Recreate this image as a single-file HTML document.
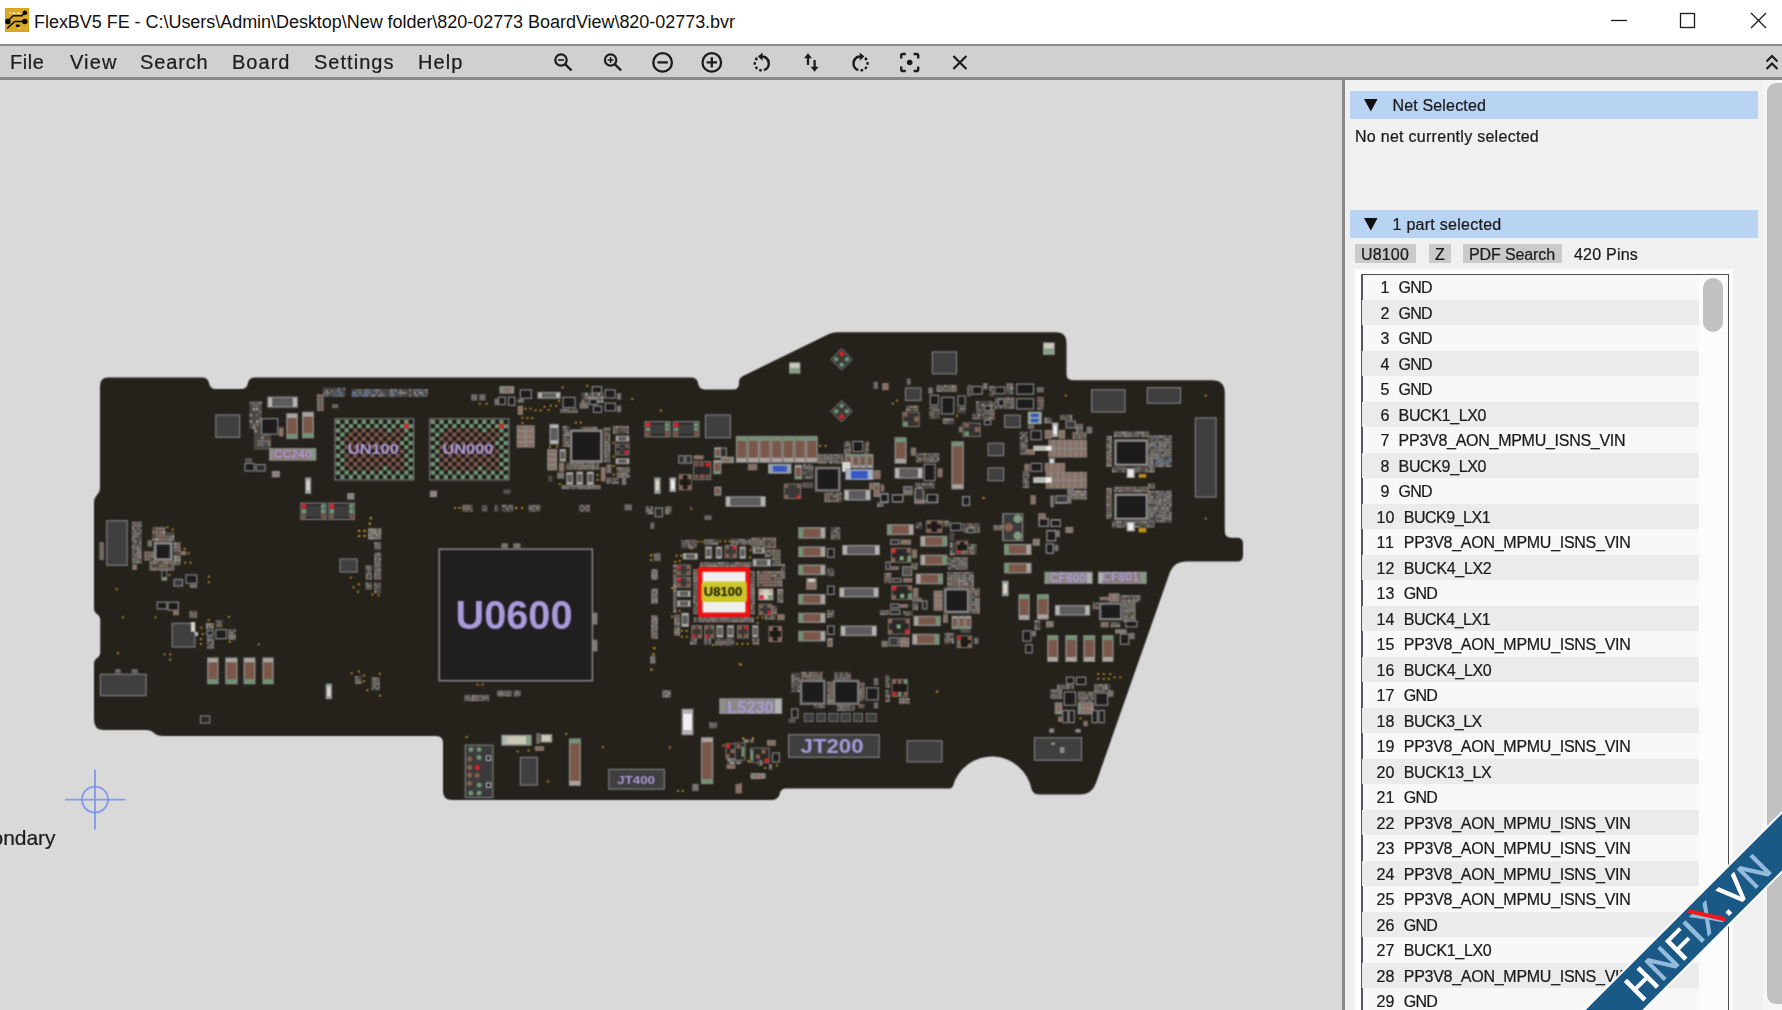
<!DOCTYPE html><html><head><meta charset="utf-8"><title>FlexBV5 FE</title><style>
html,body{margin:0;padding:0;}
body{width:1782px;height:1010px;overflow:hidden;position:relative;background:#d9d9d9;font-family:"Liberation Sans",sans-serif;}
.t{position:absolute;white-space:pre;line-height:1;-webkit-text-stroke:.22px;}
.nt{-webkit-text-stroke:0;}
.abs{position:absolute;}
#titlebar{left:0;top:0;width:1782px;height:44px;background:#fff;}
#menubar{left:0;top:44px;width:1782px;height:36px;background:#d0d0d0;box-sizing:border-box;border-top:2px solid #8c8c8c;border-bottom:3px solid #8a8a8a;}
#side{left:1342px;top:80px;width:440px;height:930px;background:#f0f0f0;box-sizing:border-box;border-left:3px solid #888;}
.hdr{position:absolute;left:1350.300px;width:408px;height:28px;background:#b9d4f2;}
.btn{position:absolute;top:244px;height:19px;background:#cacaca;}
.row{position:absolute;left:1362px;width:337px;height:25.5px;}
</style></head><body>
<div id="titlebar" class="abs"></div>
<div id="menubar" class="abs"></div>
<svg class="abs" style="left:5px;top:8px" width="24" height="24" viewBox="0 0 24 24"><rect width="24" height="24" fill="#d49f12"/><rect x=".7" y=".7" width="22.6" height="22.6" fill="#d8aa28"/>
<g stroke="#0c0a04" stroke-width="1.5" fill="none" stroke-linecap="round" stroke-linejoin="round"><path d="M19.500 4.800L17 7.800H8.200L3.400 12.200"/><path d="M19.500 13.600H9.600L2.600 20"/></g>
<g fill="#0c0a04"><circle cx="19.800" cy="4.700" r="2.200"/><path d="M20 2.500L22.600 5.200L20 6.500Z"/><circle cx="19.800" cy="13.500" r="2.800"/><rect x=".2" y="10.800" width="5.400" height="5.400" rx="2"/><rect x="10.800" y="16.600" width="4" height="2.400" rx="1"/></g>
<g fill="#fbf3d8"><rect x="4.200" y="4.400" width="1.700" height="1.300"/><rect x="7.400" y="4.400" width="3" height="1.300"/><rect x="12.100" y="4.400" width="3.100" height="1.300"/><rect x="13.600" y="19.600" width="1.500" height="1.200"/></g></svg><span class="t nt" style="left:34.00px;top:13.36px;font-size:18px;color:#111;letter-spacing:-0.038px;">FlexBV5 FE - C:\Users\Admin\Desktop\New folder\820-02773 BoardView\820-02773.bvr</span><svg class="abs" style="left:1600px;top:0" width="182" height="44" viewBox="1600 0 182 44" fill="none" stroke="#1a1a1a" stroke-width="1.3">
<path d="M1611 20.5H1627"/><rect x="1680.5" y="13.5" width="14" height="14"/><path d="M1751 13L1766 28M1766 13L1751 28"/></svg><div id="app" class="abs" style="left:0;top:0;width:1782px;height:1010px;will-change:transform"><span class="t " style="left:10.00px;top:52.27px;font-size:20px;color:#1c1c1c;letter-spacing:0.566px;">File</span><span class="t " style="left:70.00px;top:52.27px;font-size:20px;color:#1c1c1c;letter-spacing:1.125px;">View</span><span class="t " style="left:140.00px;top:52.27px;font-size:20px;color:#1c1c1c;letter-spacing:0.854px;">Search</span><span class="t " style="left:232.00px;top:52.27px;font-size:20px;color:#1c1c1c;letter-spacing:1.025px;">Board</span><span class="t " style="left:314.00px;top:52.27px;font-size:20px;color:#1c1c1c;letter-spacing:1.029px;">Settings</span><span class="t " style="left:418.00px;top:52.27px;font-size:20px;color:#1c1c1c;letter-spacing:1.090px;">Help</span><svg class="abs" style="left:540px;top:46px" width="1242" height="32" viewBox="540 46 1242 32" fill="none" stroke="#1c1c1c" stroke-width="2.4" stroke-linecap="butt">
<g stroke-width="2.2"><circle cx="561" cy="60" r="5.700"/><path d="M565.3 64.3L571.5 70.5" stroke-width="2.4"/><path d="M558 60H564" stroke-width="1.6"/></g>
<g stroke-width="2.2"><circle cx="610.6" cy="60" r="5.700"/><path d="M614.9 64.3L621.1 70.5" stroke-width="2.4"/><path d="M607.6 60H613.6M610.6 57V63" stroke-width="1.5"/></g>
<g stroke-width="2.3"><circle cx="662.6" cy="62.4" r="9.300"/><path d="M657.400 62.400H667.800"/></g>
<g stroke-width="2.3"><circle cx="711.8" cy="62.4" r="9.300"/><path d="M706.600 62.400H717M711.800 57.200V67.600"/></g>
<g><path d="M761.8 56.4A7 7 0 1 1 754.8 63.4" stroke-dasharray="2.6 2.2" transform="rotate(180 761.8 63.4)"/><path d="M761.8 56.4A7 7 0 0 1 768.8 63.4A7 7 0 0 1 764 70"/><path d="M762.6 52.4L758 56.6L762.6 60.8Z" fill="#1c1c1c" stroke="none"/></g>
<g stroke-width="2.3"><path d="M808 57V65M814.600 60V68"/><path d="M804 58.200L808 53.200L812 58.200ZM810.600 66.800L814.600 71.800L818.600 66.800Z" fill="#1c1c1c" stroke="none"/></g>
<g><path d="M860.5 56.4A7 7 0 1 0 867.5 63.4" stroke-dasharray="2.6 2.2" transform="rotate(180 860.5 63.4)"/><path d="M860.5 56.4A7 7 0 0 0 853.5 63.4A7 7 0 0 0 858.3 70"/><path d="M859.7 52.4L864.3 56.6L859.7 60.8Z" fill="#1c1c1c" stroke="none"/></g>
<g><path d="M901.2 58.6V55.6Q901.2 54 902.8 54H905.8M913.6 54H916.6Q918.2 54 918.2 55.6V58.6M918.2 66.4V69.4Q918.2 71 916.6 71H913.6M905.8 71H902.8Q901.2 71 901.2 69.4V66.4"/><circle cx="909.7" cy="62.5" r="2.8" fill="#1c1c1c" stroke="none"/></g>
<g><path d="M953.4 56L966.4 69M966.4 56L953.4 69" stroke-width="2.2"/></g>
<g><path d="M1766.5 61.5L1772 56L1777.500 61.5M1766.500 69L1772 63.5L1777.500 69" stroke-width="2.2"/></g>
</svg><svg class="abs" style="left:0;top:80px" width="1342" height="930" viewBox="0 80 1342 930" font-family="Liberation Sans, sans-serif" shape-rendering="auto"><defs><filter id="bl" x="80" y="320" width="1180" height="500" filterUnits="userSpaceOnUse" color-interpolation-filters="sRGB"><feConvolveMatrix order="3" kernelMatrix="1 2 1 2 5 2 1 2 1" divisor="17" edgeMode="duplicate" preserveAlpha="false"/></filter></defs><g filter="url(#bl)">
<path fill="#25221c" d="M108 377.500H202Q208 377.500 209 383Q210 389 216 389H241Q247 389 248 383Q249 377.500 255 377.500H691Q697 377.500 698 383Q699 389.500 705 389.500H733Q739 389.500 739 383.500V382Q739 378 743 376L829 334Q833 332.300 837 332.300H1056Q1066.500 332.300 1066.500 343V374Q1066.500 380.200 1073 380.200H1212Q1224.800 380.200 1224.800 393V531Q1224.800 537.700 1231 537.700H1237Q1243 537.700 1243 543.500V555.500Q1243 561.500 1237 561.500H1186Q1174 561.500 1170 572L1096 783Q1092 794.500 1080 794.500H1040Q1033 794.500 1031.500 789A40.400 40.400 0 0 0 953 786Q952 788.500 949 788.500H786Q781 788.500 780 793Q778.500 800 772 800H452Q443 800 443 791V743Q443 736 436 736H163Q157 736 154 733Q151 730 146 730H104Q94 730 94 720V664Q94 660 97 658Q100.200 656 100.200 652V620Q100.200 616 97 614Q94 612 94 608V503Q94 498 97 495Q100 492 100 488V386Q100 377.500 108 377.500Z"/>
<rect x="215.8" y="415" width="23.8" height="22.3" fill="#3f3f3f" stroke="#7c7c7c" stroke-width="1.2"/>
<rect x="267.3" y="396.6" width="30.5" height="11.1" fill="#8a8784"/>
<rect x="268.3" y="397.6" width="4" height="9.1" fill="#b5b5b5"/>
<rect x="272.3" y="398.1" width="20.5" height="8.1" fill="#5c5c5c"/>
<rect x="292.9" y="397.6" width="4" height="9.1" fill="#b5b5b5"/>
<rect x="249.4" y="401.4" width="12.6" height="27.8" fill="#6b6865" opacity=".55"/>
<path fill="#6c6a68" d="M249.7 401.7h2.5v2.5h-2.5zM252.8 401.7h2.5v2.5h-2.5zM256 401.7h2.5v2.5h-2.5zM252.8 404.8h2.5v2.5h-2.5zM259.1 411h2.5v2.5h-2.5zM256 414.1h2.5v2.5h-2.5zM259.1 417.2h2.5v2.5h-2.5z"/>
<path fill="#8d8985" d="M259.1 401.7h2.5v2.5h-2.5zM249.7 414.1h2.5v2.5h-2.5z"/>
<path fill="#8a6f63" d="M256 404.8h2.5v2.5h-2.5zM256 423.4h2.5v2.5h-2.5z"/>
<path fill="#9c9894" d="M252.8 407.9h2.5v2.5h-2.5zM256 407.9h2.5v2.5h-2.5zM249.7 420.3h2.5v2.5h-2.5zM256 420.3h2.5v2.5h-2.5zM252.8 426.5h2.5v2.5h-2.5z"/>
<path fill="#77736f" d="M259.1 420.3h2.5v2.5h-2.5zM252.8 423.4h2.5v2.5h-2.5z"/>
<rect x="253.9" y="429.3" width="17.1" height="20.7" fill="#6b6865" opacity=".55"/>
<path fill="#8d8985" d="M254.2 429.6h2.8v2.8h-2.8zM264.4 429.6h2.8v2.8h-2.8zM261 436.4h2.8v2.8h-2.8z"/>
<path fill="#6c6a68" d="M264.4 433h2.8v2.8h-2.8zM264.4 439.9h2.8v2.8h-2.8zM261 443.3h2.8v2.8h-2.8z"/>
<path fill="#77736f" d="M257.6 439.9h2.8v2.8h-2.8zM261 439.9h2.8v2.8h-2.8zM267.8 443.3h2.8v2.8h-2.8z"/>
<path fill="#8a6f63" d="M267.8 439.9h2.8v2.8h-2.8zM257.6 443.3h2.8v2.8h-2.8z"/>
<rect x="261.6" y="418.6" width="16.1" height="15.5" fill="#1d1b1c" stroke="#858585" stroke-width="1.2"/>
<rect x="279" y="427.5" width="4.5" height="9" fill="#8a7468"/>
<rect x="286.2" y="413.1" width="11.7" height="26" fill="#8a8784"/>
<rect x="287.2" y="414.1" width="9.7" height="4" fill="#a9a6a2"/>
<rect x="287.7" y="418.1" width="8.7" height="16" fill="#7b574a"/>
<rect x="287.2" y="434.1" width="9.7" height="4" fill="#6f9374"/>
<rect x="302" y="411.7" width="12" height="26.6" fill="#8a8784"/>
<rect x="303" y="412.7" width="10" height="4" fill="#a9a6a2"/>
<rect x="303.5" y="416.7" width="9" height="16.6" fill="#7b574a"/>
<rect x="303" y="433.2" width="10" height="4" fill="#6f9374"/>
<rect x="269.1" y="448.1" width="47.2" height="12.6" fill="#8f8f8f"/>
<rect x="273.1" y="449.6" width="37.2" height="9.6" fill="#8a776e"/>
<rect x="310.4" y="449.1" width="5" height="10.6" fill="#7f9a82"/>
<text x="292.7" y="458" font-size="11.5" font-weight="700" fill="#a99adb" text-anchor="middle" textLength="38" lengthAdjust="spacingAndGlyphs">CC240</text>
<rect x="245" y="463.5" width="9.2" height="7.4" fill="#1d1b1c" stroke="#858585" stroke-width="1.2"/>
<rect x="256.2" y="464.6" width="8.9" height="6.4" fill="#2b2b2b" stroke="#858585" stroke-width="1.2"/>
<rect x="244.9" y="458" width="7.2" height="4.5" fill="#55524f"/>
<rect x="271.8" y="470.9" width="8.1" height="6.5" fill="#8b8480"/>
<rect x="305" y="477.4" width="6.3" height="16.5" fill="#8a8784"/>
<rect x="306" y="478.4" width="4.3" height="2.3" fill="#9fae9f"/>
<rect x="306.5" y="480.7" width="3.3" height="9.9" fill="#d9d9cf"/>
<rect x="306" y="490.6" width="4.3" height="2.3" fill="#9fae9f"/>
<rect x="323" y="387.6" width="22.4" height="9.3" fill="#6b6865" opacity=".55"/>
<path fill="#9c9894" d="M338.3 387.9h1.9v1.7h-1.9zM325.8 390.2h1.9v1.7h-1.9zM325.8 392.6h1.9v1.7h-1.9z"/>
<path fill="#8d8985" d="M343.3 387.9h1.9v1.7h-1.9zM330.8 390.2h1.9v1.7h-1.9zM323.3 392.6h1.9v1.7h-1.9zM328.3 392.6h1.9v1.7h-1.9zM340.8 394.9h1.9v1.7h-1.9z"/>
<path fill="#5f79b0" d="M335.8 390.2h1.9v1.7h-1.9zM338.3 390.2h1.9v1.7h-1.9zM333.3 392.6h1.9v1.7h-1.9zM338.3 392.6h1.9v1.7h-1.9zM340.8 392.6h1.9v1.7h-1.9zM325.8 394.9h1.9v1.7h-1.9zM335.8 394.9h1.9v1.7h-1.9z"/>
<path fill="#77736f" d="M333.3 394.9h1.9v1.7h-1.9zM338.3 394.9h1.9v1.7h-1.9z"/>
<rect x="351.7" y="388.9" width="76.3" height="8.1" fill="#6b6865" opacity=".55"/>
<path fill="#77736f" d="M356.8 389.2h1.8v2.1h-1.8zM364 389.2h1.8v2.1h-1.8zM414 389.2h1.8v2.1h-1.8zM423.6 389.2h1.8v2.1h-1.8zM380.7 391.8h1.8v2.1h-1.8zM426 391.8h1.8v2.1h-1.8zM399.7 394.5h1.8v2.1h-1.8zM414 394.5h1.8v2.1h-1.8zM423.6 394.5h1.8v2.1h-1.8z"/>
<path fill="#5f79b0" d="M359.2 389.2h1.8v2.1h-1.8zM368.7 389.2h1.8v2.1h-1.8zM416.4 389.2h1.8v2.1h-1.8zM364 391.8h1.8v2.1h-1.8zM366.3 391.8h1.8v2.1h-1.8zM368.7 391.8h1.8v2.1h-1.8zM375.9 391.8h1.8v2.1h-1.8zM392.6 391.8h1.8v2.1h-1.8zM397.3 391.8h1.8v2.1h-1.8zM352 394.5h1.8v2.1h-1.8zM383 394.5h1.8v2.1h-1.8zM421.2 394.5h1.8v2.1h-1.8z"/>
<path fill="#8d8985" d="M366.3 389.2h1.8v2.1h-1.8zM375.9 389.2h1.8v2.1h-1.8zM392.6 389.2h1.8v2.1h-1.8zM399.7 389.2h1.8v2.1h-1.8zM409.3 389.2h1.8v2.1h-1.8zM359.2 391.8h1.8v2.1h-1.8zM404.5 391.8h1.8v2.1h-1.8z"/>
<path fill="#6f86b8" d="M373.5 389.2h1.8v2.1h-1.8zM378.3 389.2h1.8v2.1h-1.8zM418.8 389.2h1.8v2.1h-1.8zM352 391.8h1.8v2.1h-1.8zM354.4 391.8h1.8v2.1h-1.8zM390.2 391.8h1.8v2.1h-1.8zM354.4 394.5h1.8v2.1h-1.8zM356.8 394.5h1.8v2.1h-1.8zM361.6 394.5h1.8v2.1h-1.8zM364 394.5h1.8v2.1h-1.8zM390.2 394.5h1.8v2.1h-1.8zM409.3 394.5h1.8v2.1h-1.8z"/>
<path fill="#9c9894" d="M390.2 389.2h1.8v2.1h-1.8zM395 389.2h1.8v2.1h-1.8zM426 389.2h1.8v2.1h-1.8zM399.7 391.8h1.8v2.1h-1.8zM402.1 391.8h1.8v2.1h-1.8zM414 391.8h1.8v2.1h-1.8zM418.8 391.8h1.8v2.1h-1.8zM421.2 391.8h1.8v2.1h-1.8zM366.3 394.5h1.8v2.1h-1.8zM371.1 394.5h1.8v2.1h-1.8zM373.5 394.5h1.8v2.1h-1.8zM378.3 394.5h1.8v2.1h-1.8zM380.7 394.5h1.8v2.1h-1.8zM392.6 394.5h1.8v2.1h-1.8zM416.4 394.5h1.8v2.1h-1.8z"/>
<rect x="316.7" y="394.2" width="7.2" height="17.1" fill="#6b6865" opacity=".55"/>
<path fill="#8a7468" d="M317 394.5h3v2.8h-3zM320.6 394.5h3v2.8h-3zM320.6 401.4h3v2.8h-3zM317 404.8h3v2.8h-3zM320.6 408.2h3v2.8h-3z"/>
<path fill="#77736f" d="M317 398h3v2.8h-3zM320.6 398h3v2.8h-3zM317 401.4h3v2.8h-3zM320.6 404.8h3v2.8h-3zM317 408.2h3v2.8h-3z"/>
<rect x="332" y="404.1" width="6.3" height="4" fill="#6a6764"/>
<rect x="335" y="418.8" width="78.6" height="61.1" fill="#201d1b" stroke="#7c7c7c" stroke-width="1.2"/>
<rect x="336" y="419.8" width="4.3" height="4.2" fill="#6f9374"/>
<rect x="344.5" y="419.8" width="4.3" height="4.2" fill="#6f9374"/>
<rect x="353.1" y="419.8" width="4.3" height="4.2" fill="#6f9374"/>
<rect x="361.6" y="419.8" width="4.3" height="4.2" fill="#6f9374"/>
<rect x="370.1" y="419.8" width="4.3" height="4.2" fill="#6f9374"/>
<rect x="378.6" y="419.8" width="4.3" height="4.2" fill="#6f9374"/>
<rect x="387.1" y="419.8" width="4.3" height="4.2" fill="#6f9374"/>
<rect x="395.6" y="419.8" width="4.3" height="4.2" fill="#6f9374"/>
<rect x="404.2" y="419.8" width="4.3" height="4.2" fill="#6f9374"/>
<rect x="340.3" y="424.1" width="4.3" height="4.2" fill="#6f9374"/>
<rect x="348.8" y="424.1" width="4.3" height="4.2" fill="#6f9374"/>
<rect x="357.3" y="424.1" width="4.3" height="4.2" fill="#6f9374"/>
<rect x="365.8" y="424.1" width="4.3" height="4.2" fill="#6f9374"/>
<rect x="374.4" y="424.1" width="4.3" height="4.2" fill="#6f9374"/>
<rect x="382.9" y="424.1" width="4.3" height="4.2" fill="#6f9374"/>
<rect x="391.4" y="424.1" width="4.3" height="4.2" fill="#6f9374"/>
<rect x="399.9" y="424.1" width="4.3" height="4.2" fill="#6f9374"/>
<rect x="408.4" y="424.1" width="4.3" height="4.2" fill="#6f9374"/>
<rect x="336" y="428.3" width="4.3" height="4.2" fill="#6f9374"/>
<rect x="344.5" y="428.3" width="4.3" height="4.2" fill="#6f9374"/>
<rect x="353.1" y="428.3" width="4.3" height="4.2" fill="#7b574a"/>
<rect x="361.6" y="428.3" width="4.3" height="4.2" fill="#7b574a"/>
<rect x="370.1" y="428.3" width="4.3" height="4.2" fill="#7b574a"/>
<rect x="378.6" y="428.3" width="4.3" height="4.2" fill="#7b574a"/>
<rect x="387.1" y="428.3" width="4.3" height="4.2" fill="#6f9374"/>
<rect x="395.6" y="428.3" width="4.3" height="4.2" fill="#7b574a"/>
<rect x="404.2" y="428.3" width="4.3" height="4.2" fill="#6f9374"/>
<rect x="340.3" y="432.5" width="4.3" height="4.2" fill="#6f9374"/>
<rect x="348.8" y="432.5" width="4.3" height="4.2" fill="#7b574a"/>
<rect x="357.3" y="432.5" width="4.3" height="4.2" fill="#7b574a"/>
<rect x="365.8" y="432.5" width="4.3" height="4.2" fill="#7b574a"/>
<rect x="374.4" y="432.5" width="4.3" height="4.2" fill="#7b574a"/>
<rect x="382.9" y="432.5" width="4.3" height="4.2" fill="#7b574a"/>
<rect x="391.4" y="432.5" width="4.3" height="4.2" fill="#7b574a"/>
<rect x="399.9" y="432.5" width="4.3" height="4.2" fill="#7b574a"/>
<rect x="408.4" y="432.5" width="4.3" height="4.2" fill="#6f9374"/>
<rect x="336" y="436.7" width="4.3" height="4.2" fill="#6f9374"/>
<rect x="344.5" y="436.7" width="4.3" height="4.2" fill="#7b574a"/>
<rect x="353.1" y="436.7" width="4.3" height="4.2" fill="#7b574a"/>
<rect x="361.6" y="436.7" width="4.3" height="4.2" fill="#7b574a"/>
<rect x="370.1" y="436.7" width="4.3" height="4.2" fill="#7b574a"/>
<rect x="378.6" y="436.7" width="4.3" height="4.2" fill="#7b574a"/>
<rect x="387.1" y="436.7" width="4.3" height="4.2" fill="#7b574a"/>
<rect x="395.6" y="436.7" width="4.3" height="4.2" fill="#7b574a"/>
<rect x="404.2" y="436.7" width="4.3" height="4.2" fill="#6f9374"/>
<rect x="340.3" y="440.9" width="4.3" height="4.2" fill="#6f9374"/>
<rect x="348.8" y="440.9" width="4.3" height="4.2" fill="#7b574a"/>
<rect x="357.3" y="440.9" width="4.3" height="4.2" fill="#7b574a"/>
<rect x="365.8" y="440.9" width="4.3" height="4.2" fill="#7b574a"/>
<rect x="374.4" y="440.9" width="4.3" height="4.2" fill="#7b574a"/>
<rect x="382.9" y="440.9" width="4.3" height="4.2" fill="#7b574a"/>
<rect x="391.4" y="440.9" width="4.3" height="4.2" fill="#7b574a"/>
<rect x="399.9" y="440.9" width="4.3" height="4.2" fill="#6f9374"/>
<rect x="408.4" y="440.9" width="4.3" height="4.2" fill="#6f9374"/>
<rect x="336" y="445.1" width="4.3" height="4.2" fill="#6f9374"/>
<rect x="344.5" y="445.1" width="4.3" height="4.2" fill="#7b574a"/>
<rect x="353.1" y="445.1" width="4.3" height="4.2" fill="#7b574a"/>
<rect x="361.6" y="445.1" width="4.3" height="4.2" fill="#7b574a"/>
<rect x="370.1" y="445.1" width="4.3" height="4.2" fill="#7b574a"/>
<rect x="378.6" y="445.1" width="4.3" height="4.2" fill="#7b574a"/>
<rect x="387.1" y="445.1" width="4.3" height="4.2" fill="#7b574a"/>
<rect x="395.6" y="445.1" width="4.3" height="4.2" fill="#7b574a"/>
<rect x="404.2" y="445.1" width="4.3" height="4.2" fill="#6f9374"/>
<rect x="340.3" y="449.4" width="4.3" height="4.2" fill="#6f9374"/>
<rect x="348.8" y="449.4" width="4.3" height="4.2" fill="#7b574a"/>
<rect x="357.3" y="449.4" width="4.3" height="4.2" fill="#7b574a"/>
<rect x="365.8" y="449.4" width="4.3" height="4.2" fill="#7b574a"/>
<rect x="374.4" y="449.4" width="4.3" height="4.2" fill="#7b574a"/>
<rect x="382.9" y="449.4" width="4.3" height="4.2" fill="#7b574a"/>
<rect x="391.4" y="449.4" width="4.3" height="4.2" fill="#7b574a"/>
<rect x="399.9" y="449.4" width="4.3" height="4.2" fill="#7b574a"/>
<rect x="408.4" y="449.4" width="4.3" height="4.2" fill="#6f9374"/>
<rect x="336" y="453.6" width="4.3" height="4.2" fill="#6f9374"/>
<rect x="344.5" y="453.6" width="4.3" height="4.2" fill="#7b574a"/>
<rect x="353.1" y="453.6" width="4.3" height="4.2" fill="#7b574a"/>
<rect x="361.6" y="453.6" width="4.3" height="4.2" fill="#7b574a"/>
<rect x="370.1" y="453.6" width="4.3" height="4.2" fill="#7b574a"/>
<rect x="378.6" y="453.6" width="4.3" height="4.2" fill="#7b574a"/>
<rect x="387.1" y="453.6" width="4.3" height="4.2" fill="#7b574a"/>
<rect x="395.6" y="453.6" width="4.3" height="4.2" fill="#7b574a"/>
<rect x="404.2" y="453.6" width="4.3" height="4.2" fill="#6f9374"/>
<rect x="340.3" y="457.8" width="4.3" height="4.2" fill="#6f9374"/>
<rect x="348.8" y="457.8" width="4.3" height="4.2" fill="#7b574a"/>
<rect x="357.3" y="457.8" width="4.3" height="4.2" fill="#7b574a"/>
<rect x="365.8" y="457.8" width="4.3" height="4.2" fill="#7b574a"/>
<rect x="374.4" y="457.8" width="4.3" height="4.2" fill="#7b574a"/>
<rect x="382.9" y="457.8" width="4.3" height="4.2" fill="#7b574a"/>
<rect x="391.4" y="457.8" width="4.3" height="4.2" fill="#7b574a"/>
<rect x="399.9" y="457.8" width="4.3" height="4.2" fill="#7b574a"/>
<rect x="408.4" y="457.8" width="4.3" height="4.2" fill="#6f9374"/>
<rect x="336" y="462" width="4.3" height="4.2" fill="#6f9374"/>
<rect x="344.5" y="462" width="4.3" height="4.2" fill="#7b574a"/>
<rect x="353.1" y="462" width="4.3" height="4.2" fill="#7b574a"/>
<rect x="361.6" y="462" width="4.3" height="4.2" fill="#7b574a"/>
<rect x="370.1" y="462" width="4.3" height="4.2" fill="#7b574a"/>
<rect x="378.6" y="462" width="4.3" height="4.2" fill="#7b574a"/>
<rect x="387.1" y="462" width="4.3" height="4.2" fill="#7b574a"/>
<rect x="395.6" y="462" width="4.3" height="4.2" fill="#7b574a"/>
<rect x="404.2" y="462" width="4.3" height="4.2" fill="#6f9374"/>
<rect x="340.3" y="466.2" width="4.3" height="4.2" fill="#6f9374"/>
<rect x="348.8" y="466.2" width="4.3" height="4.2" fill="#7b574a"/>
<rect x="357.3" y="466.2" width="4.3" height="4.2" fill="#7b574a"/>
<rect x="365.8" y="466.2" width="4.3" height="4.2" fill="#7b574a"/>
<rect x="374.4" y="466.2" width="4.3" height="4.2" fill="#7b574a"/>
<rect x="382.9" y="466.2" width="4.3" height="4.2" fill="#6f9374"/>
<rect x="391.4" y="466.2" width="4.3" height="4.2" fill="#7b574a"/>
<rect x="399.9" y="466.2" width="4.3" height="4.2" fill="#7b574a"/>
<rect x="408.4" y="466.2" width="4.3" height="4.2" fill="#6f9374"/>
<rect x="336" y="470.5" width="4.3" height="4.2" fill="#6f9374"/>
<rect x="344.5" y="470.5" width="4.3" height="4.2" fill="#6f9374"/>
<rect x="353.1" y="470.5" width="4.3" height="4.2" fill="#6f9374"/>
<rect x="361.6" y="470.5" width="4.3" height="4.2" fill="#6f9374"/>
<rect x="370.1" y="470.5" width="4.3" height="4.2" fill="#6f9374"/>
<rect x="378.6" y="470.5" width="4.3" height="4.2" fill="#6f9374"/>
<rect x="387.1" y="470.5" width="4.3" height="4.2" fill="#6f9374"/>
<rect x="395.6" y="470.5" width="4.3" height="4.2" fill="#6f9374"/>
<rect x="404.2" y="470.5" width="4.3" height="4.2" fill="#6f9374"/>
<rect x="340.3" y="474.7" width="4.3" height="4.2" fill="#6f9374"/>
<rect x="348.8" y="474.7" width="4.3" height="4.2" fill="#6f9374"/>
<rect x="357.3" y="474.7" width="4.3" height="4.2" fill="#6f9374"/>
<rect x="365.8" y="474.7" width="4.3" height="4.2" fill="#6f9374"/>
<rect x="374.4" y="474.7" width="4.3" height="4.2" fill="#6f9374"/>
<rect x="382.9" y="474.7" width="4.3" height="4.2" fill="#6f9374"/>
<rect x="391.4" y="474.7" width="4.3" height="4.2" fill="#6f9374"/>
<rect x="399.9" y="474.7" width="4.3" height="4.2" fill="#6f9374"/>
<rect x="408.4" y="474.7" width="4.3" height="4.2" fill="#6f9374"/>
<rect x="404.2" y="424.1" width="4.3" height="4.2" fill="#e0202a"/>
<rect x="429.8" y="418.8" width="79" height="61.1" fill="#201d1b" stroke="#7c7c7c" stroke-width="1.2"/>
<rect x="430.8" y="419.8" width="4.3" height="4.2" fill="#6f9374"/>
<rect x="439.4" y="419.8" width="4.3" height="4.2" fill="#6f9374"/>
<rect x="448" y="419.8" width="4.3" height="4.2" fill="#6f9374"/>
<rect x="456.5" y="419.8" width="4.3" height="4.2" fill="#6f9374"/>
<rect x="465.1" y="419.8" width="4.3" height="4.2" fill="#6f9374"/>
<rect x="473.6" y="419.8" width="4.3" height="4.2" fill="#6f9374"/>
<rect x="482.2" y="419.8" width="4.3" height="4.2" fill="#6f9374"/>
<rect x="490.7" y="419.8" width="4.3" height="4.2" fill="#6f9374"/>
<rect x="499.3" y="419.8" width="4.3" height="4.2" fill="#6f9374"/>
<rect x="435.1" y="424.1" width="4.3" height="4.2" fill="#6f9374"/>
<rect x="443.7" y="424.1" width="4.3" height="4.2" fill="#6f9374"/>
<rect x="452.2" y="424.1" width="4.3" height="4.2" fill="#6f9374"/>
<rect x="460.8" y="424.1" width="4.3" height="4.2" fill="#6f9374"/>
<rect x="469.3" y="424.1" width="4.3" height="4.2" fill="#6f9374"/>
<rect x="477.9" y="424.1" width="4.3" height="4.2" fill="#6f9374"/>
<rect x="486.5" y="424.1" width="4.3" height="4.2" fill="#6f9374"/>
<rect x="495" y="424.1" width="4.3" height="4.2" fill="#6f9374"/>
<rect x="503.6" y="424.1" width="4.3" height="4.2" fill="#6f9374"/>
<rect x="430.8" y="428.3" width="4.3" height="4.2" fill="#6f9374"/>
<rect x="439.4" y="428.3" width="4.3" height="4.2" fill="#6f9374"/>
<rect x="448" y="428.3" width="4.3" height="4.2" fill="#7b574a"/>
<rect x="456.5" y="428.3" width="4.3" height="4.2" fill="#7b574a"/>
<rect x="465.1" y="428.3" width="4.3" height="4.2" fill="#7b574a"/>
<rect x="473.6" y="428.3" width="4.3" height="4.2" fill="#7b574a"/>
<rect x="482.2" y="428.3" width="4.3" height="4.2" fill="#6f9374"/>
<rect x="490.7" y="428.3" width="4.3" height="4.2" fill="#7b574a"/>
<rect x="499.3" y="428.3" width="4.3" height="4.2" fill="#6f9374"/>
<rect x="435.1" y="432.5" width="4.3" height="4.2" fill="#6f9374"/>
<rect x="443.7" y="432.5" width="4.3" height="4.2" fill="#7b574a"/>
<rect x="452.2" y="432.5" width="4.3" height="4.2" fill="#7b574a"/>
<rect x="460.8" y="432.5" width="4.3" height="4.2" fill="#7b574a"/>
<rect x="469.3" y="432.5" width="4.3" height="4.2" fill="#7b574a"/>
<rect x="477.9" y="432.5" width="4.3" height="4.2" fill="#7b574a"/>
<rect x="486.5" y="432.5" width="4.3" height="4.2" fill="#7b574a"/>
<rect x="495" y="432.5" width="4.3" height="4.2" fill="#7b574a"/>
<rect x="503.6" y="432.5" width="4.3" height="4.2" fill="#6f9374"/>
<rect x="430.8" y="436.7" width="4.3" height="4.2" fill="#6f9374"/>
<rect x="439.4" y="436.7" width="4.3" height="4.2" fill="#7b574a"/>
<rect x="448" y="436.7" width="4.3" height="4.2" fill="#7b574a"/>
<rect x="456.5" y="436.7" width="4.3" height="4.2" fill="#7b574a"/>
<rect x="465.1" y="436.7" width="4.3" height="4.2" fill="#7b574a"/>
<rect x="473.6" y="436.7" width="4.3" height="4.2" fill="#7b574a"/>
<rect x="482.2" y="436.7" width="4.3" height="4.2" fill="#7b574a"/>
<rect x="490.7" y="436.7" width="4.3" height="4.2" fill="#7b574a"/>
<rect x="499.3" y="436.7" width="4.3" height="4.2" fill="#6f9374"/>
<rect x="435.1" y="440.9" width="4.3" height="4.2" fill="#6f9374"/>
<rect x="443.7" y="440.9" width="4.3" height="4.2" fill="#7b574a"/>
<rect x="452.2" y="440.9" width="4.3" height="4.2" fill="#7b574a"/>
<rect x="460.8" y="440.9" width="4.3" height="4.2" fill="#7b574a"/>
<rect x="469.3" y="440.9" width="4.3" height="4.2" fill="#7b574a"/>
<rect x="477.9" y="440.9" width="4.3" height="4.2" fill="#7b574a"/>
<rect x="486.5" y="440.9" width="4.3" height="4.2" fill="#7b574a"/>
<rect x="495" y="440.9" width="4.3" height="4.2" fill="#6f9374"/>
<rect x="503.6" y="440.9" width="4.3" height="4.2" fill="#6f9374"/>
<rect x="430.8" y="445.1" width="4.3" height="4.2" fill="#6f9374"/>
<rect x="439.4" y="445.1" width="4.3" height="4.2" fill="#7b574a"/>
<rect x="448" y="445.1" width="4.3" height="4.2" fill="#7b574a"/>
<rect x="456.5" y="445.1" width="4.3" height="4.2" fill="#7b574a"/>
<rect x="465.1" y="445.1" width="4.3" height="4.2" fill="#7b574a"/>
<rect x="473.6" y="445.1" width="4.3" height="4.2" fill="#7b574a"/>
<rect x="482.2" y="445.1" width="4.3" height="4.2" fill="#7b574a"/>
<rect x="490.7" y="445.1" width="4.3" height="4.2" fill="#7b574a"/>
<rect x="499.3" y="445.1" width="4.3" height="4.2" fill="#6f9374"/>
<rect x="435.1" y="449.4" width="4.3" height="4.2" fill="#6f9374"/>
<rect x="443.7" y="449.4" width="4.3" height="4.2" fill="#7b574a"/>
<rect x="452.2" y="449.4" width="4.3" height="4.2" fill="#7b574a"/>
<rect x="460.8" y="449.4" width="4.3" height="4.2" fill="#7b574a"/>
<rect x="469.3" y="449.4" width="4.3" height="4.2" fill="#7b574a"/>
<rect x="477.9" y="449.4" width="4.3" height="4.2" fill="#7b574a"/>
<rect x="486.5" y="449.4" width="4.3" height="4.2" fill="#7b574a"/>
<rect x="495" y="449.4" width="4.3" height="4.2" fill="#7b574a"/>
<rect x="503.6" y="449.4" width="4.3" height="4.2" fill="#6f9374"/>
<rect x="430.8" y="453.6" width="4.3" height="4.2" fill="#6f9374"/>
<rect x="439.4" y="453.6" width="4.3" height="4.2" fill="#7b574a"/>
<rect x="448" y="453.6" width="4.3" height="4.2" fill="#7b574a"/>
<rect x="456.5" y="453.6" width="4.3" height="4.2" fill="#7b574a"/>
<rect x="465.1" y="453.6" width="4.3" height="4.2" fill="#7b574a"/>
<rect x="473.6" y="453.6" width="4.3" height="4.2" fill="#7b574a"/>
<rect x="482.2" y="453.6" width="4.3" height="4.2" fill="#7b574a"/>
<rect x="490.7" y="453.6" width="4.3" height="4.2" fill="#7b574a"/>
<rect x="499.3" y="453.6" width="4.3" height="4.2" fill="#6f9374"/>
<rect x="435.1" y="457.8" width="4.3" height="4.2" fill="#6f9374"/>
<rect x="443.7" y="457.8" width="4.3" height="4.2" fill="#7b574a"/>
<rect x="452.2" y="457.8" width="4.3" height="4.2" fill="#7b574a"/>
<rect x="460.8" y="457.8" width="4.3" height="4.2" fill="#7b574a"/>
<rect x="469.3" y="457.8" width="4.3" height="4.2" fill="#7b574a"/>
<rect x="477.9" y="457.8" width="4.3" height="4.2" fill="#7b574a"/>
<rect x="486.5" y="457.8" width="4.3" height="4.2" fill="#7b574a"/>
<rect x="495" y="457.8" width="4.3" height="4.2" fill="#7b574a"/>
<rect x="503.6" y="457.8" width="4.3" height="4.2" fill="#6f9374"/>
<rect x="430.8" y="462" width="4.3" height="4.2" fill="#6f9374"/>
<rect x="439.4" y="462" width="4.3" height="4.2" fill="#7b574a"/>
<rect x="448" y="462" width="4.3" height="4.2" fill="#7b574a"/>
<rect x="456.5" y="462" width="4.3" height="4.2" fill="#7b574a"/>
<rect x="465.1" y="462" width="4.3" height="4.2" fill="#7b574a"/>
<rect x="473.6" y="462" width="4.3" height="4.2" fill="#7b574a"/>
<rect x="482.2" y="462" width="4.3" height="4.2" fill="#7b574a"/>
<rect x="490.7" y="462" width="4.3" height="4.2" fill="#7b574a"/>
<rect x="499.3" y="462" width="4.3" height="4.2" fill="#6f9374"/>
<rect x="435.1" y="466.2" width="4.3" height="4.2" fill="#6f9374"/>
<rect x="443.7" y="466.2" width="4.3" height="4.2" fill="#7b574a"/>
<rect x="452.2" y="466.2" width="4.3" height="4.2" fill="#7b574a"/>
<rect x="460.8" y="466.2" width="4.3" height="4.2" fill="#7b574a"/>
<rect x="469.3" y="466.2" width="4.3" height="4.2" fill="#7b574a"/>
<rect x="477.9" y="466.2" width="4.3" height="4.2" fill="#6f9374"/>
<rect x="486.5" y="466.2" width="4.3" height="4.2" fill="#7b574a"/>
<rect x="495" y="466.2" width="4.3" height="4.2" fill="#7b574a"/>
<rect x="503.6" y="466.2" width="4.3" height="4.2" fill="#6f9374"/>
<rect x="430.8" y="470.5" width="4.3" height="4.2" fill="#6f9374"/>
<rect x="439.4" y="470.5" width="4.3" height="4.2" fill="#6f9374"/>
<rect x="448" y="470.5" width="4.3" height="4.2" fill="#6f9374"/>
<rect x="456.5" y="470.5" width="4.3" height="4.2" fill="#6f9374"/>
<rect x="465.1" y="470.5" width="4.3" height="4.2" fill="#6f9374"/>
<rect x="473.6" y="470.5" width="4.3" height="4.2" fill="#6f9374"/>
<rect x="482.2" y="470.5" width="4.3" height="4.2" fill="#6f9374"/>
<rect x="490.7" y="470.5" width="4.3" height="4.2" fill="#6f9374"/>
<rect x="499.3" y="470.5" width="4.3" height="4.2" fill="#6f9374"/>
<rect x="435.1" y="474.7" width="4.3" height="4.2" fill="#6f9374"/>
<rect x="443.7" y="474.7" width="4.3" height="4.2" fill="#6f9374"/>
<rect x="452.2" y="474.7" width="4.3" height="4.2" fill="#6f9374"/>
<rect x="460.8" y="474.7" width="4.3" height="4.2" fill="#6f9374"/>
<rect x="469.3" y="474.7" width="4.3" height="4.2" fill="#6f9374"/>
<rect x="477.9" y="474.7" width="4.3" height="4.2" fill="#6f9374"/>
<rect x="486.5" y="474.7" width="4.3" height="4.2" fill="#6f9374"/>
<rect x="495" y="474.7" width="4.3" height="4.2" fill="#6f9374"/>
<rect x="503.6" y="474.7" width="4.3" height="4.2" fill="#6f9374"/>
<rect x="499.3" y="424.1" width="4.3" height="4.2" fill="#e0202a"/>
<text x="373.3" y="453.7" font-size="15.5" font-weight="700" fill="#a99adb" text-anchor="middle" textLength="51" lengthAdjust="spacingAndGlyphs">UN100</text>
<text x="467.9" y="453.7" font-size="15.5" font-weight="700" fill="#a99adb" text-anchor="middle" textLength="51" lengthAdjust="spacingAndGlyphs">UN000</text>
<rect x="300.9" y="503.2" width="25.3" height="16.2" fill="#2a2826" stroke="#7c7c7c" stroke-width="1.2"/>
<rect x="306.1" y="505.7" width="14.9" height="11.2" fill="#3d3d3d"/>
<rect x="301.9" y="504.2" width="4.2" height="4.2" fill="#e0202a"/>
<rect x="321" y="504.2" width="4.2" height="4.2" fill="#6f9374"/>
<rect x="301.9" y="514.2" width="4.2" height="4.2" fill="#7b574a"/>
<rect x="321" y="514.2" width="4.2" height="4.2" fill="#7b574a"/>
<rect x="301.9" y="508.9" width="4.2" height="4.8" fill="#6f9374"/>
<rect x="321" y="508.9" width="4.2" height="4.8" fill="#6f9374"/>
<rect x="328.9" y="503.2" width="25.5" height="16.2" fill="#2a2826" stroke="#7c7c7c" stroke-width="1.2"/>
<rect x="334.1" y="505.7" width="15.1" height="11.2" fill="#3d3d3d"/>
<rect x="329.9" y="504.2" width="4.2" height="4.2" fill="#e0202a"/>
<rect x="349.2" y="504.2" width="4.2" height="4.2" fill="#6f9374"/>
<rect x="329.9" y="514.2" width="4.2" height="4.2" fill="#7b574a"/>
<rect x="349.2" y="514.2" width="4.2" height="4.2" fill="#7b574a"/>
<rect x="329.9" y="508.9" width="4.2" height="4.8" fill="#6f9374"/>
<rect x="349.2" y="508.9" width="4.2" height="4.8" fill="#6f9374"/>
<rect x="347.2" y="493" width="7.2" height="6.6" fill="#8b8480"/>
<rect x="429.8" y="490.7" width="7.2" height="6.5" fill="#8b8480"/>
<rect x="503.5" y="489.4" width="7.2" height="4.5" fill="#55524f"/>
<rect x="358" y="529.8" width="1.9" height="1.9" fill="#bb8e1e"/>
<rect x="363.4" y="529.8" width="1.9" height="1.9" fill="#bb8e1e"/>
<rect x="358" y="535.1" width="1.9" height="1.9" fill="#bb8e1e"/>
<rect x="363.4" y="535.1" width="1.9" height="1.9" fill="#bb8e1e"/>
<rect x="369.6" y="517.2" width="1.9" height="1.9" fill="#bb8e1e"/>
<rect x="368.7" y="522.6" width="1.9" height="1.9" fill="#bb8e1e"/>
<rect x="454" y="507" width="1.9" height="1.9" fill="#bb8e1e"/>
<rect x="458.5" y="507" width="1.9" height="1.9" fill="#bb8e1e"/>
<rect x="515.1" y="507" width="1.9" height="1.9" fill="#bb8e1e"/>
<rect x="367.9" y="528.4" width="13.5" height="11.3" fill="#6b6865" opacity=".55"/>
<path fill="#8a6f63" d="M368.2 528.7h2.1v2.2h-2.1zM379 528.7h2.1v2.2h-2.1zM368.2 531.5h2.1v2.2h-2.1zM370.9 531.5h2.1v2.2h-2.1zM379 531.5h2.1v2.2h-2.1zM373.6 534.3h2.1v2.2h-2.1zM368.2 537.2h2.1v2.2h-2.1z"/>
<path fill="#8d8985" d="M370.9 528.7h2.1v2.2h-2.1zM368.2 534.3h2.1v2.2h-2.1zM379 534.3h2.1v2.2h-2.1zM370.9 537.2h2.1v2.2h-2.1zM373.6 537.2h2.1v2.2h-2.1z"/>
<path fill="#9c9894" d="M373.6 528.7h2.1v2.2h-2.1zM373.6 531.5h2.1v2.2h-2.1z"/>
<path fill="#6c6a68" d="M370.9 534.3h2.1v2.2h-2.1zM376.3 537.2h2.1v2.2h-2.1z"/>
<path fill="#77736f" d="M376.3 534.3h2.1v2.2h-2.1z"/>
<rect x="374.2" y="542" width="6.8" height="7.5" fill="#6b6865" opacity=".55"/>
<path fill="#77736f" d="M374.5 542.3h1.7v1.9h-1.7z"/>
<path fill="#9c9894" d="M376.8 542.3h1.7v1.9h-1.7z"/>
<path fill="#6c6a68" d="M374.5 544.8h1.7v1.9h-1.7zM376.8 544.8h1.7v1.9h-1.7zM379 544.8h1.7v1.9h-1.7z"/>
<path fill="#8a6f63" d="M376.8 547.4h1.7v1.9h-1.7zM379 547.4h1.7v1.9h-1.7z"/>
<rect x="462.2" y="504.7" width="10.8" height="7.2" fill="#6b6865" opacity=".55"/>
<path fill="#8a6f63" d="M462.5 505h2.1v1.8h-2.1zM467.9 505h2.1v1.8h-2.1zM465.2 507.4h2.1v1.8h-2.1zM465.2 509.8h2.1v1.8h-2.1zM470.5 509.8h2.1v1.8h-2.1z"/>
<path fill="#8d8985" d="M465.2 505h2.1v1.8h-2.1z"/>
<path fill="#9c9894" d="M462.5 507.4h2.1v1.8h-2.1zM467.9 507.4h2.1v1.8h-2.1z"/>
<rect x="481.9" y="505" width="5.4" height="6.5" fill="#6b6865" opacity=".55"/>
<path fill="#6c6a68" d="M482.2 505.3h2.1v1.6h-2.1zM484.9 507.5h2.1v1.6h-2.1zM482.2 509.6h2.1v1.6h-2.1zM484.9 509.6h2.1v1.6h-2.1z"/>
<rect x="494.5" y="505" width="4" height="6.5" fill="#6b6865" opacity=".55"/>
<path fill="#6c6a68" d="M494.8 505.3h1.4v1.6h-1.4z"/>
<path fill="#8d8985" d="M494.8 507.5h1.4v1.6h-1.4z"/>
<path fill="#8a6f63" d="M494.8 509.6h1.4v1.6h-1.4z"/>
<rect x="501.7" y="504.7" width="11.7" height="7.2" fill="#6b6865" opacity=".55"/>
<path fill="#9c9894" d="M502 505h1.7v1.8h-1.7zM504.3 505h1.7v1.8h-1.7zM509 505h1.7v1.8h-1.7zM506.6 507.4h1.7v1.8h-1.7z"/>
<path fill="#6c6a68" d="M511.3 505h1.7v1.8h-1.7z"/>
<path fill="#8d8985" d="M511.3 507.4h1.7v1.8h-1.7z"/>
<path fill="#77736f" d="M506.6 509.8h1.7v1.8h-1.7z"/>
<rect x="471.1" y="394.2" width="6.3" height="6.3" fill="#6e6b68"/>
<rect x="479.2" y="394.2" width="6.3" height="6.3" fill="#6e6b68"/>
<rect x="478.8" y="402.8" width="1.9" height="1.9" fill="#bb8e1e"/>
<rect x="485.6" y="402.8" width="1.9" height="1.9" fill="#bb8e1e"/>
<rect x="499.5" y="386.2" width="14.7" height="7.2" fill="#8a8784"/>
<rect x="502.5" y="387.7" width="8.7" height="4.2" fill="#8a6f63"/>
<rect x="498.6" y="397.1" width="6.5" height="7.4" fill="#1d1b1c" stroke="#858585" stroke-width="1.2"/>
<rect x="508.5" y="397.1" width="6.2" height="8.3" fill="#1d1b1c" stroke="#858585" stroke-width="1.2"/>
<rect x="494.5" y="398.7" width="3.6" height="6.3" fill="#77736f"/>
<rect x="106.7" y="520.7" width="20.5" height="44.6" fill="#3f3f3f" stroke="#7c7c7c" stroke-width="1.2"/>
<rect x="99.3" y="542.1" width="4.7" height="18" fill="#6f6a66"/>
<rect x="131.7" y="521.4" width="10.1" height="42.2" fill="#6b6865" opacity=".55"/>
<path fill="#8a6f63" d="M132 521.7h1.9v2h-1.9zM134.5 521.7h1.9v2h-1.9zM137 521.7h1.9v2h-1.9zM137 527h1.9v2h-1.9zM132 529.6h1.9v2h-1.9zM132 534.9h1.9v2h-1.9zM137 534.9h1.9v2h-1.9zM132 540.2h1.9v2h-1.9zM134.5 545.5h1.9v2h-1.9zM137 556h1.9v2h-1.9zM134.5 558.6h1.9v2h-1.9zM137 558.6h1.9v2h-1.9z"/>
<path fill="#6c6a68" d="M139.5 521.7h1.9v2h-1.9zM132 524.4h1.9v2h-1.9zM137 524.4h1.9v2h-1.9zM139.5 532.3h1.9v2h-1.9zM134.5 537.5h1.9v2h-1.9zM139.5 537.5h1.9v2h-1.9zM139.5 545.5h1.9v2h-1.9zM132 548.1h1.9v2h-1.9zM134.5 548.1h1.9v2h-1.9zM132 550.7h1.9v2h-1.9z"/>
<path fill="#8d8985" d="M134.5 524.4h1.9v2h-1.9zM134.5 529.6h1.9v2h-1.9zM139.5 529.6h1.9v2h-1.9zM134.5 532.3h1.9v2h-1.9zM137 532.3h1.9v2h-1.9zM139.5 542.8h1.9v2h-1.9zM137 545.5h1.9v2h-1.9zM134.5 553.4h1.9v2h-1.9zM132 558.6h1.9v2h-1.9zM134.5 561.3h1.9v2h-1.9z"/>
<path fill="#9c9894" d="M139.5 524.4h1.9v2h-1.9zM132 527h1.9v2h-1.9zM134.5 534.9h1.9v2h-1.9zM132 537.5h1.9v2h-1.9zM134.5 540.2h1.9v2h-1.9zM132 545.5h1.9v2h-1.9zM137 548.1h1.9v2h-1.9zM137 550.7h1.9v2h-1.9zM139.5 550.7h1.9v2h-1.9zM137 553.4h1.9v2h-1.9zM139.5 553.4h1.9v2h-1.9zM139.5 556h1.9v2h-1.9zM137 561.3h1.9v2h-1.9z"/>
<path fill="#77736f" d="M132 532.3h1.9v2h-1.9zM139.5 540.2h1.9v2h-1.9zM134.5 542.8h1.9v2h-1.9zM139.5 548.1h1.9v2h-1.9zM132 553.4h1.9v2h-1.9zM134.5 556h1.9v2h-1.9zM139.5 558.6h1.9v2h-1.9zM132 561.3h1.9v2h-1.9zM139.5 561.3h1.9v2h-1.9z"/>
<rect x="132.2" y="564.5" width="4.8" height="5.4" fill="#8a7468"/>
<rect x="152" y="526.8" width="13.5" height="14.4" fill="#6b6865" opacity=".55"/>
<path fill="#8a6f63" d="M155.6 527.1h2.8v3h-2.8zM162.4 527.1h2.8v3h-2.8zM152.3 530.7h2.8v3h-2.8zM155.6 530.7h2.8v3h-2.8zM159 530.7h2.8v3h-2.8zM159 534.3h2.8v3h-2.8zM162.4 534.3h2.8v3h-2.8zM152.3 537.9h2.8v3h-2.8zM159 537.9h2.8v3h-2.8zM162.4 537.9h2.8v3h-2.8z"/>
<path fill="#77736f" d="M159 527.1h2.8v3h-2.8zM155.6 534.3h2.8v3h-2.8z"/>
<path fill="#9c9894" d="M162.4 530.7h2.8v3h-2.8zM155.6 537.9h2.8v3h-2.8z"/>
<rect x="165.4" y="532.2" width="9" height="9" fill="#6b6865" opacity=".55"/>
<path fill="#6c6a68" d="M165.7 535.5h2.4v2.4h-2.4z"/>
<path fill="#8a6f63" d="M168.7 535.5h2.4v2.4h-2.4z"/>
<path fill="#9c9894" d="M171.7 535.5h2.4v2.4h-2.4zM168.7 538.5h2.4v2.4h-2.4z"/>
<path fill="#77736f" d="M165.7 538.5h2.4v2.4h-2.4z"/>
<path fill="#8d8985" d="M171.7 538.5h2.4v2.4h-2.4z"/>
<rect x="143.9" y="551.1" width="9.9" height="9.9" fill="#6b6865" opacity=".55"/>
<path fill="#8a6f63" d="M144.2 551.4h2.7v2.7h-2.7zM147.5 551.4h2.7v2.7h-2.7zM150.8 551.4h2.7v2.7h-2.7zM144.2 554.6h2.7v2.7h-2.7zM147.5 554.6h2.7v2.7h-2.7zM144.2 557.9h2.7v2.7h-2.7zM147.5 557.9h2.7v2.7h-2.7z"/>
<path fill="#8d8985" d="M150.8 554.6h2.7v2.7h-2.7z"/>
<rect x="149.3" y="560.9" width="25.1" height="9.9" fill="#6b6865" opacity=".55"/>
<path fill="#8a6f63" d="M149.6 561.2h2.5v2.7h-2.5zM155.8 561.2h2.5v2.7h-2.5zM162.1 561.2h2.5v2.7h-2.5zM168.4 561.2h2.5v2.7h-2.5zM159 564.5h2.5v2.7h-2.5zM165.3 564.5h2.5v2.7h-2.5zM155.8 567.8h2.5v2.7h-2.5zM159 567.8h2.5v2.7h-2.5zM168.4 567.8h2.5v2.7h-2.5zM171.6 567.8h2.5v2.7h-2.5z"/>
<path fill="#8d8985" d="M152.7 561.2h2.5v2.7h-2.5zM165.3 561.2h2.5v2.7h-2.5zM152.7 567.8h2.5v2.7h-2.5z"/>
<path fill="#77736f" d="M171.6 561.2h2.5v2.7h-2.5zM149.6 564.5h2.5v2.7h-2.5zM162.1 564.5h2.5v2.7h-2.5zM171.6 564.5h2.5v2.7h-2.5zM149.6 567.8h2.5v2.7h-2.5zM162.1 567.8h2.5v2.7h-2.5zM165.3 567.8h2.5v2.7h-2.5z"/>
<rect x="173.5" y="542.1" width="7.2" height="23.3" fill="#6b6865" opacity=".55"/>
<path fill="#9c9894" d="M173.8 542.4h3v2.7h-3zM173.8 555.7h3v2.7h-3zM173.8 559h3v2.7h-3zM177.4 559h3v2.7h-3z"/>
<path fill="#8a6f63" d="M177.4 542.4h3v2.7h-3zM177.4 545.7h3v2.7h-3zM177.4 549h3v2.7h-3zM173.8 562.4h3v2.7h-3z"/>
<path fill="#8d8985" d="M173.8 545.7h3v2.7h-3zM177.4 555.7h3v2.7h-3z"/>
<path fill="#6c6a68" d="M173.8 549h3v2.7h-3zM177.4 562.4h3v2.7h-3z"/>
<rect x="147.5" y="540.3" width="4.5" height="6.3" fill="#77736f"/>
<rect x="153.7" y="541.7" width="18.9" height="19.2" fill="#8a8784"/>
<rect x="156" y="544" width="14.3" height="14.8" fill="#1d1b1c" stroke="#858585" stroke-width="1.2"/>
<rect x="180.7" y="551.1" width="5.4" height="4" fill="#8a7468"/>
<rect x="161.5" y="569.9" width="5.7" height="10.8" fill="#8a8784"/>
<rect x="162.5" y="570.9" width="3.7" height="6.3" fill="#1d1b1c"/>
<rect x="162.5" y="577.2" width="3.7" height="2.5" fill="#6f9374"/>
<rect x="174" y="579.4" width="8.5" height="6.7" fill="#3a3a3a" stroke="#858585" stroke-width="1.2"/>
<rect x="186" y="574.9" width="10.7" height="8.3" fill="#1d1b1c" stroke="#858585" stroke-width="1.2"/>
<rect x="189.7" y="584.3" width="7.5" height="3.6" fill="#77736f"/>
<rect x="157.3" y="602.2" width="9.4" height="6.7" fill="#1d1b1c" stroke="#858585" stroke-width="1.2"/>
<rect x="168.1" y="602.2" width="10.3" height="8" fill="#1d1b1c" stroke="#858585" stroke-width="1.2"/>
<rect x="173" y="610.7" width="5.9" height="4.5" fill="#8a7468"/>
<rect x="189.3" y="610.7" width="7.9" height="7.2" fill="#6b6865" opacity=".55"/>
<path fill="#8d8985" d="M189.6 611h2v1.8h-2zM189.6 613.4h2v1.8h-2zM192.2 613.4h2v1.8h-2zM194.9 615.8h2v1.8h-2z"/>
<path fill="#8a7468" d="M194.9 611h2v1.8h-2zM194.9 613.4h2v1.8h-2zM189.6 615.8h2v1.8h-2zM192.2 615.8h2v1.8h-2z"/>
<rect x="172.2" y="623.4" width="22.7" height="23.6" fill="#3f3f3f" stroke="#7c7c7c" stroke-width="1.2"/>
<rect x="190.9" y="622" width="4.1" height="9.9" fill="#cfcfc4"/>
<rect x="195" y="631.9" width="3.1" height="4" fill="#b5b5b0"/>
<rect x="205.8" y="622.9" width="8.1" height="6.3" fill="#6b6865" opacity=".55"/>
<path fill="#9c9894" d="M206.1 623.2h2.1v2.5h-2.1zM208.8 623.2h2.1v2.5h-2.1zM206.1 626.3h2.1v2.5h-2.1zM211.5 626.3h2.1v2.5h-2.1z"/>
<path fill="#8a6f63" d="M211.5 623.2h2.1v2.5h-2.1zM208.8 626.3h2.1v2.5h-2.1z"/>
<rect x="215.7" y="620.2" width="6.8" height="7.2" fill="#6b6865" opacity=".55"/>
<path fill="#77736f" d="M216 620.5h1.7v1.8h-1.7zM218.3 625.3h1.7v1.8h-1.7z"/>
<path fill="#6c6a68" d="M218.3 620.5h1.7v1.8h-1.7zM220.5 620.5h1.7v1.8h-1.7z"/>
<path fill="#8d8985" d="M218.3 622.9h1.7v1.8h-1.7z"/>
<path fill="#8a6f63" d="M216 625.3h1.7v1.8h-1.7zM220.5 625.3h1.7v1.8h-1.7z"/>
<rect x="206.9" y="630.6" width="6.2" height="4.7" fill="#2b2b2b" stroke="#858585" stroke-width="1.2"/>
<rect x="206.7" y="636.3" width="7.5" height="12.6" fill="#6b6865" opacity=".55"/>
<path fill="#5f79b0" d="M207 636.6h1.9v1.9h-1.9zM207 646.7h1.9v1.9h-1.9z"/>
<path fill="#77736f" d="M209.5 636.6h1.9v1.9h-1.9zM212 639.2h1.9v1.9h-1.9zM207 641.7h1.9v1.9h-1.9zM212 644.2h1.9v1.9h-1.9z"/>
<path fill="#9c9894" d="M207 639.2h1.9v1.9h-1.9zM212 641.7h1.9v1.9h-1.9z"/>
<path fill="#8d8985" d="M209.5 639.2h1.9v1.9h-1.9zM209.5 644.2h1.9v1.9h-1.9zM209.5 646.7h1.9v1.9h-1.9zM212 646.7h1.9v1.9h-1.9z"/>
<rect x="215.8" y="629.7" width="10.5" height="8.9" fill="#1d1b1c" stroke="#858585" stroke-width="1.2"/>
<rect x="228.3" y="629.2" width="7.5" height="10.8" fill="#6b6865" opacity=".55"/>
<path fill="#8d8985" d="M228.6 629.5h1.9v2.1h-1.9zM233.6 629.5h1.9v2.1h-1.9zM228.6 632.2h1.9v2.1h-1.9zM231.1 634.9h1.9v2.1h-1.9zM233.6 637.5h1.9v2.1h-1.9z"/>
<path fill="#9c9894" d="M231.1 632.2h1.9v2.1h-1.9zM228.6 634.9h1.9v2.1h-1.9zM233.6 634.9h1.9v2.1h-1.9zM228.6 637.5h1.9v2.1h-1.9zM231.1 637.5h1.9v2.1h-1.9z"/>
<rect x="166.6" y="526.4" width="1.9" height="1.9" fill="#bb8e1e"/>
<rect x="171.7" y="528.6" width="1.9" height="1.9" fill="#bb8e1e"/>
<rect x="183.7" y="547.9" width="1.9" height="1.9" fill="#bb8e1e"/>
<rect x="187.5" y="552.3" width="1.9" height="1.9" fill="#bb8e1e"/>
<rect x="184.2" y="561.8" width="1.9" height="1.9" fill="#bb8e1e"/>
<rect x="189.6" y="561.8" width="1.9" height="1.9" fill="#bb8e1e"/>
<rect x="168.6" y="574" width="1.9" height="1.9" fill="#bb8e1e"/>
<rect x="207.9" y="575.6" width="1.9" height="1.9" fill="#bb8e1e"/>
<rect x="207.9" y="581.3" width="1.9" height="1.9" fill="#bb8e1e"/>
<rect x="115.6" y="588.2" width="1.9" height="1.9" fill="#bb8e1e"/>
<rect x="121.9" y="616.5" width="1.9" height="1.9" fill="#bb8e1e"/>
<rect x="154.6" y="616.5" width="1.9" height="1.9" fill="#bb8e1e"/>
<rect x="116.9" y="652.1" width="1.9" height="1.9" fill="#bb8e1e"/>
<rect x="163.6" y="653.4" width="1.9" height="1.9" fill="#bb8e1e"/>
<rect x="169.3" y="653.4" width="1.9" height="1.9" fill="#bb8e1e"/>
<rect x="169.3" y="658.7" width="1.9" height="1.9" fill="#bb8e1e"/>
<rect x="207.6" y="619.2" width="1.9" height="1.9" fill="#bb8e1e"/>
<rect x="227.9" y="616" width="1.9" height="1.9" fill="#bb8e1e"/>
<rect x="200.4" y="626.8" width="1.9" height="1.9" fill="#bb8e1e"/>
<rect x="201.8" y="633.1" width="1.9" height="1.9" fill="#bb8e1e"/>
<rect x="200" y="638.1" width="1.9" height="1.9" fill="#bb8e1e"/>
<rect x="200" y="643.1" width="1.9" height="1.9" fill="#bb8e1e"/>
<rect x="228.8" y="640.8" width="1.9" height="1.9" fill="#bb8e1e"/>
<rect x="257.8" y="643.5" width="1.9" height="1.9" fill="#bb8e1e"/>
<rect x="370.1" y="517.4" width="1.9" height="1.9" fill="#bb8e1e"/>
<rect x="368.8" y="522.8" width="1.9" height="1.9" fill="#bb8e1e"/>
<rect x="358.4" y="530" width="1.9" height="1.9" fill="#bb8e1e"/>
<rect x="363.8" y="530" width="1.9" height="1.9" fill="#bb8e1e"/>
<rect x="358.4" y="535" width="1.9" height="1.9" fill="#bb8e1e"/>
<rect x="363.8" y="535" width="1.9" height="1.9" fill="#bb8e1e"/>
<rect x="350" y="576.7" width="1.9" height="1.9" fill="#bb8e1e"/>
<rect x="357.9" y="583.3" width="1.9" height="1.9" fill="#bb8e1e"/>
<rect x="352.5" y="586.4" width="1.9" height="1.9" fill="#bb8e1e"/>
<rect x="357" y="590.9" width="1.9" height="1.9" fill="#bb8e1e"/>
<rect x="371.5" y="593.6" width="1.9" height="1.9" fill="#bb8e1e"/>
<rect x="377.6" y="594.3" width="1.9" height="1.9" fill="#bb8e1e"/>
<rect x="368" y="528.1" width="13.3" height="11.3" fill="#6b6865" opacity=".55"/>
<path fill="#9c9894" d="M368.3 528.4h2.1v2.2h-2.1zM370.9 528.4h2.1v2.2h-2.1zM373.6 531.2h2.1v2.2h-2.1zM378.9 531.2h2.1v2.2h-2.1zM368.3 534h2.1v2.2h-2.1zM376.2 534h2.1v2.2h-2.1zM370.9 536.9h2.1v2.2h-2.1z"/>
<path fill="#8d8985" d="M373.6 528.4h2.1v2.2h-2.1zM378.9 528.4h2.1v2.2h-2.1zM370.9 531.2h2.1v2.2h-2.1zM368.3 536.9h2.1v2.2h-2.1z"/>
<path fill="#6c6a68" d="M376.2 528.4h2.1v2.2h-2.1zM373.6 534h2.1v2.2h-2.1z"/>
<path fill="#8a6f63" d="M368.3 531.2h2.1v2.2h-2.1zM376.2 531.2h2.1v2.2h-2.1zM378.9 534h2.1v2.2h-2.1zM376.2 536.9h2.1v2.2h-2.1z"/>
<path fill="#77736f" d="M370.9 534h2.1v2.2h-2.1zM373.6 536.9h2.1v2.2h-2.1zM378.9 536.9h2.1v2.2h-2.1z"/>
<rect x="374.1" y="542.1" width="6.8" height="7.2" fill="#6b6865" opacity=".55"/>
<path fill="#9c9894" d="M374.4 542.4h1.7v1.8h-1.7z"/>
<path fill="#77736f" d="M376.6 542.4h1.7v1.8h-1.7zM376.6 547.2h1.7v1.8h-1.7z"/>
<path fill="#6c6a68" d="M378.9 542.4h1.7v1.8h-1.7zM376.6 544.8h1.7v1.8h-1.7zM374.4 547.2h1.7v1.8h-1.7z"/>
<rect x="374.1" y="552.5" width="7.2" height="27.3" fill="#6b6865" opacity=".55"/>
<path fill="#6c6a68" d="M374.4 552.8h1.8v2.1h-1.8zM379.2 555.5h1.8v2.1h-1.8zM379.2 561h1.8v2.1h-1.8zM379.2 566.4h1.8v2.1h-1.8zM379.2 571.9h1.8v2.1h-1.8z"/>
<path fill="#9c9894" d="M376.8 552.8h1.8v2.1h-1.8zM374.4 558.2h1.8v2.1h-1.8zM379.2 558.2h1.8v2.1h-1.8zM376.8 563.7h1.8v2.1h-1.8zM376.8 569.2h1.8v2.1h-1.8zM374.4 574.6h1.8v2.1h-1.8z"/>
<path fill="#8a6f63" d="M379.2 552.8h1.8v2.1h-1.8zM376.8 566.4h1.8v2.1h-1.8zM374.4 569.2h1.8v2.1h-1.8zM376.8 574.6h1.8v2.1h-1.8zM376.8 577.4h1.8v2.1h-1.8zM379.2 577.4h1.8v2.1h-1.8z"/>
<path fill="#8d8985" d="M374.4 555.5h1.8v2.1h-1.8zM374.4 561h1.8v2.1h-1.8zM374.4 563.7h1.8v2.1h-1.8zM379.2 569.2h1.8v2.1h-1.8zM374.4 571.9h1.8v2.1h-1.8zM374.4 577.4h1.8v2.1h-1.8z"/>
<path fill="#77736f" d="M376.8 555.5h1.8v2.1h-1.8zM376.8 558.2h1.8v2.1h-1.8zM376.8 561h1.8v2.1h-1.8zM379.2 563.7h1.8v2.1h-1.8zM374.4 566.4h1.8v2.1h-1.8zM376.8 571.9h1.8v2.1h-1.8zM379.2 574.6h1.8v2.1h-1.8z"/>
<rect x="365.6" y="565.4" width="6.6" height="14.4" fill="#6b6865" opacity=".55"/>
<path fill="#9c9894" d="M365.9 565.7h1.6v1.8h-1.6zM368.1 565.7h1.6v1.8h-1.6zM365.9 575.3h1.6v1.8h-1.6zM370.4 577.7h1.6v1.8h-1.6z"/>
<path fill="#77736f" d="M370.4 565.7h1.6v1.8h-1.6zM368.1 568.1h1.6v1.8h-1.6zM370.4 575.3h1.6v1.8h-1.6zM368.1 577.7h1.6v1.8h-1.6z"/>
<path fill="#6c6a68" d="M365.9 568.1h1.6v1.8h-1.6zM370.4 568.1h1.6v1.8h-1.6z"/>
<path fill="#8d8985" d="M368.1 570.5h1.6v1.8h-1.6zM368.1 572.9h1.6v1.8h-1.6zM365.9 577.7h1.6v1.8h-1.6z"/>
<path fill="#8a6f63" d="M365.9 572.9h1.6v1.8h-1.6zM370.4 572.9h1.6v1.8h-1.6z"/>
<rect x="365.6" y="581.9" width="6.6" height="7.7" fill="#6b6865" opacity=".55"/>
<path fill="#8d8985" d="M365.9 582.2h1.6v2h-1.6zM365.9 584.8h1.6v2h-1.6z"/>
<path fill="#9c9894" d="M368.1 584.8h1.6v2h-1.6z"/>
<path fill="#8a6f63" d="M370.4 584.8h1.6v2h-1.6zM370.4 587.4h1.6v2h-1.6z"/>
<path fill="#77736f" d="M365.9 587.4h1.6v2h-1.6z"/>
<path fill="#6c6a68" d="M368.1 587.4h1.6v2h-1.6z"/>
<rect x="374.1" y="582.5" width="7.2" height="10.8" fill="#6b6865" opacity=".55"/>
<path fill="#8d8985" d="M374.4 582.8h1.8v2.1h-1.8zM376.8 585.5h1.8v2.1h-1.8z"/>
<path fill="#6c6a68" d="M379.2 582.8h1.8v2.1h-1.8z"/>
<path fill="#77736f" d="M374.4 585.5h1.8v2.1h-1.8zM374.4 588.2h1.8v2.1h-1.8z"/>
<path fill="#9c9894" d="M374.4 590.9h1.8v2.1h-1.8z"/>
<rect x="340.1" y="559.1" width="17" height="13" fill="#3f3f3f" stroke="#7c7c7c" stroke-width="1.2"/>
<rect x="100.4" y="674.3" width="45.7" height="21.3" fill="#3f3f3f" stroke="#7c7c7c" stroke-width="1.2"/>
<rect x="115.1" y="669.1" width="5.7" height="4.3" fill="#6d6a66"/>
<rect x="131.7" y="669.1" width="6.1" height="4.3" fill="#6d6a66"/>
<rect x="207.1" y="657.4" width="11.5" height="26.9" fill="#8a8784"/>
<rect x="208.1" y="658.4" width="9.5" height="4" fill="#a9a6a2"/>
<rect x="208.6" y="662.4" width="8.5" height="16.9" fill="#7b574a"/>
<rect x="208.1" y="679.4" width="9.5" height="4" fill="#6f9374"/>
<rect x="225.2" y="657.4" width="12.4" height="26.9" fill="#8a8784"/>
<rect x="226.2" y="658.4" width="10.4" height="4" fill="#a9a6a2"/>
<rect x="226.7" y="662.4" width="9.4" height="16.9" fill="#7b574a"/>
<rect x="226.2" y="679.4" width="10.4" height="4" fill="#6f9374"/>
<rect x="243.5" y="657.4" width="12" height="26.9" fill="#8a8784"/>
<rect x="244.5" y="658.4" width="10" height="4" fill="#a9a6a2"/>
<rect x="245" y="662.4" width="9" height="16.9" fill="#7b574a"/>
<rect x="244.5" y="679.4" width="10" height="4" fill="#6f9374"/>
<rect x="262.4" y="657.4" width="11.3" height="26.9" fill="#8a8784"/>
<rect x="263.4" y="658.4" width="9.3" height="4" fill="#a9a6a2"/>
<rect x="263.9" y="662.4" width="8.3" height="16.9" fill="#7b574a"/>
<rect x="263.4" y="679.4" width="9.3" height="4" fill="#6f9374"/>
<rect x="325.6" y="683.6" width="6.5" height="15.6" fill="#8a8784"/>
<rect x="326.6" y="684.6" width="4.5" height="2.1" fill="#9fae9f"/>
<rect x="327.1" y="686.8" width="3.5" height="9.4" fill="#d9d9cf"/>
<rect x="326.6" y="696.1" width="4.5" height="2.1" fill="#9fae9f"/>
<rect x="200.4" y="715.9" width="9.4" height="7.1" fill="#2c2a27" stroke="#8d8985" stroke-width="1"/>
<rect x="350.7" y="672.4" width="1.9" height="1.9" fill="#bb8e1e"/>
<rect x="358" y="670.7" width="1.9" height="1.9" fill="#bb8e1e"/>
<rect x="362.9" y="674.6" width="1.9" height="1.9" fill="#bb8e1e"/>
<rect x="362.9" y="680.4" width="1.9" height="1.9" fill="#bb8e1e"/>
<rect x="366.5" y="689.3" width="1.9" height="1.9" fill="#bb8e1e"/>
<rect x="378.7" y="672.8" width="1.9" height="1.9" fill="#bb8e1e"/>
<rect x="379" y="694.7" width="1.9" height="1.9" fill="#bb8e1e"/>
<rect x="354.9" y="675.9" width="6.6" height="8.1" fill="#6b6865" opacity=".55"/>
<path fill="#9c9894" d="M355.2 676.2h1.6v2.1h-1.6zM359.6 681.6h1.6v2.1h-1.6z"/>
<path fill="#77736f" d="M355.2 678.9h1.6v2.1h-1.6z"/>
<path fill="#8a6f63" d="M357.4 678.9h1.6v2.1h-1.6z"/>
<path fill="#8d8985" d="M355.2 681.6h1.6v2.1h-1.6zM357.4 681.6h1.6v2.1h-1.6z"/>
<rect x="371.6" y="677.3" width="8.4" height="12.9" fill="#6b6865" opacity=".55"/>
<path fill="#8d8985" d="M371.9 677.6h1.5v2h-1.5zM376.1 677.6h1.5v2h-1.5zM374 680.2h1.5v2h-1.5zM376.1 682.8h1.5v2h-1.5zM378.2 685.4h1.5v2h-1.5zM376.1 688h1.5v2h-1.5z"/>
<path fill="#9c9894" d="M374 677.6h1.5v2h-1.5zM378.2 682.8h1.5v2h-1.5zM374 685.4h1.5v2h-1.5z"/>
<path fill="#6c6a68" d="M378.2 677.6h1.5v2h-1.5zM376.1 680.2h1.5v2h-1.5zM378.2 680.2h1.5v2h-1.5zM371.9 682.8h1.5v2h-1.5zM378.2 688h1.5v2h-1.5z"/>
<path fill="#8a6f63" d="M371.9 680.2h1.5v2h-1.5zM374 682.8h1.5v2h-1.5z"/>
<path fill="#77736f" d="M371.9 685.4h1.5v2h-1.5zM371.9 688h1.5v2h-1.5z"/>
<rect x="499.7" y="386.2" width="14.4" height="7.2" fill="#8a8784"/>
<rect x="500.7" y="387.2" width="2" height="5.2" fill="#6f9374"/>
<rect x="503.2" y="387.7" width="7.9" height="4.2" fill="#8a6f63"/>
<rect x="520.4" y="389.9" width="11" height="8.3" fill="#1d1b1c" stroke="#858585" stroke-width="1.2"/>
<rect x="517.6" y="399.1" width="6.3" height="3.6" fill="#77736f"/>
<rect x="537.4" y="391.9" width="23.3" height="6.8" fill="#8a8784"/>
<rect x="538.4" y="392.9" width="3.7" height="4.8" fill="#b5b5b5"/>
<rect x="542" y="393.4" width="14" height="3.8" fill="#5c5c5c"/>
<rect x="556" y="392.9" width="3.7" height="4.8" fill="#b5b5b5"/>
<rect x="563" y="397.4" width="12.1" height="10.1" fill="#1d1b1c" stroke="#858585" stroke-width="1.2"/>
<rect x="559.8" y="408.6" width="18" height="4.5" fill="#6b6865" opacity=".55"/>
<path fill="#6c6a68" d="M560.1 408.9h2v1.6h-2zM575.5 408.9h2v1.6h-2z"/>
<path fill="#9c9894" d="M562.7 408.9h2v1.6h-2zM565.2 408.9h2v1.6h-2zM575.5 411.2h2v1.6h-2z"/>
<path fill="#77736f" d="M567.8 408.9h2v1.6h-2zM560.1 411.2h2v1.6h-2zM562.7 411.2h2v1.6h-2zM565.2 411.2h2v1.6h-2z"/>
<path fill="#8a6f63" d="M572.9 408.9h2v1.6h-2z"/>
<path fill="#8d8985" d="M567.8 411.2h2v1.6h-2zM570.4 411.2h2v1.6h-2zM572.9 411.2h2v1.6h-2z"/>
<rect x="517.6" y="405.6" width="5.4" height="9.3" fill="#8a7468"/>
<rect x="561.6" y="386.5" width="1.9" height="1.9" fill="#bb8e1e"/>
<rect x="586.3" y="384.9" width="1.9" height="1.9" fill="#bb8e1e"/>
<rect x="631.2" y="398.1" width="1.9" height="1.9" fill="#bb8e1e"/>
<rect x="659.8" y="409.6" width="1.9" height="1.9" fill="#bb8e1e"/>
<rect x="558" y="399.9" width="1.9" height="1.9" fill="#bb8e1e"/>
<rect x="549.9" y="404.6" width="1.9" height="1.9" fill="#bb8e1e"/>
<rect x="555.3" y="405" width="1.9" height="1.9" fill="#bb8e1e"/>
<rect x="543.6" y="405.9" width="1.9" height="1.9" fill="#bb8e1e"/>
<rect x="547.7" y="408.9" width="1.9" height="1.9" fill="#bb8e1e"/>
<rect x="539.6" y="409.5" width="1.9" height="1.9" fill="#bb8e1e"/>
<rect x="534.6" y="409.5" width="1.9" height="1.9" fill="#bb8e1e"/>
<rect x="529.6" y="407.7" width="1.9" height="1.9" fill="#bb8e1e"/>
<rect x="524.4" y="407.7" width="1.9" height="1.9" fill="#bb8e1e"/>
<rect x="521.5" y="416.8" width="1.9" height="1.9" fill="#bb8e1e"/>
<rect x="526.5" y="417.2" width="1.9" height="1.9" fill="#bb8e1e"/>
<rect x="531.4" y="417.2" width="1.9" height="1.9" fill="#bb8e1e"/>
<rect x="521.5" y="422" width="1.9" height="1.9" fill="#bb8e1e"/>
<rect x="575" y="421.5" width="1.9" height="1.9" fill="#bb8e1e"/>
<rect x="579.9" y="421.5" width="1.9" height="1.9" fill="#bb8e1e"/>
<rect x="549" y="445.9" width="1.9" height="1.9" fill="#bb8e1e"/>
<rect x="556.2" y="445.9" width="1.9" height="1.9" fill="#bb8e1e"/>
<rect x="612.7" y="427.4" width="1.9" height="1.9" fill="#bb8e1e"/>
<rect x="612.7" y="441.8" width="1.9" height="1.9" fill="#bb8e1e"/>
<rect x="612.7" y="455.6" width="1.9" height="1.9" fill="#bb8e1e"/>
<rect x="612.7" y="465.1" width="1.9" height="1.9" fill="#bb8e1e"/>
<rect x="612.7" y="473.6" width="1.9" height="1.9" fill="#bb8e1e"/>
<rect x="596.6" y="474.1" width="1.9" height="1.9" fill="#bb8e1e"/>
<rect x="596.6" y="478.9" width="1.9" height="1.9" fill="#bb8e1e"/>
<rect x="558.9" y="483.1" width="1.9" height="1.9" fill="#bb8e1e"/>
<rect x="690.3" y="507.7" width="1.9" height="1.9" fill="#bb8e1e"/>
<rect x="515.4" y="507" width="1.9" height="1.9" fill="#bb8e1e"/>
<rect x="521.2" y="507" width="1.9" height="1.9" fill="#bb8e1e"/>
<rect x="581.4" y="392.4" width="22.4" height="10.8" fill="#6b6865" opacity=".55"/>
<path fill="#9c9894" d="M584.9 392.7h2.6v3h-2.6zM597.7 392.7h2.6v3h-2.6zM588.1 396.3h2.6v3h-2.6zM600.9 396.3h2.6v3h-2.6z"/>
<path fill="#8a6f63" d="M591.3 392.7h2.6v3h-2.6zM584.9 396.3h2.6v3h-2.6zM581.7 399.9h2.6v3h-2.6z"/>
<path fill="#8d8985" d="M591.3 396.3h2.6v3h-2.6zM594.5 396.3h2.6v3h-2.6zM597.7 399.9h2.6v3h-2.6zM600.9 399.9h2.6v3h-2.6z"/>
<path fill="#77736f" d="M597.7 396.3h2.6v3h-2.6zM594.5 399.9h2.6v3h-2.6z"/>
<rect x="592.3" y="386.7" width="9.2" height="6.2" fill="#1d1b1c" stroke="#858585" stroke-width="1.2"/>
<rect x="605.2" y="389.9" width="9.8" height="8" fill="#1d1b1c" stroke="#858585" stroke-width="1.2"/>
<rect x="616.9" y="393.3" width="4.3" height="6.3" fill="#77736f"/>
<rect x="589.9" y="399.2" width="7.1" height="5.3" fill="#1d1b1c" stroke="#858585" stroke-width="1.2"/>
<rect x="579.6" y="402.7" width="9" height="5.9" fill="#77736f"/>
<rect x="593.5" y="406.1" width="8" height="6.2" fill="#1d1b1c" stroke="#858585" stroke-width="1.2"/>
<rect x="605.2" y="403.2" width="10.1" height="7.6" fill="#1d1b1c" stroke="#858585" stroke-width="1.2"/>
<rect x="616.9" y="405.6" width="4.3" height="6.6" fill="#77736f"/>
<rect x="516.7" y="425.3" width="18" height="22.3" fill="#8a8784"/>
<rect x="517.7" y="426.3" width="7" height="3.6" fill="#8a6f63"/>
<rect x="526.7" y="426.3" width="7" height="3.6" fill="#8a6f63"/>
<rect x="517.7" y="431.9" width="7" height="3.6" fill="#8a6f63"/>
<rect x="526.7" y="431.9" width="7" height="3.6" fill="#8a6f63"/>
<rect x="517.7" y="437.4" width="7" height="3.6" fill="#8a6f63"/>
<rect x="526.7" y="437.4" width="7" height="3.6" fill="#8a6f63"/>
<rect x="517.7" y="443" width="7" height="3.6" fill="#8a6f63"/>
<rect x="526.7" y="443" width="7" height="3.6" fill="#8a6f63"/>
<rect x="549.4" y="423.9" width="9.5" height="20.7" fill="#8a8784"/>
<rect x="550.4" y="424.9" width="7.5" height="3.1" fill="#b5b5b5"/>
<rect x="550.9" y="428" width="6.5" height="12.4" fill="#5c5c5c"/>
<rect x="550.4" y="440.4" width="7.5" height="3.1" fill="#b5b5b5"/>
<rect x="562.5" y="425.7" width="7.2" height="21.5" fill="#6b6865" opacity=".55"/>
<path fill="#9c9894" d="M562.8 426h1.8v2.1h-1.8zM565.2 431.4h1.8v2.1h-1.8zM565.2 434h1.8v2.1h-1.8zM567.6 434h1.8v2.1h-1.8zM565.2 442.1h1.8v2.1h-1.8zM567.6 444.8h1.8v2.1h-1.8z"/>
<path fill="#8a6f63" d="M565.2 426h1.8v2.1h-1.8zM562.8 428.7h1.8v2.1h-1.8zM565.2 436.7h1.8v2.1h-1.8zM567.6 439.4h1.8v2.1h-1.8zM567.6 442.1h1.8v2.1h-1.8zM562.8 444.8h1.8v2.1h-1.8z"/>
<path fill="#8d8985" d="M565.2 428.7h1.8v2.1h-1.8zM567.6 431.4h1.8v2.1h-1.8z"/>
<path fill="#77736f" d="M562.8 434h1.8v2.1h-1.8zM562.8 436.7h1.8v2.1h-1.8zM562.8 439.4h1.8v2.1h-1.8zM565.2 444.8h1.8v2.1h-1.8z"/>
<path fill="#6c6a68" d="M565.2 439.4h1.8v2.1h-1.8z"/>
<rect x="580.5" y="426.6" width="17.1" height="3.6" fill="#6b6865" opacity=".55"/>
<path fill="#6c6a68" d="M583.2 426.9h1.8v3h-1.8z"/>
<path fill="#8a6f63" d="M585.6 426.9h1.8v3h-1.8zM588.1 426.9h1.8v3h-1.8zM590.5 426.9h1.8v3h-1.8z"/>
<path fill="#9c9894" d="M592.9 426.9h1.8v3h-1.8z"/>
<path fill="#8d8985" d="M595.4 426.9h1.8v3h-1.8z"/>
<rect x="603.8" y="427.5" width="6.6" height="35" fill="#6b6865" opacity=".55"/>
<path fill="#9c9894" d="M604.1 427.8h1.6v2.1h-1.6zM608.5 427.8h1.6v2.1h-1.6zM604.1 441.2h1.6v2.1h-1.6zM606.3 441.2h1.6v2.1h-1.6zM604.1 443.9h1.6v2.1h-1.6zM608.5 446.6h1.6v2.1h-1.6zM604.1 449.3h1.6v2.1h-1.6zM608.5 449.3h1.6v2.1h-1.6zM604.1 452h1.6v2.1h-1.6z"/>
<path fill="#77736f" d="M606.3 427.8h1.6v2.1h-1.6zM604.1 430.5h1.6v2.1h-1.6zM608.5 433.1h1.6v2.1h-1.6zM606.3 443.9h1.6v2.1h-1.6zM606.3 446.6h1.6v2.1h-1.6zM608.5 454.7h1.6v2.1h-1.6zM604.1 457.4h1.6v2.1h-1.6zM608.5 460.1h1.6v2.1h-1.6z"/>
<path fill="#8a6f63" d="M604.1 433.1h1.6v2.1h-1.6zM606.3 433.1h1.6v2.1h-1.6zM604.1 435.8h1.6v2.1h-1.6zM608.5 441.2h1.6v2.1h-1.6zM604.1 446.6h1.6v2.1h-1.6zM606.3 452h1.6v2.1h-1.6zM608.5 457.4h1.6v2.1h-1.6z"/>
<path fill="#8d8985" d="M608.5 435.8h1.6v2.1h-1.6zM604.1 438.5h1.6v2.1h-1.6zM608.5 438.5h1.6v2.1h-1.6zM608.5 443.9h1.6v2.1h-1.6zM604.1 454.7h1.6v2.1h-1.6zM606.3 454.7h1.6v2.1h-1.6zM604.1 460.1h1.6v2.1h-1.6z"/>
<path fill="#6c6a68" d="M606.3 449.3h1.6v2.1h-1.6zM608.5 452h1.6v2.1h-1.6zM606.3 457.4h1.6v2.1h-1.6zM606.3 460.1h1.6v2.1h-1.6z"/>
<rect x="566.1" y="462.5" width="33.2" height="7.2" fill="#6b6865" opacity=".55"/>
<path fill="#77736f" d="M569 462.8h2v1.8h-2zM574.1 462.8h2v1.8h-2zM569 465.2h2v1.8h-2zM571.5 465.2h2v1.8h-2zM594.5 465.2h2v1.8h-2zM597.1 465.2h2v1.8h-2zM569 467.6h2v1.8h-2zM574.1 467.6h2v1.8h-2zM594.5 467.6h2v1.8h-2z"/>
<path fill="#9c9894" d="M571.5 462.8h2v1.8h-2zM581.7 462.8h2v1.8h-2zM581.7 465.2h2v1.8h-2zM579.2 467.6h2v1.8h-2zM584.3 467.6h2v1.8h-2zM592 467.6h2v1.8h-2z"/>
<path fill="#8d8985" d="M576.6 462.8h2v1.8h-2zM579.2 462.8h2v1.8h-2zM592 462.8h2v1.8h-2zM574.1 465.2h2v1.8h-2zM584.3 465.2h2v1.8h-2zM586.8 465.2h2v1.8h-2zM589.4 465.2h2v1.8h-2zM592 465.2h2v1.8h-2zM589.4 467.6h2v1.8h-2zM597.1 467.6h2v1.8h-2z"/>
<path fill="#8a7468" d="M586.8 462.8h2v1.8h-2zM589.4 462.8h2v1.8h-2zM597.1 462.8h2v1.8h-2zM566.4 465.2h2v1.8h-2zM576.6 465.2h2v1.8h-2zM579.2 465.2h2v1.8h-2zM566.4 467.6h2v1.8h-2zM571.5 467.6h2v1.8h-2zM576.6 467.6h2v1.8h-2zM581.7 467.6h2v1.8h-2zM586.8 467.6h2v1.8h-2z"/>
<rect x="569.7" y="429.3" width="33.2" height="33.6" fill="#77736f"/>
<rect x="571.6" y="431.2" width="29.3" height="29.7" fill="#1d1b1c" stroke="#9a9a9a" stroke-width="1.2"/>
<rect x="547.2" y="449" width="9.9" height="21.5" fill="#8a8784"/>
<rect x="548.7" y="450" width="6.9" height="3.4" fill="#8a6f63"/>
<rect x="548.7" y="455.4" width="6.9" height="3.4" fill="#8a6f63"/>
<rect x="548.7" y="460.8" width="6.9" height="3.4" fill="#8a6f63"/>
<rect x="548.7" y="466.2" width="6.9" height="3.4" fill="#8a6f63"/>
<rect x="559.5" y="449" width="6.6" height="12.6" fill="#8a8784"/>
<rect x="560.5" y="450" width="4.6" height="1.5" fill="#b5b5b5"/>
<rect x="561" y="451.5" width="3.6" height="7.5" fill="#5c5c5c"/>
<rect x="560.5" y="459.1" width="4.6" height="1.5" fill="#b5b5b5"/>
<rect x="558.9" y="462.5" width="5.4" height="9" fill="#8a7468"/>
<rect x="557.1" y="472.4" width="7.2" height="6.3" fill="#77736f"/>
<rect x="612.8" y="425.7" width="16.2" height="8.1" fill="#6b6865" opacity=".55"/>
<path fill="#6c6a68" d="M613.1 426h2.1v2.1h-2.1zM613.1 428.7h2.1v2.1h-2.1zM621.2 428.7h2.1v2.1h-2.1zM623.9 428.7h2.1v2.1h-2.1zM626.6 428.7h2.1v2.1h-2.1zM615.8 431.4h2.1v2.1h-2.1z"/>
<path fill="#9c9894" d="M615.8 426h2.1v2.1h-2.1zM626.6 426h2.1v2.1h-2.1zM613.1 431.4h2.1v2.1h-2.1zM626.6 431.4h2.1v2.1h-2.1z"/>
<path fill="#8a6f63" d="M618.5 426h2.1v2.1h-2.1zM621.2 426h2.1v2.1h-2.1zM623.9 426h2.1v2.1h-2.1zM615.8 428.7h2.1v2.1h-2.1z"/>
<rect x="615.5" y="435.5" width="14" height="6.3" fill="#8a8784"/>
<rect x="616.5" y="436.5" width="1.8" height="4.3" fill="#b5b5b5"/>
<rect x="618.3" y="437" width="8.4" height="3.3" fill="#5c5c5c"/>
<rect x="626.7" y="436.5" width="1.8" height="4.3" fill="#b5b5b5"/>
<rect x="615.5" y="444" width="13.5" height="10.8" fill="#2a2826" stroke="#7c7c7c" stroke-width="1"/>
<rect x="616.5" y="445" width="3" height="3" fill="#7b574a"/>
<rect x="624.9" y="445" width="3" height="3" fill="#7b574a"/>
<rect x="616.5" y="450.8" width="3" height="3" fill="#7b574a"/>
<rect x="624.4" y="450.3" width="3.5" height="3.5" fill="#e0202a"/>
<rect x="620" y="446.5" width="4.5" height="5.8" fill="#3d3d3d"/>
<rect x="615.5" y="458" width="14" height="6.3" fill="#8a8784"/>
<rect x="616.5" y="459" width="1.8" height="4.3" fill="#b5b5b5"/>
<rect x="618.3" y="459.5" width="8.4" height="3.3" fill="#5c5c5c"/>
<rect x="626.7" y="459" width="1.8" height="4.3" fill="#b5b5b5"/>
<rect x="616.4" y="467" width="13.5" height="10.8" fill="#6b6865" opacity=".55"/>
<path fill="#9c9894" d="M616.7 467.3h2.1v2.1h-2.1zM619.4 467.3h2.1v2.1h-2.1zM622.1 472.7h2.1v2.1h-2.1zM624.8 472.7h2.1v2.1h-2.1zM619.4 475.3h2.1v2.1h-2.1zM627.5 475.3h2.1v2.1h-2.1z"/>
<path fill="#8a6f63" d="M622.1 467.3h2.1v2.1h-2.1zM619.4 470h2.1v2.1h-2.1zM624.8 470h2.1v2.1h-2.1zM616.7 472.7h2.1v2.1h-2.1zM624.8 475.3h2.1v2.1h-2.1z"/>
<path fill="#77736f" d="M624.8 467.3h2.1v2.1h-2.1zM627.5 467.3h2.1v2.1h-2.1z"/>
<path fill="#6c6a68" d="M622.1 470h2.1v2.1h-2.1zM616.7 475.3h2.1v2.1h-2.1z"/>
<path fill="#8d8985" d="M627.5 470h2.1v2.1h-2.1zM619.4 472.7h2.1v2.1h-2.1zM622.1 475.3h2.1v2.1h-2.1z"/>
<rect x="606.5" y="477.4" width="12.6" height="6.6" fill="#6b6865" opacity=".55"/>
<path fill="#8a6f63" d="M606.8 477.7h1.9v1.6h-1.9zM614.3 477.7h1.9v1.6h-1.9z"/>
<path fill="#77736f" d="M609.3 477.7h1.9v1.6h-1.9zM609.3 479.9h1.9v1.6h-1.9z"/>
<path fill="#6c6a68" d="M611.8 477.7h1.9v1.6h-1.9zM616.9 477.7h1.9v1.6h-1.9zM614.3 479.9h1.9v1.6h-1.9z"/>
<path fill="#9c9894" d="M606.8 479.9h1.9v1.6h-1.9z"/>
<path fill="#8d8985" d="M606.8 482.1h1.9v1.6h-1.9zM611.8 482.1h1.9v1.6h-1.9zM614.3 482.1h1.9v1.6h-1.9zM616.9 482.1h1.9v1.6h-1.9z"/>
<rect x="621.8" y="477.7" width="4.5" height="7.2" fill="#77736f"/>
<rect x="566.1" y="472" width="7.2" height="12.9" fill="#8a8784"/>
<rect x="567.1" y="473" width="5.2" height="1.6" fill="#b5b5b5"/>
<rect x="567.6" y="474.6" width="4.2" height="7.8" fill="#5c5c5c"/>
<rect x="567.1" y="482.3" width="5.2" height="1.6" fill="#b5b5b5"/>
<rect x="576.3" y="471.5" width="6.8" height="13.5" fill="#8a8784"/>
<rect x="577.3" y="472.5" width="4.8" height="1.7" fill="#b5b5b5"/>
<rect x="577.8" y="474.1" width="3.8" height="8.1" fill="#5c5c5c"/>
<rect x="577.3" y="482.2" width="4.8" height="1.7" fill="#b5b5b5"/>
<rect x="586.7" y="471.5" width="7.2" height="13.5" fill="#8a8784"/>
<rect x="587.7" y="472.5" width="5.2" height="1.7" fill="#b5b5b5"/>
<rect x="588.2" y="474.1" width="4.2" height="8.1" fill="#5c5c5c"/>
<rect x="587.7" y="482.2" width="5.2" height="1.7" fill="#b5b5b5"/>
<rect x="561.6" y="484.9" width="39.1" height="4.5" fill="#6b6865" opacity=".55"/>
<path fill="#9c9894" d="M561.9 485.2h2v1.6h-2zM582.8 485.2h2v1.6h-2zM588 485.2h2v1.6h-2zM590.6 485.2h2v1.6h-2zM593.2 485.2h2v1.6h-2zM595.8 485.2h2v1.6h-2zM561.9 487.5h2v1.6h-2zM588 487.5h2v1.6h-2zM598.4 487.5h2v1.6h-2z"/>
<path fill="#8d8985" d="M564.5 485.2h2v1.6h-2zM569.7 485.2h2v1.6h-2zM572.3 485.2h2v1.6h-2zM575 485.2h2v1.6h-2zM577.6 485.2h2v1.6h-2zM580.2 485.2h2v1.6h-2zM564.5 487.5h2v1.6h-2zM567.1 487.5h2v1.6h-2zM577.6 487.5h2v1.6h-2zM580.2 487.5h2v1.6h-2zM585.4 487.5h2v1.6h-2zM590.6 487.5h2v1.6h-2zM593.2 487.5h2v1.6h-2z"/>
<path fill="#8a7468" d="M567.1 485.2h2v1.6h-2zM585.4 485.2h2v1.6h-2zM598.4 485.2h2v1.6h-2zM572.3 487.5h2v1.6h-2zM582.8 487.5h2v1.6h-2zM595.8 487.5h2v1.6h-2z"/>
<rect x="600.8" y="467" width="4.8" height="14.4" fill="#8a7468"/>
<rect x="606.5" y="464.3" width="5" height="9" fill="#77736f"/>
<rect x="548.1" y="475.6" width="4.5" height="6.1" fill="#4a4845"/>
<rect x="645.1" y="421.7" width="25.1" height="15.1" fill="#2a2826" stroke="#7c7c7c" stroke-width="1.2"/>
<rect x="650.3" y="424.2" width="14.7" height="10.1" fill="#3d3d3d"/>
<rect x="646.1" y="422.7" width="4.2" height="4.2" fill="#e0202a"/>
<rect x="665" y="422.7" width="4.2" height="4.2" fill="#6f9374"/>
<rect x="646.1" y="431.6" width="4.2" height="4.2" fill="#7b574a"/>
<rect x="665" y="431.6" width="4.2" height="4.2" fill="#7b574a"/>
<rect x="646.1" y="427.4" width="4.2" height="3.7" fill="#6f9374"/>
<rect x="665" y="427.4" width="4.2" height="3.7" fill="#6f9374"/>
<rect x="673.3" y="421.7" width="25.7" height="15.1" fill="#2a2826" stroke="#7c7c7c" stroke-width="1.2"/>
<rect x="678.5" y="424.2" width="15.3" height="10.1" fill="#3d3d3d"/>
<rect x="674.3" y="422.7" width="4.2" height="4.2" fill="#e0202a"/>
<rect x="693.8" y="422.7" width="4.2" height="4.2" fill="#6f9374"/>
<rect x="674.3" y="431.6" width="4.2" height="4.2" fill="#7b574a"/>
<rect x="693.8" y="431.6" width="4.2" height="4.2" fill="#7b574a"/>
<rect x="674.3" y="427.4" width="4.2" height="3.7" fill="#6f9374"/>
<rect x="693.8" y="427.4" width="4.2" height="3.7" fill="#6f9374"/>
<rect x="678.8" y="455.8" width="5.3" height="7.4" fill="#2b2b2b" stroke="#858585" stroke-width="1.2"/>
<rect x="686" y="455.8" width="5.3" height="7.4" fill="#2b2b2b" stroke="#858585" stroke-width="1.2"/>
<rect x="693.6" y="455.3" width="9.9" height="4.1" fill="#8a7468"/>
<rect x="693.6" y="461.6" width="17.1" height="18" fill="#2a2826" stroke="#7c7c7c" stroke-width="1"/>
<rect x="694.6" y="462.6" width="4" height="4" fill="#7b574a"/>
<rect x="694.6" y="474.5" width="4" height="4" fill="#7b574a"/>
<rect x="705.6" y="474.5" width="4" height="4" fill="#7b574a"/>
<rect x="699.6" y="462.6" width="4" height="4" fill="#7b574a"/>
<rect x="699.6" y="474.5" width="4" height="4" fill="#7b574a"/>
<rect x="700.6" y="474.5" width="4" height="4" fill="#7b574a"/>
<rect x="705.6" y="462.6" width="4" height="4" fill="#e0202a"/>
<rect x="654.1" y="477.4" width="6.6" height="16.5" fill="#8a8784"/>
<rect x="655.1" y="478.4" width="4.6" height="2.3" fill="#9fae9f"/>
<rect x="655.6" y="480.7" width="3.6" height="9.9" fill="#d9d9cf"/>
<rect x="655.1" y="490.6" width="4.6" height="2.3" fill="#9fae9f"/>
<rect x="669.3" y="477.4" width="6.8" height="14.7" fill="#8a8784"/>
<rect x="670.3" y="478.4" width="4.8" height="1.9" fill="#b8b8b8"/>
<rect x="670.8" y="480.3" width="3.8" height="8.8" fill="#f2f2f2"/>
<rect x="670.3" y="489.2" width="4.8" height="1.9" fill="#b8b8b8"/>
<rect x="678.7" y="474.1" width="13.1" height="16.2" fill="#7a746f"/>
<rect x="679.7" y="475.1" width="11.1" height="14.2" fill="#8a6250"/>
<rect x="682.9" y="475.1" width="4.7" height="14.2" fill="#1c1a19"/>
<rect x="679.7" y="479.3" width="11.1" height="5.8" fill="#1c1a19"/>
<rect x="714.2" y="447.2" width="7.2" height="10.8" fill="#8a8784"/>
<rect x="715.2" y="448.2" width="5.2" height="1.2" fill="#a9a6a2"/>
<rect x="715.7" y="449.4" width="4.2" height="6.5" fill="#7b574a"/>
<rect x="715.2" y="455.8" width="5.2" height="1.2" fill="#6f9374"/>
<rect x="713.3" y="459.8" width="8.1" height="14.4" fill="#8a8784"/>
<rect x="714.3" y="460.8" width="6.1" height="1.9" fill="#a9a6a2"/>
<rect x="714.8" y="462.7" width="5.1" height="8.6" fill="#7b574a"/>
<rect x="714.3" y="471.3" width="6.1" height="1.9" fill="#6f9374"/>
<rect x="714.2" y="486.7" width="7.2" height="9" fill="#8a8784"/>
<rect x="715.2" y="487.7" width="5.2" height="0.8" fill="#a9a6a2"/>
<rect x="715.7" y="488.5" width="4.2" height="5.4" fill="#7b574a"/>
<rect x="715.2" y="493.9" width="5.2" height="0.8" fill="#6f9374"/>
<rect x="528.4" y="504.7" width="12" height="7.2" fill="#6b6865" opacity=".55"/>
<path fill="#6c6a68" d="M528.7 505h1.8v1.8h-1.8z"/>
<path fill="#77736f" d="M531.1 505h1.8v1.8h-1.8zM535.9 505h1.8v1.8h-1.8zM533.5 509.8h1.8v1.8h-1.8z"/>
<path fill="#8d8985" d="M533.5 505h1.8v1.8h-1.8zM531.1 507.4h1.8v1.8h-1.8z"/>
<path fill="#8a6f63" d="M538.3 505h1.8v1.8h-1.8zM538.3 507.4h1.8v1.8h-1.8zM531.1 509.8h1.8v1.8h-1.8z"/>
<path fill="#9c9894" d="M528.7 507.4h1.8v1.8h-1.8zM535.9 507.4h1.8v1.8h-1.8z"/>
<rect x="578.7" y="504.7" width="11.3" height="7.2" fill="#6b6865" opacity=".55"/>
<path fill="#9c9894" d="M581.2 505h1.7v1.8h-1.7zM588 505h1.7v1.8h-1.7zM581.2 509.8h1.7v1.8h-1.7z"/>
<path fill="#77736f" d="M585.8 505h1.7v1.8h-1.7zM579 507.4h1.7v1.8h-1.7zM588 507.4h1.7v1.8h-1.7z"/>
<path fill="#8d8985" d="M583.5 507.4h1.7v1.8h-1.7z"/>
<path fill="#8a6f63" d="M585.8 507.4h1.7v1.8h-1.7zM585.8 509.8h1.7v1.8h-1.7z"/>
<path fill="#6c6a68" d="M588 509.8h1.7v1.8h-1.7z"/>
<rect x="624.5" y="504.3" width="7.5" height="6.1" fill="#6d6a66"/>
<rect x="645.6" y="506.1" width="7.5" height="8.4" fill="#6b6865" opacity=".55"/>
<path fill="#77736f" d="M645.9 506.4h1.9v2.2h-1.9zM651 509.2h1.9v2.2h-1.9z"/>
<path fill="#8d8985" d="M651 506.4h1.9v2.2h-1.9zM645.9 509.2h1.9v2.2h-1.9z"/>
<path fill="#9c9894" d="M648.5 509.2h1.9v2.2h-1.9zM648.5 512h1.9v2.2h-1.9zM651 512h1.9v2.2h-1.9z"/>
<rect x="655.1" y="507.9" width="7.4" height="8.9" fill="#2b2b2b" stroke="#858585" stroke-width="1.2"/>
<rect x="664.9" y="506.1" width="6.6" height="8.4" fill="#6b6865" opacity=".55"/>
<path fill="#6c6a68" d="M665.2 506.4h1.6v2.2h-1.6z"/>
<path fill="#8d8985" d="M667.4 506.4h1.6v2.2h-1.6zM665.2 512h1.6v2.2h-1.6zM667.4 512h1.6v2.2h-1.6z"/>
<path fill="#77736f" d="M669.6 506.4h1.6v2.2h-1.6z"/>
<path fill="#9c9894" d="M665.2 509.2h1.6v2.2h-1.6zM667.4 509.2h1.6v2.2h-1.6z"/>
<path fill="#8a6f63" d="M669.6 509.2h1.6v2.2h-1.6z"/>
<rect x="650.5" y="522.6" width="3.6" height="6.3" fill="#6d6a66"/>
<rect x="704.4" y="515.4" width="7.2" height="4.5" fill="#6d6a66"/>
<rect x="501.5" y="543.3" width="6.3" height="4.5" fill="#77736f"/>
<rect x="513.5" y="543.3" width="6.8" height="4.5" fill="#77736f"/>
<rect x="439.2" y="549.2" width="153.2" height="131.5" fill="#211e20" stroke="#8e8e8e" stroke-width="1.4"/>
<text x="514" y="628.9" font-size="40" font-weight="700" fill="#a99adb" text-anchor="middle" textLength="117" lengthAdjust="spacingAndGlyphs">U0600</text>
<rect x="501.5" y="543.6" width="6.3" height="4.5" fill="#77736f"/>
<rect x="513.5" y="543.6" width="6.8" height="4.5" fill="#77736f"/>
<rect x="593" y="612.7" width="4.5" height="11.7" fill="#857a72"/>
<rect x="593" y="639.7" width="4.5" height="11.7" fill="#857a72"/>
<rect x="476.6" y="683.6" width="1.9" height="1.9" fill="#bb8e1e"/>
<rect x="481.7" y="683.6" width="1.9" height="1.9" fill="#bb8e1e"/>
<rect x="650.1" y="554.3" width="1.9" height="1.9" fill="#bb8e1e"/>
<rect x="650.1" y="559.2" width="1.9" height="1.9" fill="#bb8e1e"/>
<rect x="653.5" y="647.3" width="1.9" height="1.9" fill="#bb8e1e"/>
<rect x="652.6" y="653.4" width="1.9" height="1.9" fill="#bb8e1e"/>
<rect x="650.4" y="668.7" width="1.9" height="1.9" fill="#bb8e1e"/>
<rect x="464.3" y="694.8" width="25.1" height="6.5" fill="#6b6865" opacity=".55"/>
<path fill="#6c6a68" d="M464.6 695.1h1.9v1.6h-1.9zM477.2 695.1h1.9v1.6h-1.9zM482.2 695.1h1.9v1.6h-1.9zM469.6 697.2h1.9v1.6h-1.9zM487.2 697.2h1.9v1.6h-1.9zM464.6 699.4h1.9v1.6h-1.9zM479.7 699.4h1.9v1.6h-1.9zM487.2 699.4h1.9v1.6h-1.9z"/>
<path fill="#77736f" d="M467.1 695.1h1.9v1.6h-1.9zM487.2 695.1h1.9v1.6h-1.9zM467.1 699.4h1.9v1.6h-1.9zM482.2 699.4h1.9v1.6h-1.9z"/>
<path fill="#9c9894" d="M472.1 695.1h1.9v1.6h-1.9zM474.6 695.1h1.9v1.6h-1.9zM472.1 697.2h1.9v1.6h-1.9zM482.2 697.2h1.9v1.6h-1.9zM484.7 697.2h1.9v1.6h-1.9zM472.1 699.4h1.9v1.6h-1.9zM474.6 699.4h1.9v1.6h-1.9z"/>
<path fill="#8d8985" d="M479.7 695.1h1.9v1.6h-1.9zM464.6 697.2h1.9v1.6h-1.9zM467.1 697.2h1.9v1.6h-1.9zM477.2 697.2h1.9v1.6h-1.9zM469.6 699.4h1.9v1.6h-1.9z"/>
<path fill="#8a6f63" d="M484.7 695.1h1.9v1.6h-1.9zM474.6 697.2h1.9v1.6h-1.9zM477.2 699.4h1.9v1.6h-1.9z"/>
<rect x="497" y="690.5" width="14.7" height="6.1" fill="#6b6865" opacity=".55"/>
<path fill="#6c6a68" d="M497.3 690.8h1.9v1.4h-1.9zM502.2 690.8h1.9v1.4h-1.9zM507.1 690.8h1.9v1.4h-1.9z"/>
<path fill="#9c9894" d="M499.7 690.8h1.9v1.4h-1.9zM497.3 692.8h1.9v1.4h-1.9zM499.7 692.8h1.9v1.4h-1.9zM499.7 694.8h1.9v1.4h-1.9zM507.1 694.8h1.9v1.4h-1.9z"/>
<path fill="#77736f" d="M504.6 690.8h1.9v1.4h-1.9zM509.5 690.8h1.9v1.4h-1.9zM504.6 692.8h1.9v1.4h-1.9zM507.1 692.8h1.9v1.4h-1.9zM497.3 694.8h1.9v1.4h-1.9zM504.6 694.8h1.9v1.4h-1.9z"/>
<path fill="#8d8985" d="M502.2 692.8h1.9v1.4h-1.9z"/>
<path fill="#8a6f63" d="M509.5 692.8h1.9v1.4h-1.9zM502.2 694.8h1.9v1.4h-1.9zM509.5 694.8h1.9v1.4h-1.9z"/>
<rect x="513.5" y="690.5" width="7.2" height="6.1" fill="#6b6865" opacity=".55"/>
<path fill="#6c6a68" d="M513.8 690.8h1.8v1.4h-1.8zM518.6 690.8h1.8v1.4h-1.8zM516.2 694.8h1.8v1.4h-1.8zM518.6 694.8h1.8v1.4h-1.8z"/>
<path fill="#9c9894" d="M516.2 690.8h1.8v1.4h-1.8zM516.2 692.8h1.8v1.4h-1.8z"/>
<path fill="#8a6f63" d="M513.8 692.8h1.8v1.4h-1.8z"/>
<path fill="#8d8985" d="M518.6 692.8h1.8v1.4h-1.8zM513.8 694.8h1.8v1.4h-1.8z"/>
<rect x="662.2" y="690.5" width="8.6" height="7.2" fill="#6b6865" opacity=".55"/>
<path fill="#8d8985" d="M664.6 690.8h1.6v1.8h-1.6z"/>
<path fill="#77736f" d="M666.8 690.8h1.6v1.8h-1.6zM666.8 693.2h1.6v1.8h-1.6zM668.9 693.2h1.6v1.8h-1.6z"/>
<path fill="#9c9894" d="M668.9 690.8h1.6v1.8h-1.6zM666.8 695.6h1.6v1.8h-1.6z"/>
<path fill="#8a6f63" d="M662.5 693.2h1.6v1.8h-1.6z"/>
<path fill="#6c6a68" d="M662.5 695.6h1.6v1.8h-1.6zM664.6 695.6h1.6v1.8h-1.6zM668.9 695.6h1.6v1.8h-1.6z"/>
<rect x="653.2" y="553.5" width="7.2" height="7.7" fill="#6b6865" opacity=".55"/>
<path fill="#8a6f63" d="M653.5 553.8h1.8v2h-1.8zM658.3 553.8h1.8v2h-1.8z"/>
<path fill="#6c6a68" d="M655.9 553.8h1.8v2h-1.8z"/>
<path fill="#77736f" d="M655.9 556.3h1.8v2h-1.8zM658.3 556.3h1.8v2h-1.8zM655.9 558.9h1.8v2h-1.8zM658.3 558.9h1.8v2h-1.8z"/>
<rect x="651.4" y="569.1" width="6.3" height="10.4" fill="#6b6865" opacity=".55"/>
<path fill="#8a6f63" d="M651.7 569.4h1.5v2h-1.5zM651.7 572h1.5v2h-1.5zM653.8 574.6h1.5v2h-1.5zM651.7 577.2h1.5v2h-1.5z"/>
<path fill="#77736f" d="M653.8 569.4h1.5v2h-1.5zM655.9 572h1.5v2h-1.5zM653.8 577.2h1.5v2h-1.5z"/>
<path fill="#9c9894" d="M655.9 569.4h1.5v2h-1.5z"/>
<path fill="#8d8985" d="M653.8 572h1.5v2h-1.5zM655.9 577.2h1.5v2h-1.5z"/>
<path fill="#6c6a68" d="M651.7 574.6h1.5v2h-1.5zM655.9 574.6h1.5v2h-1.5z"/>
<rect x="651.4" y="588.5" width="6.3" height="14.7" fill="#6b6865" opacity=".55"/>
<path fill="#77736f" d="M651.7 588.8h1.5v1.9h-1.5zM653.8 593.7h1.5v1.9h-1.5zM655.9 596.1h1.5v1.9h-1.5z"/>
<path fill="#9c9894" d="M653.8 588.8h1.5v1.9h-1.5zM651.7 596.1h1.5v1.9h-1.5zM655.9 598.6h1.5v1.9h-1.5z"/>
<path fill="#8d8985" d="M655.9 588.8h1.5v1.9h-1.5zM651.7 601.1h1.5v1.9h-1.5z"/>
<path fill="#6c6a68" d="M651.7 591.2h1.5v1.9h-1.5zM655.9 591.2h1.5v1.9h-1.5zM651.7 593.7h1.5v1.9h-1.5zM651.7 598.6h1.5v1.9h-1.5zM653.8 598.6h1.5v1.9h-1.5zM653.8 601.1h1.5v1.9h-1.5z"/>
<path fill="#8a6f63" d="M655.9 593.7h1.5v1.9h-1.5zM653.8 596.1h1.5v1.9h-1.5z"/>
<rect x="651.4" y="615.4" width="6.3" height="23.7" fill="#6b6865" opacity=".55"/>
<path fill="#8d8985" d="M651.7 615.7h1.5v1.8h-1.5zM655.9 615.7h1.5v1.8h-1.5zM655.9 632.3h1.5v1.8h-1.5zM653.8 637h1.5v1.8h-1.5z"/>
<path fill="#77736f" d="M653.8 615.7h1.5v1.8h-1.5zM655.9 620.5h1.5v1.8h-1.5zM655.9 622.8h1.5v1.8h-1.5zM655.9 625.2h1.5v1.8h-1.5zM655.9 634.7h1.5v1.8h-1.5z"/>
<path fill="#8a6f63" d="M651.7 618.1h1.5v1.8h-1.5zM651.7 622.8h1.5v1.8h-1.5zM655.9 627.6h1.5v1.8h-1.5zM651.7 632.3h1.5v1.8h-1.5z"/>
<path fill="#9c9894" d="M653.8 618.1h1.5v1.8h-1.5zM653.8 620.5h1.5v1.8h-1.5zM653.8 622.8h1.5v1.8h-1.5zM651.7 625.2h1.5v1.8h-1.5zM653.8 625.2h1.5v1.8h-1.5zM653.8 627.6h1.5v1.8h-1.5zM653.8 632.3h1.5v1.8h-1.5zM651.7 634.7h1.5v1.8h-1.5zM653.8 634.7h1.5v1.8h-1.5z"/>
<path fill="#6c6a68" d="M651.7 620.5h1.5v1.8h-1.5zM651.7 627.6h1.5v1.8h-1.5zM655.9 629.9h1.5v1.8h-1.5zM651.7 637h1.5v1.8h-1.5zM655.9 637h1.5v1.8h-1.5z"/>
<rect x="650" y="656.4" width="5.4" height="7.2" fill="#77736f"/>
<rect x="699.7" y="561.9" width="51.7" height="5.3" fill="#6b6865" opacity=".55"/>
<path fill="#8a6f63" d="M700 562.2h2v2.1h-2zM707.7 562.2h2v2.1h-2zM738.7 562.2h2v2.1h-2zM741.3 562.2h2v2.1h-2zM743.9 562.2h2v2.1h-2zM702.6 564.8h2v2.1h-2zM728.4 564.8h2v2.1h-2zM738.7 564.8h2v2.1h-2zM741.3 564.8h2v2.1h-2z"/>
<path fill="#6c6a68" d="M702.6 562.2h2v2.1h-2zM710.3 562.2h2v2.1h-2zM725.8 562.2h2v2.1h-2zM723.2 564.8h2v2.1h-2zM749.1 564.8h2v2.1h-2z"/>
<path fill="#8d8985" d="M705.2 562.2h2v2.1h-2zM700 564.8h2v2.1h-2zM720.7 564.8h2v2.1h-2zM725.8 564.8h2v2.1h-2zM731 564.8h2v2.1h-2zM733.6 564.8h2v2.1h-2zM743.9 564.8h2v2.1h-2z"/>
<path fill="#77736f" d="M712.9 562.2h2v2.1h-2zM715.5 562.2h2v2.1h-2zM723.2 562.2h2v2.1h-2zM733.6 562.2h2v2.1h-2zM746.5 562.2h2v2.1h-2zM749.1 562.2h2v2.1h-2zM705.2 564.8h2v2.1h-2zM718.1 564.8h2v2.1h-2zM736.2 564.8h2v2.1h-2z"/>
<path fill="#9c9894" d="M718.1 562.2h2v2.1h-2zM720.7 562.2h2v2.1h-2zM736.2 562.2h2v2.1h-2zM707.7 564.8h2v2.1h-2zM710.3 564.8h2v2.1h-2zM712.9 564.8h2v2.1h-2zM715.5 564.8h2v2.1h-2zM746.5 564.8h2v2.1h-2z"/>
<rect x="693.5" y="617.1" width="60.6" height="5.3" fill="#6b6865" opacity=".55"/>
<path fill="#8a6f63" d="M693.8 617.4h2v2.1h-2zM733.3 617.4h2v2.1h-2zM709.6 620.1h2v2.1h-2zM714.8 620.1h2v2.1h-2zM722.7 620.1h2v2.1h-2zM725.4 620.1h2v2.1h-2zM738.5 620.1h2v2.1h-2zM743.8 620.1h2v2.1h-2z"/>
<path fill="#9c9894" d="M699 617.4h2v2.1h-2zM709.6 617.4h2v2.1h-2zM712.2 617.4h2v2.1h-2zM722.7 617.4h2v2.1h-2zM725.4 617.4h2v2.1h-2zM743.8 617.4h2v2.1h-2zM746.4 617.4h2v2.1h-2zM733.3 620.1h2v2.1h-2zM741.2 620.1h2v2.1h-2zM751.7 620.1h2v2.1h-2z"/>
<path fill="#77736f" d="M701.7 617.4h2v2.1h-2zM717.5 617.4h2v2.1h-2zM728 617.4h2v2.1h-2zM730.6 617.4h2v2.1h-2zM735.9 617.4h2v2.1h-2zM738.5 617.4h2v2.1h-2zM741.2 617.4h2v2.1h-2zM749.1 617.4h2v2.1h-2zM693.8 620.1h2v2.1h-2zM720.1 620.1h2v2.1h-2zM746.4 620.1h2v2.1h-2zM749.1 620.1h2v2.1h-2z"/>
<path fill="#8d8985" d="M704.3 617.4h2v2.1h-2zM714.8 617.4h2v2.1h-2zM720.1 617.4h2v2.1h-2zM751.7 617.4h2v2.1h-2zM701.7 620.1h2v2.1h-2zM706.9 620.1h2v2.1h-2zM712.2 620.1h2v2.1h-2zM735.9 620.1h2v2.1h-2z"/>
<path fill="#6c6a68" d="M706.9 617.4h2v2.1h-2zM699 620.1h2v2.1h-2zM704.3 620.1h2v2.1h-2zM717.5 620.1h2v2.1h-2zM728 620.1h2v2.1h-2zM730.6 620.1h2v2.1h-2z"/>
<rect x="693.1" y="569" width="4.8" height="45.4" fill="#6b6865" opacity=".55"/>
<path fill="#8a6f63" d="M693.4 569.3h1.8v2.1h-1.8zM695.8 569.3h1.8v2.1h-1.8zM693.4 582.7h1.8v2.1h-1.8zM695.8 588h1.8v2.1h-1.8zM693.4 590.7h1.8v2.1h-1.8zM695.8 609.4h1.8v2.1h-1.8zM693.4 612.1h1.8v2.1h-1.8z"/>
<path fill="#9c9894" d="M693.4 572h1.8v2.1h-1.8zM693.4 577.3h1.8v2.1h-1.8zM695.8 577.3h1.8v2.1h-1.8zM693.4 580h1.8v2.1h-1.8zM693.4 596h1.8v2.1h-1.8zM693.4 601.4h1.8v2.1h-1.8z"/>
<path fill="#77736f" d="M695.8 572h1.8v2.1h-1.8zM695.8 574.6h1.8v2.1h-1.8zM695.8 585.3h1.8v2.1h-1.8zM695.8 593.4h1.8v2.1h-1.8zM695.8 601.4h1.8v2.1h-1.8zM693.4 609.4h1.8v2.1h-1.8z"/>
<path fill="#8d8985" d="M693.4 574.6h1.8v2.1h-1.8zM695.8 580h1.8v2.1h-1.8zM693.4 598.7h1.8v2.1h-1.8zM695.8 604h1.8v2.1h-1.8z"/>
<path fill="#6c6a68" d="M695.8 582.7h1.8v2.1h-1.8zM693.4 585.3h1.8v2.1h-1.8zM693.4 588h1.8v2.1h-1.8zM695.8 590.7h1.8v2.1h-1.8zM693.4 593.4h1.8v2.1h-1.8zM695.8 596h1.8v2.1h-1.8zM695.8 598.7h1.8v2.1h-1.8zM693.4 606.7h1.8v2.1h-1.8zM695.8 606.7h1.8v2.1h-1.8zM695.8 612.1h1.8v2.1h-1.8z"/>
<rect x="750.5" y="570.8" width="4.5" height="43.7" fill="#6b6865" opacity=".55"/>
<path fill="#8d8985" d="M750.8 571.1h1.6v2h-1.6zM750.8 586.5h1.6v2h-1.6zM753 589.1h1.6v2h-1.6zM753 591.6h1.6v2h-1.6zM750.8 594.2h1.6v2h-1.6zM750.8 612.2h1.6v2h-1.6zM753 612.2h1.6v2h-1.6z"/>
<path fill="#6c6a68" d="M753 571.1h1.6v2h-1.6zM750.8 576.2h1.6v2h-1.6zM750.8 578.8h1.6v2h-1.6zM750.8 599.3h1.6v2h-1.6zM750.8 601.9h1.6v2h-1.6zM753 609.6h1.6v2h-1.6z"/>
<path fill="#9c9894" d="M753 573.6h1.6v2h-1.6zM750.8 583.9h1.6v2h-1.6zM750.8 596.8h1.6v2h-1.6zM753 599.3h1.6v2h-1.6zM753 601.9h1.6v2h-1.6zM750.8 604.5h1.6v2h-1.6zM750.8 607h1.6v2h-1.6z"/>
<path fill="#77736f" d="M753 576.2h1.6v2h-1.6zM753 578.8h1.6v2h-1.6zM753 581.4h1.6v2h-1.6zM750.8 589.1h1.6v2h-1.6zM753 604.5h1.6v2h-1.6z"/>
<path fill="#8a6f63" d="M750.8 581.4h1.6v2h-1.6zM753 583.9h1.6v2h-1.6zM753 586.5h1.6v2h-1.6zM750.8 591.6h1.6v2h-1.6zM753 594.2h1.6v2h-1.6zM753 596.8h1.6v2h-1.6zM750.8 609.6h1.6v2h-1.6z"/>
<rect x="681" y="539.6" width="16" height="8.9" fill="#6b6865" opacity=".55"/>
<path fill="#6c6a68" d="M681.3 539.9h1.7v1.6h-1.7zM692.7 539.9h1.7v1.6h-1.7zM695 539.9h1.7v1.6h-1.7zM685.9 542.1h1.7v1.6h-1.7zM690.4 544.4h1.7v1.6h-1.7zM692.7 544.4h1.7v1.6h-1.7zM692.7 546.6h1.7v1.6h-1.7z"/>
<path fill="#9c9894" d="M685.9 539.9h1.7v1.6h-1.7zM688.2 544.4h1.7v1.6h-1.7zM690.4 546.6h1.7v1.6h-1.7z"/>
<path fill="#77736f" d="M688.2 539.9h1.7v1.6h-1.7z"/>
<path fill="#8a6f63" d="M690.4 539.9h1.7v1.6h-1.7zM683.6 542.1h1.7v1.6h-1.7zM688.2 542.1h1.7v1.6h-1.7zM692.7 542.1h1.7v1.6h-1.7zM683.6 544.4h1.7v1.6h-1.7zM695 544.4h1.7v1.6h-1.7z"/>
<path fill="#8d8985" d="M688.2 546.6h1.7v1.6h-1.7z"/>
<rect x="704.1" y="539.2" width="14.3" height="5.7" fill="#6b6865" opacity=".55"/>
<path fill="#8d8985" d="M704.4 539.5h1.8v2.3h-1.8zM709.2 539.5h1.8v2.3h-1.8zM713.9 542.4h1.8v2.3h-1.8z"/>
<path fill="#77736f" d="M706.8 539.5h1.8v2.3h-1.8zM711.6 539.5h1.8v2.3h-1.8z"/>
<path fill="#6c6a68" d="M704.4 542.4h1.8v2.3h-1.8zM709.2 542.4h1.8v2.3h-1.8z"/>
<path fill="#8a6f63" d="M706.8 542.4h1.8v2.3h-1.8z"/>
<path fill="#9c9894" d="M711.6 542.4h1.8v2.3h-1.8zM716.3 542.4h1.8v2.3h-1.8z"/>
<rect x="730.9" y="538.7" width="20.5" height="6.2" fill="#6b6865" opacity=".55"/>
<path fill="#8a6f63" d="M731.2 539h1.7v1.5h-1.7zM738 541.1h1.7v1.5h-1.7zM740.3 541.1h1.7v1.5h-1.7zM744.8 543.2h1.7v1.5h-1.7z"/>
<path fill="#8d8985" d="M738 539h1.7v1.5h-1.7zM749.4 539h1.7v1.5h-1.7zM731.2 541.1h1.7v1.5h-1.7zM747.1 541.1h1.7v1.5h-1.7zM735.7 543.2h1.7v1.5h-1.7zM749.4 543.2h1.7v1.5h-1.7z"/>
<path fill="#9c9894" d="M740.3 539h1.7v1.5h-1.7zM742.6 539h1.7v1.5h-1.7zM733.4 541.1h1.7v1.5h-1.7zM735.7 541.1h1.7v1.5h-1.7zM742.6 541.1h1.7v1.5h-1.7zM744.8 541.1h1.7v1.5h-1.7zM749.4 541.1h1.7v1.5h-1.7zM731.2 543.2h1.7v1.5h-1.7zM742.6 543.2h1.7v1.5h-1.7z"/>
<rect x="751.4" y="537.5" width="24.9" height="11" fill="#6b6865" opacity=".55"/>
<path fill="#8d8985" d="M751.7 537.8h2.2v2.2h-2.2zM754.4 537.8h2.2v2.2h-2.2zM762.7 537.8h2.2v2.2h-2.2zM768.3 537.8h2.2v2.2h-2.2zM773.8 537.8h2.2v2.2h-2.2zM757.2 540.5h2.2v2.2h-2.2zM760 540.5h2.2v2.2h-2.2z"/>
<path fill="#8a6f63" d="M757.2 537.8h2.2v2.2h-2.2zM765.5 537.8h2.2v2.2h-2.2zM771.1 537.8h2.2v2.2h-2.2zM751.7 540.5h2.2v2.2h-2.2zM754.4 540.5h2.2v2.2h-2.2zM762.7 540.5h2.2v2.2h-2.2zM773.8 540.5h2.2v2.2h-2.2zM760 543.3h2.2v2.2h-2.2zM768.3 543.3h2.2v2.2h-2.2zM773.8 543.3h2.2v2.2h-2.2zM751.7 546h2.2v2.2h-2.2zM757.2 546h2.2v2.2h-2.2zM762.7 546h2.2v2.2h-2.2zM768.3 546h2.2v2.2h-2.2zM771.1 546h2.2v2.2h-2.2zM773.8 546h2.2v2.2h-2.2z"/>
<path fill="#77736f" d="M771.1 540.5h2.2v2.2h-2.2zM751.7 543.3h2.2v2.2h-2.2zM754.4 543.3h2.2v2.2h-2.2zM757.2 543.3h2.2v2.2h-2.2zM762.7 543.3h2.2v2.2h-2.2zM754.4 546h2.2v2.2h-2.2zM765.5 546h2.2v2.2h-2.2z"/>
<rect x="705" y="546.4" width="7.1" height="12.5" fill="#8a8784"/>
<rect x="706" y="547.4" width="5.1" height="1.5" fill="#b5b5b5"/>
<rect x="706.5" y="548.9" width="4.1" height="7.5" fill="#5c5c5c"/>
<rect x="706" y="556.3" width="5.1" height="1.5" fill="#b5b5b5"/>
<rect x="715.7" y="546.4" width="6.6" height="12.5" fill="#8a8784"/>
<rect x="716.7" y="547.4" width="4.6" height="1.5" fill="#b5b5b5"/>
<rect x="717.2" y="548.9" width="3.6" height="7.5" fill="#5c5c5c"/>
<rect x="716.7" y="556.3" width="4.6" height="1.5" fill="#b5b5b5"/>
<rect x="739.4" y="546.4" width="6.6" height="12.5" fill="#8a8784"/>
<rect x="740.4" y="547.4" width="4.6" height="1.5" fill="#b5b5b5"/>
<rect x="740.9" y="548.9" width="3.6" height="7.5" fill="#5c5c5c"/>
<rect x="740.4" y="556.3" width="4.6" height="1.5" fill="#b5b5b5"/>
<rect x="724.6" y="544.9" width="12.5" height="13.4" fill="#7a7672"/>
<rect x="725.6" y="545.9" width="10.5" height="11.4" fill="#3b3937"/>
<rect x="725.6" y="545.9" width="3.4" height="3.4" fill="#8a6250"/>
<rect x="732.7" y="545.9" width="3.4" height="3.4" fill="#e0202a"/>
<rect x="725.6" y="553.9" width="3.4" height="3.4" fill="#8a6250"/>
<rect x="732.7" y="553.9" width="3.4" height="3.4" fill="#8a6250"/>
<rect x="682.8" y="553" width="15.1" height="6.6" fill="#8a8784"/>
<rect x="683.8" y="554" width="2" height="4.6" fill="#b5b5b5"/>
<rect x="685.8" y="554.5" width="9.1" height="3.6" fill="#5c5c5c"/>
<rect x="694.9" y="554" width="2" height="4.6" fill="#b5b5b5"/>
<rect x="752.6" y="547.6" width="12.1" height="6.2" fill="#8a8784"/>
<rect x="753.6" y="548.6" width="1.4" height="4.2" fill="#b5b5b5"/>
<rect x="755" y="549.1" width="7.3" height="3.2" fill="#5c5c5c"/>
<rect x="762.3" y="548.6" width="1.4" height="4.2" fill="#b5b5b5"/>
<rect x="764.7" y="549.4" width="16" height="8" fill="#6b6865" opacity=".55"/>
<path fill="#77736f" d="M765 549.7h2.1v2.1h-2.1zM778.4 549.7h2.1v2.1h-2.1zM765 552.4h2.1v2.1h-2.1zM773 552.4h2.1v2.1h-2.1zM778.4 552.4h2.1v2.1h-2.1zM778.4 555h2.1v2.1h-2.1z"/>
<path fill="#8d8985" d="M767.7 549.7h2.1v2.1h-2.1zM773 549.7h2.1v2.1h-2.1zM765 555h2.1v2.1h-2.1zM767.7 555h2.1v2.1h-2.1z"/>
<path fill="#8a6f63" d="M770.4 549.7h2.1v2.1h-2.1zM775.7 549.7h2.1v2.1h-2.1zM770.4 552.4h2.1v2.1h-2.1zM775.7 552.4h2.1v2.1h-2.1zM773 555h2.1v2.1h-2.1zM775.7 555h2.1v2.1h-2.1z"/>
<rect x="752.6" y="558.8" width="18.4" height="7.8" fill="#8a8784"/>
<rect x="753.6" y="559.8" width="2.7" height="5.8" fill="#b5b5b5"/>
<rect x="756.3" y="560.3" width="11" height="4.8" fill="#5c5c5c"/>
<rect x="767.3" y="559.8" width="2.7" height="5.8" fill="#b5b5b5"/>
<rect x="771.8" y="557.4" width="8.9" height="8.9" fill="#6b6865" opacity=".55"/>
<path fill="#8d8985" d="M772.1 557.7h2.4v2.4h-2.4zM778.1 563.7h2.4v2.4h-2.4z"/>
<path fill="#77736f" d="M775.1 557.7h2.4v2.4h-2.4zM778.1 557.7h2.4v2.4h-2.4zM775.1 560.7h2.4v2.4h-2.4zM778.1 560.7h2.4v2.4h-2.4z"/>
<path fill="#5f79b0" d="M772.1 563.7h2.4v2.4h-2.4z"/>
<path fill="#8a6f63" d="M775.1 563.7h2.4v2.4h-2.4z"/>
<rect x="676.5" y="564.5" width="14.3" height="11" fill="#7a7672"/>
<rect x="677.5" y="565.5" width="12.3" height="9" fill="#3b3937"/>
<rect x="677.5" y="565.5" width="3.4" height="3.4" fill="#e0202a"/>
<rect x="686.4" y="565.5" width="3.4" height="3.4" fill="#8a6250"/>
<rect x="677.5" y="571.2" width="3.4" height="3.4" fill="#8a6250"/>
<rect x="686.4" y="571.2" width="3.4" height="3.4" fill="#8a6250"/>
<rect x="676.5" y="577" width="14.3" height="10.7" fill="#7a7672"/>
<rect x="677.5" y="578" width="12.3" height="8.7" fill="#3b3937"/>
<rect x="677.5" y="578" width="3.4" height="3.4" fill="#e0202a"/>
<rect x="686.4" y="578" width="3.4" height="3.4" fill="#8a6250"/>
<rect x="677.5" y="583.3" width="3.4" height="3.4" fill="#8a6250"/>
<rect x="686.4" y="583.3" width="3.4" height="3.4" fill="#8a6250"/>
<rect x="677.1" y="590.4" width="13.7" height="6.6" fill="#8a8784"/>
<rect x="678.1" y="591.4" width="1.7" height="4.6" fill="#b5b5b5"/>
<rect x="679.8" y="591.9" width="8.2" height="3.6" fill="#5c5c5c"/>
<rect x="688" y="591.4" width="1.7" height="4.6" fill="#b5b5b5"/>
<rect x="677.1" y="600.2" width="13.7" height="6.8" fill="#8a8784"/>
<rect x="678.1" y="601.2" width="1.7" height="4.8" fill="#b5b5b5"/>
<rect x="679.8" y="601.7" width="8.2" height="3.8" fill="#5c5c5c"/>
<rect x="688" y="601.2" width="1.7" height="4.8" fill="#b5b5b5"/>
<rect x="673" y="564.5" width="3.6" height="48.1" fill="#6b6865" opacity=".55"/>
<path fill="#9c9894" d="M673.3 564.8h3v1.9h-3zM673.3 585.1h3v1.9h-3zM673.3 610.4h3v1.9h-3z"/>
<path fill="#8a6f63" d="M673.3 569.9h3v1.9h-3zM673.3 575h3v1.9h-3zM673.3 582.6h3v1.9h-3zM673.3 592.7h3v1.9h-3z"/>
<path fill="#77736f" d="M673.3 577.5h3v1.9h-3zM673.3 595.2h3v1.9h-3zM673.3 597.8h3v1.9h-3zM673.3 602.8h3v1.9h-3zM673.3 605.4h3v1.9h-3z"/>
<path fill="#6c6a68" d="M673.3 580h3v1.9h-3zM673.3 600.3h3v1.9h-3zM673.3 607.9h3v1.9h-3z"/>
<path fill="#8d8985" d="M673.3 587.6h3v1.9h-3zM673.3 590.2h3v1.9h-3z"/>
<rect x="681.3" y="612.7" width="7.7" height="14.3" fill="#8a8784"/>
<rect x="682.3" y="613.7" width="5.7" height="1.9" fill="#b5b5b5"/>
<rect x="682.8" y="615.5" width="4.7" height="8.6" fill="#5c5c5c"/>
<rect x="682.3" y="624.1" width="5.7" height="1.9" fill="#b5b5b5"/>
<rect x="673.9" y="614.4" width="6.2" height="21.4" fill="#6b6865" opacity=".55"/>
<path fill="#6c6a68" d="M674.2 614.7h2.5v2.1h-2.5zM677.3 614.7h2.5v2.1h-2.5zM677.3 625.4h2.5v2.1h-2.5z"/>
<path fill="#8d8985" d="M674.2 617.4h2.5v2.1h-2.5zM674.2 620.1h2.5v2.1h-2.5zM674.2 622.7h2.5v2.1h-2.5zM677.3 630.8h2.5v2.1h-2.5z"/>
<path fill="#8a6f63" d="M677.3 617.4h2.5v2.1h-2.5zM674.2 628.1h2.5v2.1h-2.5zM674.2 633.4h2.5v2.1h-2.5z"/>
<path fill="#77736f" d="M677.3 620.1h2.5v2.1h-2.5z"/>
<path fill="#9c9894" d="M677.3 622.7h2.5v2.1h-2.5zM677.3 628.1h2.5v2.1h-2.5zM674.2 630.8h2.5v2.1h-2.5zM677.3 633.4h2.5v2.1h-2.5z"/>
<rect x="691.3" y="625.1" width="10.7" height="13.4" fill="#7a7672"/>
<rect x="692.3" y="626.1" width="8.7" height="11.4" fill="#3b3937"/>
<rect x="692.3" y="626.1" width="3.2" height="3.2" fill="#8a6250"/>
<rect x="697.8" y="626.1" width="3.2" height="3.2" fill="#8a6250"/>
<rect x="692.3" y="634.3" width="3.2" height="3.2" fill="#e0202a"/>
<rect x="697.8" y="634.3" width="3.2" height="3.2" fill="#8a6250"/>
<rect x="704.1" y="625.1" width="10.3" height="13.4" fill="#7a7672"/>
<rect x="705.1" y="626.1" width="8.3" height="11.4" fill="#3b3937"/>
<rect x="705.1" y="626.1" width="3.1" height="3.1" fill="#8a6250"/>
<rect x="710.4" y="626.1" width="3.1" height="3.1" fill="#8a6250"/>
<rect x="705.1" y="634.4" width="3.1" height="3.1" fill="#e0202a"/>
<rect x="710.4" y="634.4" width="3.1" height="3.1" fill="#8a6250"/>
<rect x="737.1" y="625.1" width="11.6" height="13.4" fill="#7a7672"/>
<rect x="738.1" y="626.1" width="9.6" height="11.4" fill="#3b3937"/>
<rect x="738.1" y="626.1" width="3.4" height="3.4" fill="#8a6250"/>
<rect x="744.3" y="626.1" width="3.4" height="3.4" fill="#e0202a"/>
<rect x="738.1" y="634.1" width="3.4" height="3.4" fill="#8a6250"/>
<rect x="744.3" y="634.1" width="3.4" height="3.4" fill="#8a6250"/>
<rect x="716.3" y="625.1" width="7.1" height="12.5" fill="#8a8784"/>
<rect x="717.3" y="626.1" width="5.1" height="1.5" fill="#b5b5b5"/>
<rect x="717.8" y="627.6" width="4.1" height="7.5" fill="#5c5c5c"/>
<rect x="717.3" y="635.1" width="5.1" height="1.5" fill="#b5b5b5"/>
<rect x="726.9" y="625.1" width="7.1" height="12.5" fill="#8a8784"/>
<rect x="727.9" y="626.1" width="5.1" height="1.5" fill="#b5b5b5"/>
<rect x="728.4" y="627.6" width="4.1" height="7.5" fill="#5c5c5c"/>
<rect x="727.9" y="635.1" width="5.1" height="1.5" fill="#b5b5b5"/>
<rect x="752.2" y="625.1" width="6.2" height="12.5" fill="#8a8784"/>
<rect x="753.2" y="626.1" width="4.2" height="1.5" fill="#b5b5b5"/>
<rect x="753.7" y="627.6" width="3.2" height="7.5" fill="#5c5c5c"/>
<rect x="753.2" y="635.1" width="4.2" height="1.5" fill="#b5b5b5"/>
<rect x="689.9" y="638.5" width="7.1" height="6.2" fill="#6b6865" opacity=".55"/>
<path fill="#6c6a68" d="M692.6 638.8h1.8v2.5h-1.8zM694.9 641.9h1.8v2.5h-1.8z"/>
<path fill="#8d8985" d="M694.9 638.8h1.8v2.5h-1.8zM692.6 641.9h1.8v2.5h-1.8z"/>
<path fill="#9c9894" d="M690.2 641.9h1.8v2.5h-1.8z"/>
<rect x="704.1" y="638.5" width="7.1" height="6.2" fill="#6b6865" opacity=".55"/>
<path fill="#8d8985" d="M704.4 638.8h1.8v2.5h-1.8zM709.2 638.8h1.8v2.5h-1.8z"/>
<path fill="#77736f" d="M704.4 641.9h1.8v2.5h-1.8zM709.2 641.9h1.8v2.5h-1.8z"/>
<rect x="714.8" y="638.5" width="19.6" height="7.1" fill="#6b6865" opacity=".55"/>
<path fill="#6c6a68" d="M717.6 638.8h1.8v1.8h-1.8zM715.1 641.2h1.8v1.8h-1.8zM727.4 641.2h1.8v1.8h-1.8zM722.5 643.5h1.8v1.8h-1.8zM729.8 643.5h1.8v1.8h-1.8z"/>
<path fill="#8d8985" d="M727.4 638.8h1.8v1.8h-1.8zM717.6 641.2h1.8v1.8h-1.8zM715.1 643.5h1.8v1.8h-1.8zM720 643.5h1.8v1.8h-1.8z"/>
<path fill="#77736f" d="M729.8 638.8h1.8v1.8h-1.8zM724.9 641.2h1.8v1.8h-1.8zM729.8 641.2h1.8v1.8h-1.8zM724.9 643.5h1.8v1.8h-1.8zM727.4 643.5h1.8v1.8h-1.8z"/>
<path fill="#8a6f63" d="M720 641.2h1.8v1.8h-1.8zM717.6 643.5h1.8v1.8h-1.8z"/>
<path fill="#9c9894" d="M722.5 641.2h1.8v1.8h-1.8zM732.3 641.2h1.8v1.8h-1.8z"/>
<rect x="752.2" y="638.5" width="7.1" height="6.2" fill="#6b6865" opacity=".55"/>
<path fill="#8d8985" d="M752.5 638.8h1.8v2.5h-1.8zM757.3 638.8h1.8v2.5h-1.8zM754.9 641.9h1.8v2.5h-1.8zM757.3 641.9h1.8v2.5h-1.8z"/>
<path fill="#8a6f63" d="M752.5 641.9h1.8v2.5h-1.8z"/>
<rect x="756.7" y="570.8" width="25.8" height="16" fill="#6b6865" opacity=".55"/>
<path fill="#8d8985" d="M757 571.1h2.3v2.6h-2.3zM768.5 571.1h2.3v2.6h-2.3zM777.1 571.1h2.3v2.6h-2.3zM780 571.1h2.3v2.6h-2.3zM774.2 574.3h2.3v2.6h-2.3zM777.1 580.7h2.3v2.6h-2.3zM780 580.7h2.3v2.6h-2.3zM780 583.9h2.3v2.6h-2.3z"/>
<path fill="#8a6f63" d="M762.7 571.1h2.3v2.6h-2.3zM765.6 571.1h2.3v2.6h-2.3zM771.4 571.1h2.3v2.6h-2.3zM759.9 574.3h2.3v2.6h-2.3zM762.7 574.3h2.3v2.6h-2.3zM765.6 574.3h2.3v2.6h-2.3zM768.5 574.3h2.3v2.6h-2.3zM771.4 574.3h2.3v2.6h-2.3zM780 574.3h2.3v2.6h-2.3zM757 577.5h2.3v2.6h-2.3zM759.9 577.5h2.3v2.6h-2.3zM762.7 577.5h2.3v2.6h-2.3zM765.6 577.5h2.3v2.6h-2.3zM768.5 577.5h2.3v2.6h-2.3zM774.2 577.5h2.3v2.6h-2.3zM780 577.5h2.3v2.6h-2.3zM759.9 580.7h2.3v2.6h-2.3zM762.7 580.7h2.3v2.6h-2.3zM765.6 580.7h2.3v2.6h-2.3zM768.5 580.7h2.3v2.6h-2.3zM774.2 580.7h2.3v2.6h-2.3zM757 583.9h2.3v2.6h-2.3zM762.7 583.9h2.3v2.6h-2.3zM765.6 583.9h2.3v2.6h-2.3zM768.5 583.9h2.3v2.6h-2.3zM771.4 583.9h2.3v2.6h-2.3zM774.2 583.9h2.3v2.6h-2.3z"/>
<path fill="#77736f" d="M774.2 571.1h2.3v2.6h-2.3zM757 574.3h2.3v2.6h-2.3zM777.1 577.5h2.3v2.6h-2.3zM757 580.7h2.3v2.6h-2.3zM771.4 580.7h2.3v2.6h-2.3zM777.1 583.9h2.3v2.6h-2.3z"/>
<rect x="780.8" y="563.7" width="4.5" height="15.1" fill="#6b6865" opacity=".55"/>
<path fill="#8d8985" d="M781.1 564h1.6v1.9h-1.6zM783.3 564h1.6v1.9h-1.6zM783.3 571.5h1.6v1.9h-1.6z"/>
<path fill="#6c6a68" d="M783.3 566.5h1.6v1.9h-1.6zM781.1 576.6h1.6v1.9h-1.6z"/>
<path fill="#8a6f63" d="M781.1 569h1.6v1.9h-1.6zM783.3 574h1.6v1.9h-1.6z"/>
<path fill="#77736f" d="M781.1 571.5h1.6v1.9h-1.6zM781.1 574h1.6v1.9h-1.6z"/>
<path fill="#9c9894" d="M783.3 576.6h1.6v1.9h-1.6z"/>
<rect x="758.5" y="588.6" width="14.8" height="11.6" fill="#b9b7a8"/>
<rect x="760" y="590.1" width="11.8" height="8.6" fill="#d2d0c0"/>
<rect x="759.5" y="595.2" width="4" height="4" fill="#e0202a"/>
<rect x="768.3" y="595.2" width="4" height="4" fill="#6f9374"/>
<rect x="759.5" y="589.6" width="3" height="3" fill="#c09a80"/>
<rect x="769.3" y="589.6" width="3" height="3" fill="#c09a80"/>
<rect x="777.2" y="588.6" width="6.2" height="14.3" fill="#6b6865" opacity=".55"/>
<path fill="#9c9894" d="M777.5 588.9h2.5v2.3h-2.5zM780.6 588.9h2.5v2.3h-2.5zM780.6 600.3h2.5v2.3h-2.5z"/>
<path fill="#8d8985" d="M777.5 591.7h2.5v2.3h-2.5z"/>
<path fill="#8a6f63" d="M780.6 591.7h2.5v2.3h-2.5zM777.5 597.4h2.5v2.3h-2.5z"/>
<path fill="#6c6a68" d="M777.5 594.6h2.5v2.3h-2.5zM780.6 594.6h2.5v2.3h-2.5zM780.6 597.4h2.5v2.3h-2.5z"/>
<path fill="#77736f" d="M777.5 600.3h2.5v2.3h-2.5z"/>
<rect x="758.5" y="603.7" width="13.4" height="11.6" fill="#7a7672"/>
<rect x="759.5" y="604.7" width="11.4" height="9.6" fill="#3b3937"/>
<rect x="759.5" y="604.7" width="3.4" height="3.4" fill="#8a6250"/>
<rect x="767.4" y="604.7" width="3.4" height="3.4" fill="#8a6250"/>
<rect x="759.5" y="610.9" width="3.4" height="3.4" fill="#8a6250"/>
<rect x="767.4" y="610.9" width="3.4" height="3.4" fill="#e0202a"/>
<rect x="771.8" y="605.5" width="5.3" height="8.9" fill="#6b6865" opacity=".55"/>
<path fill="#8a6f63" d="M772.1 605.8h2.1v2.4h-2.1zM772.1 608.8h2.1v2.4h-2.1zM774.8 608.8h2.1v2.4h-2.1z"/>
<path fill="#8d8985" d="M772.1 611.8h2.1v2.4h-2.1zM774.8 611.8h2.1v2.4h-2.1z"/>
<rect x="764.7" y="615.3" width="10.7" height="4.5" fill="#6b6865" opacity=".55"/>
<path fill="#8a6f63" d="M765 615.6h2.1v1.6h-2.1zM773 615.6h2.1v1.6h-2.1zM767.7 617.9h2.1v1.6h-2.1zM773 617.9h2.1v1.6h-2.1z"/>
<path fill="#8d8985" d="M770.4 615.6h2.1v1.6h-2.1zM765 617.9h2.1v1.6h-2.1zM770.4 617.9h2.1v1.6h-2.1z"/>
<rect x="777.2" y="614.1" width="7.5" height="6.1" fill="#857068"/>
<rect x="768.6" y="626" width="13.4" height="16" fill="#7a746f"/>
<rect x="769.6" y="627" width="11.4" height="14" fill="#8a6250"/>
<rect x="772.9" y="627" width="4.8" height="14" fill="#1c1a19"/>
<rect x="769.6" y="631.1" width="11.4" height="5.8" fill="#1c1a19"/>
<rect x="750.5" y="587.7" width="4.5" height="8.9" fill="#77736f"/>
<rect x="697.5" y="540.8" width="1.9" height="1.9" fill="#bb8e1e"/>
<rect x="701.4" y="540.8" width="1.9" height="1.9" fill="#bb8e1e"/>
<rect x="719.2" y="540.4" width="1.9" height="1.9" fill="#bb8e1e"/>
<rect x="724.2" y="540.4" width="1.9" height="1.9" fill="#bb8e1e"/>
<rect x="728.7" y="540.4" width="1.9" height="1.9" fill="#bb8e1e"/>
<rect x="690.7" y="547.6" width="1.9" height="1.9" fill="#bb8e1e"/>
<rect x="675.6" y="554.7" width="1.9" height="1.9" fill="#bb8e1e"/>
<rect x="680.4" y="554.7" width="1.9" height="1.9" fill="#bb8e1e"/>
<rect x="674.3" y="560.9" width="1.9" height="1.9" fill="#bb8e1e"/>
<rect x="678.6" y="560" width="1.9" height="1.9" fill="#bb8e1e"/>
<rect x="749.5" y="549.3" width="1.9" height="1.9" fill="#bb8e1e"/>
<rect x="749.2" y="556.5" width="1.9" height="1.9" fill="#bb8e1e"/>
<rect x="671.1" y="587.1" width="1.9" height="1.9" fill="#bb8e1e"/>
<rect x="678.6" y="609.9" width="1.9" height="1.9" fill="#bb8e1e"/>
<rect x="671.1" y="615.6" width="1.9" height="1.9" fill="#bb8e1e"/>
<rect x="680.9" y="629.9" width="1.9" height="1.9" fill="#bb8e1e"/>
<rect x="685.7" y="629.9" width="1.9" height="1.9" fill="#bb8e1e"/>
<rect x="680.9" y="635.8" width="1.9" height="1.9" fill="#bb8e1e"/>
<rect x="685.7" y="635.8" width="1.9" height="1.9" fill="#bb8e1e"/>
<rect x="712.1" y="643.8" width="1.9" height="1.9" fill="#bb8e1e"/>
<rect x="736.2" y="642.9" width="1.9" height="1.9" fill="#bb8e1e"/>
<rect x="741.5" y="642.9" width="1.9" height="1.9" fill="#bb8e1e"/>
<rect x="746.8" y="642.9" width="1.9" height="1.9" fill="#bb8e1e"/>
<rect x="756.6" y="616.7" width="1.9" height="1.9" fill="#bb8e1e"/>
<rect x="761.6" y="616.7" width="1.9" height="1.9" fill="#bb8e1e"/>
<rect x="756.6" y="622" width="1.9" height="1.9" fill="#bb8e1e"/>
<rect x="650.1" y="554.3" width="1.9" height="1.9" fill="#bb8e1e"/>
<rect x="650.1" y="559.1" width="1.9" height="1.9" fill="#bb8e1e"/>
<rect x="653.3" y="647.3" width="1.9" height="1.9" fill="#bb8e1e"/>
<rect x="652.4" y="653.6" width="1.9" height="1.9" fill="#bb8e1e"/>
<rect x="650.6" y="668.7" width="1.9" height="1.9" fill="#bb8e1e"/>
<rect x="738.8" y="663.4" width="1.9" height="1.9" fill="#bb8e1e"/>
<rect x="697.9" y="567.2" width="52.2" height="49.9" fill="#f01010"/>
<rect x="702.5" y="571.8" width="43" height="40.7" fill="#efefef"/>
<rect x="701.5" y="581.5" width="45.4" height="20.5" rx="3" fill="#cdc72a"/>
<text x="723" y="595.7" font-size="12" font-weight="700" fill="#15150a" text-anchor="middle" textLength="38.5" lengthAdjust="spacingAndGlyphs">U8100</text>
<rect x="650.7" y="522.7" width="3.6" height="6.2" fill="#6d6a66"/>
<rect x="654.3" y="553" width="6.2" height="8" fill="#6b6865" opacity=".55"/>
<path fill="#6c6a68" d="M654.6 553.3h1.5v2.1h-1.5zM656.6 553.3h1.5v2.1h-1.5zM658.7 553.3h1.5v2.1h-1.5zM656.6 555.9h1.5v2.1h-1.5zM658.7 555.9h1.5v2.1h-1.5zM654.6 558.6h1.5v2.1h-1.5z"/>
<path fill="#77736f" d="M654.6 555.9h1.5v2.1h-1.5z"/>
<path fill="#8a6f63" d="M658.7 558.6h1.5v2.1h-1.5z"/>
<rect x="651" y="569" width="6.8" height="10.7" fill="#6b6865" opacity=".55"/>
<path fill="#9c9894" d="M653.6 569.3h1.7v2.1h-1.7zM651.3 574.6h1.7v2.1h-1.7zM653.6 577.3h1.7v2.1h-1.7z"/>
<path fill="#6c6a68" d="M655.9 569.3h1.7v2.1h-1.7zM651.3 577.3h1.7v2.1h-1.7zM655.9 577.3h1.7v2.1h-1.7z"/>
<path fill="#8a6f63" d="M651.3 572h1.7v2.1h-1.7z"/>
<path fill="#77736f" d="M653.6 572h1.7v2.1h-1.7z"/>
<path fill="#8d8985" d="M655.9 572h1.7v2.1h-1.7zM653.6 574.6h1.7v2.1h-1.7zM655.9 574.6h1.7v2.1h-1.7z"/>
<rect x="651" y="588.6" width="6.8" height="15.1" fill="#6b6865" opacity=".55"/>
<path fill="#9c9894" d="M653.6 588.9h1.7v1.9h-1.7zM655.9 591.4h1.7v1.9h-1.7zM653.6 599h1.7v1.9h-1.7zM655.9 599h1.7v1.9h-1.7z"/>
<path fill="#8d8985" d="M655.9 588.9h1.7v1.9h-1.7zM651.3 591.4h1.7v1.9h-1.7zM653.6 593.9h1.7v1.9h-1.7zM651.3 601.5h1.7v1.9h-1.7zM655.9 601.5h1.7v1.9h-1.7z"/>
<path fill="#77736f" d="M651.3 593.9h1.7v1.9h-1.7zM651.3 596.5h1.7v1.9h-1.7zM655.9 596.5h1.7v1.9h-1.7z"/>
<path fill="#6c6a68" d="M655.9 593.9h1.7v1.9h-1.7zM653.6 601.5h1.7v1.9h-1.7z"/>
<path fill="#8a6f63" d="M651.3 599h1.7v1.9h-1.7z"/>
<rect x="651" y="615.3" width="6.8" height="23.7" fill="#6b6865" opacity=".55"/>
<path fill="#77736f" d="M651.3 615.6h1.7v1.8h-1.7zM651.3 627.5h1.7v1.8h-1.7zM655.9 634.6h1.7v1.8h-1.7z"/>
<path fill="#8d8985" d="M653.6 615.6h1.7v1.8h-1.7zM655.9 627.5h1.7v1.8h-1.7zM655.9 637h1.7v1.8h-1.7z"/>
<path fill="#6c6a68" d="M651.3 618h1.7v1.8h-1.7zM651.3 622.7h1.7v1.8h-1.7zM653.6 625.1h1.7v1.8h-1.7zM655.9 632.2h1.7v1.8h-1.7zM653.6 634.6h1.7v1.8h-1.7zM653.6 637h1.7v1.8h-1.7z"/>
<path fill="#9c9894" d="M653.6 618h1.7v1.8h-1.7zM655.9 618h1.7v1.8h-1.7zM651.3 620.4h1.7v1.8h-1.7zM655.9 620.4h1.7v1.8h-1.7zM655.9 622.7h1.7v1.8h-1.7zM651.3 625.1h1.7v1.8h-1.7zM651.3 629.8h1.7v1.8h-1.7z"/>
<path fill="#8a6f63" d="M653.6 620.4h1.7v1.8h-1.7zM653.6 622.7h1.7v1.8h-1.7zM651.3 632.2h1.7v1.8h-1.7zM651.3 634.6h1.7v1.8h-1.7z"/>
<rect x="650.3" y="656.3" width="4.8" height="7.1" fill="#77736f"/>
<rect x="798.2" y="527.1" width="27.4" height="11.6" fill="#8a8784"/>
<rect x="799.2" y="528.1" width="4" height="9.6" fill="#6f9374"/>
<rect x="803.2" y="528.6" width="17.4" height="8.6" fill="#7b574a"/>
<rect x="820.7" y="528.1" width="4" height="9.6" fill="#a9a6a2"/>
<rect x="798.2" y="546.4" width="27.4" height="10.7" fill="#8a8784"/>
<rect x="799.2" y="547.4" width="4" height="8.7" fill="#6f9374"/>
<rect x="803.2" y="547.9" width="17.4" height="7.7" fill="#7b574a"/>
<rect x="820.7" y="547.4" width="4" height="8.7" fill="#a9a6a2"/>
<rect x="798.2" y="564.5" width="27.4" height="10.7" fill="#8a8784"/>
<rect x="799.2" y="565.5" width="4" height="8.7" fill="#6f9374"/>
<rect x="803.2" y="566" width="17.4" height="7.7" fill="#7b574a"/>
<rect x="820.7" y="565.5" width="4" height="8.7" fill="#a9a6a2"/>
<rect x="798.2" y="593.9" width="27.4" height="10.7" fill="#8a8784"/>
<rect x="799.2" y="594.9" width="4" height="8.7" fill="#6f9374"/>
<rect x="803.2" y="595.4" width="17.4" height="7.7" fill="#7b574a"/>
<rect x="820.7" y="594.9" width="4" height="8.7" fill="#a9a6a2"/>
<rect x="798.2" y="612.7" width="27.4" height="10.3" fill="#8a8784"/>
<rect x="799.2" y="613.7" width="4" height="8.3" fill="#6f9374"/>
<rect x="803.2" y="614.2" width="17.4" height="7.3" fill="#7b574a"/>
<rect x="820.7" y="613.7" width="4" height="8.3" fill="#a9a6a2"/>
<rect x="798.2" y="630.8" width="27.4" height="10.7" fill="#8a8784"/>
<rect x="799.2" y="631.8" width="4" height="8.7" fill="#6f9374"/>
<rect x="803.2" y="632.3" width="17.4" height="7.7" fill="#7b574a"/>
<rect x="820.7" y="631.8" width="4" height="8.7" fill="#a9a6a2"/>
<rect x="830.6" y="527.1" width="9.8" height="12.5" fill="#6b6865" opacity=".55"/>
<path fill="#8d8985" d="M835.8 527.4h1.8v1.9h-1.8zM838.3 527.4h1.8v1.9h-1.8zM833.4 529.9h1.8v1.9h-1.8zM835.8 529.9h1.8v1.9h-1.8zM835.8 532.4h1.8v1.9h-1.8zM830.9 534.9h1.8v1.9h-1.8zM833.4 534.9h1.8v1.9h-1.8zM830.9 537.4h1.8v1.9h-1.8zM838.3 537.4h1.8v1.9h-1.8z"/>
<path fill="#8a6f63" d="M830.9 532.4h1.8v1.9h-1.8zM838.3 532.4h1.8v1.9h-1.8zM835.8 534.9h1.8v1.9h-1.8zM838.3 534.9h1.8v1.9h-1.8zM833.4 537.4h1.8v1.9h-1.8z"/>
<rect x="827.6" y="548.7" width="6.5" height="8.6" fill="#1d1b1c" stroke="#858585" stroke-width="1.2"/>
<rect x="827.6" y="586.1" width="6.5" height="8.3" fill="#1d1b1c" stroke="#858585" stroke-width="1.2"/>
<rect x="827.6" y="626" width="6.5" height="8.4" fill="#1d1b1c" stroke="#858585" stroke-width="1.2"/>
<rect x="827.1" y="568.1" width="7.1" height="8" fill="#6b6865" opacity=".55"/>
<path fill="#6c6a68" d="M827.4 568.4h1.8v2.1h-1.8zM832.1 571.1h1.8v2.1h-1.8zM829.8 573.8h1.8v2.1h-1.8z"/>
<path fill="#77736f" d="M827.4 571.1h1.8v2.1h-1.8zM832.1 573.8h1.8v2.1h-1.8z"/>
<rect x="827.1" y="610" width="7.1" height="8" fill="#6b6865" opacity=".55"/>
<path fill="#8d8985" d="M827.4 610.3h1.8v2.1h-1.8zM827.4 613h1.8v2.1h-1.8z"/>
<path fill="#77736f" d="M832.1 610.3h1.8v2.1h-1.8zM832.1 613h1.8v2.1h-1.8z"/>
<path fill="#9c9894" d="M829.8 613h1.8v2.1h-1.8zM827.4 615.6h1.8v2.1h-1.8z"/>
<path fill="#6c6a68" d="M829.8 615.6h1.8v2.1h-1.8z"/>
<rect x="806.1" y="577.9" width="10.7" height="11.9" fill="#857a72"/>
<rect x="808.1" y="578.9" width="6.7" height="3" fill="#d0d0c8"/>
<rect x="807.6" y="583.9" width="7.7" height="4.4" fill="#8a6f63"/>
<rect x="827.4" y="638" width="5.3" height="8.9" fill="#8a8784"/>
<rect x="828.4" y="639" width="3.3" height="0.8" fill="#a9a6a2"/>
<rect x="828.9" y="639.7" width="2.3" height="5.3" fill="#7b574a"/>
<rect x="828.4" y="645.1" width="3.3" height="0.8" fill="#6f9374"/>
<rect x="842.2" y="544.9" width="37.8" height="10.3" fill="#8a8784"/>
<rect x="843.2" y="545.9" width="4" height="8.3" fill="#b5b5b5"/>
<rect x="847.2" y="546.4" width="27.8" height="7.3" fill="#5c5c5c"/>
<rect x="875" y="545.9" width="4" height="8.3" fill="#b5b5b5"/>
<rect x="839.2" y="587.3" width="39.6" height="10.2" fill="#8a8784"/>
<rect x="840.2" y="588.3" width="4" height="8.2" fill="#b5b5b5"/>
<rect x="844.2" y="588.8" width="29.6" height="7.2" fill="#5c5c5c"/>
<rect x="873.8" y="588.3" width="4" height="8.2" fill="#b5b5b5"/>
<rect x="840.4" y="625.5" width="36.5" height="10.7" fill="#8a8784"/>
<rect x="841.4" y="626.5" width="4" height="8.7" fill="#b5b5b5"/>
<rect x="845.4" y="627" width="26.5" height="7.7" fill="#5c5c5c"/>
<rect x="872" y="626.5" width="4" height="8.7" fill="#b5b5b5"/>
<rect x="662.3" y="690.2" width="8.4" height="7.1" fill="#6b6865" opacity=".55"/>
<path fill="#8a6f63" d="M662.6 690.5h2.2v1.8h-2.2z"/>
<path fill="#8d8985" d="M665.4 690.5h2.2v1.8h-2.2z"/>
<path fill="#6c6a68" d="M668.2 690.5h2.2v1.8h-2.2zM665.4 692.8h2.2v1.8h-2.2z"/>
<path fill="#77736f" d="M662.6 692.8h2.2v1.8h-2.2zM662.6 695.2h2.2v1.8h-2.2z"/>
<path fill="#9c9894" d="M668.2 692.8h2.2v1.8h-2.2zM665.4 695.2h2.2v1.8h-2.2z"/>
<rect x="705.5" y="415" width="24.9" height="22.7" fill="#3f3f3f" stroke="#7c7c7c" stroke-width="1.2"/>
<rect x="789.1" y="362.3" width="11.3" height="11.3" fill="#9a9a94"/>
<rect x="790.1" y="363.3" width="9.3" height="4.7" fill="#c9c9bd"/>
<rect x="790.1" y="368" width="9.3" height="4.7" fill="#86a088"/>
<path d="M841.6 348.5L852.4 359.3L841.6 370.1L830.8 359.3Z" fill="#3a3a38" stroke="#7c7c7c" stroke-width="1"/>
<circle cx="841.6" cy="353.9" r="2.300" fill="#e0202a"/>
<circle cx="847" cy="359.3" r="2.300" fill="#6f9374"/>
<circle cx="841.6" cy="364.7" r="2.300" fill="#6f9374"/>
<circle cx="836.2" cy="359.3" r="2.300" fill="#6f9374"/>
<path d="M841.6 400.4L852.4 411.2L841.6 422L830.8 411.2Z" fill="#3a3a38" stroke="#7c7c7c" stroke-width="1"/>
<circle cx="841.6" cy="405.8" r="2.300" fill="#6f9374"/>
<circle cx="847" cy="411.2" r="2.300" fill="#6f9374"/>
<circle cx="841.6" cy="416.6" r="2.300" fill="#e0202a"/>
<circle cx="836.2" cy="411.2" r="2.300" fill="#6f9374"/>
<rect x="932.4" y="352" width="24.1" height="21.8" fill="#3f3f3f" stroke="#7c7c7c" stroke-width="1.2"/>
<rect x="905.5" y="388" width="15.5" height="12.5" fill="#3f3f3f" stroke="#7c7c7c" stroke-width="1.2"/>
<rect x="873.5" y="381.7" width="4.5" height="7.2" fill="#6d6a66"/>
<rect x="882.1" y="383" width="6.6" height="7.2" fill="#857068"/>
<rect x="906.7" y="378.5" width="4" height="6.3" fill="#6d6a66"/>
<rect x="891.8" y="402.7" width="1.9" height="1.9" fill="#bb8e1e"/>
<rect x="895.9" y="399.6" width="1.9" height="1.9" fill="#bb8e1e"/>
<rect x="931.8" y="413.8" width="1.9" height="1.9" fill="#bb8e1e"/>
<rect x="956.1" y="414.9" width="1.9" height="1.9" fill="#bb8e1e"/>
<rect x="819.2" y="444.9" width="1.9" height="1.9" fill="#bb8e1e"/>
<rect x="824.6" y="444.9" width="1.9" height="1.9" fill="#bb8e1e"/>
<rect x="982.7" y="496.9" width="1.9" height="1.9" fill="#bb8e1e"/>
<rect x="905.9" y="405.4" width="12.6" height="5.7" fill="#6b6865" opacity=".55"/>
<path fill="#77736f" d="M908.7 405.7h1.9v2.3h-1.9zM916.2 408.6h1.9v2.3h-1.9z"/>
<path fill="#8a6f63" d="M911.2 405.7h1.9v2.3h-1.9zM916.2 405.7h1.9v2.3h-1.9zM908.7 408.6h1.9v2.3h-1.9zM913.7 408.6h1.9v2.3h-1.9z"/>
<path fill="#9c9894" d="M913.7 405.7h1.9v2.3h-1.9zM906.2 408.6h1.9v2.3h-1.9z"/>
<rect x="902.3" y="411.7" width="17.4" height="15.3" fill="#7a7672"/>
<rect x="903.3" y="412.7" width="15.4" height="13.3" fill="#353331"/>
<rect x="903.3" y="412.7" width="4" height="4" fill="#8a6250"/>
<rect x="914.2" y="416.7" width="4.5" height="5" fill="#8a6250"/>
<rect x="903.3" y="421.5" width="4.5" height="4.5" fill="#6f9374"/>
<rect x="928.3" y="387.5" width="4.5" height="6.3" fill="#77736f"/>
<rect x="936.4" y="384.8" width="20.7" height="7.2" fill="#6b6865" opacity=".55"/>
<path fill="#6c6a68" d="M936.7 385.1h2v1.8h-2zM947 385.1h2v1.8h-2zM939.3 387.5h2v1.8h-2zM944.4 387.5h2v1.8h-2zM947 387.5h2v1.8h-2zM941.8 389.9h2v1.8h-2z"/>
<path fill="#8a6f63" d="M939.3 385.1h2v1.8h-2zM949.6 385.1h2v1.8h-2zM954.7 385.1h2v1.8h-2zM949.6 389.9h2v1.8h-2zM954.7 389.9h2v1.8h-2z"/>
<path fill="#9c9894" d="M944.4 385.1h2v1.8h-2zM952.2 385.1h2v1.8h-2zM936.7 387.5h2v1.8h-2zM941.8 387.5h2v1.8h-2zM952.2 387.5h2v1.8h-2zM939.3 389.9h2v1.8h-2zM952.2 389.9h2v1.8h-2z"/>
<path fill="#8d8985" d="M949.6 387.5h2v1.8h-2zM954.7 387.5h2v1.8h-2zM936.7 389.9h2v1.8h-2zM944.4 389.9h2v1.8h-2z"/>
<path fill="#77736f" d="M947 389.9h2v1.8h-2z"/>
<rect x="930.2" y="395.5" width="8.3" height="9.4" fill="#1d1b1c" stroke="#858585" stroke-width="1.2"/>
<rect x="941.7" y="397.3" width="12.1" height="16.6" fill="#1d1b1c" stroke="#858585" stroke-width="1.2"/>
<rect x="957.9" y="396" width="7.3" height="9.8" fill="#1d1b1c" stroke="#858585" stroke-width="1.2"/>
<rect x="929.2" y="406.3" width="10.8" height="12.6" fill="#6b6865" opacity=".55"/>
<path fill="#77736f" d="M929.5 406.6h2.1v1.9h-2.1zM934.9 409.1h2.1v1.9h-2.1zM937.6 409.1h2.1v1.9h-2.1zM932.2 411.6h2.1v1.9h-2.1zM937.6 411.6h2.1v1.9h-2.1z"/>
<path fill="#6c6a68" d="M932.2 406.6h2.1v1.9h-2.1zM932.2 409.1h2.1v1.9h-2.1zM929.5 414.2h2.1v1.9h-2.1z"/>
<path fill="#8a6f63" d="M934.9 406.6h2.1v1.9h-2.1zM929.5 411.6h2.1v1.9h-2.1zM932.2 416.7h2.1v1.9h-2.1z"/>
<rect x="942.7" y="418" width="11.7" height="6.3" fill="#6b6865" opacity=".55"/>
<path fill="#8d8985" d="M943 418.3h2.3v2.5h-2.3zM948.8 418.3h2.3v2.5h-2.3z"/>
<path fill="#9c9894" d="M945.9 418.3h2.3v2.5h-2.3z"/>
<path fill="#6c6a68" d="M951.7 418.3h2.3v2.5h-2.3zM945.9 421.4h2.3v2.5h-2.3z"/>
<path fill="#77736f" d="M943 421.4h2.3v2.5h-2.3z"/>
<rect x="957" y="407.2" width="9" height="6.3" fill="#6b6865" opacity=".55"/>
<path fill="#8d8985" d="M960.3 407.5h2.4v2.5h-2.4z"/>
<path fill="#77736f" d="M963.3 407.5h2.4v2.5h-2.4z"/>
<rect x="966.9" y="384.8" width="4.5" height="11.7" fill="#6b6865" opacity=".55"/>
<path fill="#77736f" d="M969.4 385.1h1.6v2.3h-1.6z"/>
<path fill="#8d8985" d="M967.2 388h1.6v2.3h-1.6z"/>
<path fill="#8a6f63" d="M967.2 390.9h1.6v2.3h-1.6z"/>
<path fill="#6c6a68" d="M967.2 393.8h1.6v2.3h-1.6zM969.4 393.8h1.6v2.3h-1.6z"/>
<rect x="972.3" y="386.5" width="9.8" height="7.6" fill="#1d1b1c" stroke="#858585" stroke-width="1.2"/>
<rect x="983.1" y="383" width="4.5" height="6.3" fill="#77736f"/>
<rect x="989.3" y="385.7" width="4.5" height="10.8" fill="#6b6865" opacity=".55"/>
<path fill="#9c9894" d="M989.6 386h1.6v2.1h-1.6zM991.9 386h1.6v2.1h-1.6z"/>
<path fill="#8d8985" d="M989.6 388.7h1.6v2.1h-1.6z"/>
<path fill="#8a6f63" d="M991.9 391.4h1.6v2.1h-1.6z"/>
<path fill="#77736f" d="M991.9 394h1.6v2.1h-1.6z"/>
<rect x="994.9" y="387.1" width="9.8" height="6.7" fill="#1d1b1c" stroke="#858585" stroke-width="1.2"/>
<rect x="1006.4" y="383" width="6.6" height="11.7" fill="#6b6865" opacity=".55"/>
<path fill="#9c9894" d="M1006.7 383.3h1.6v2.3h-1.6z"/>
<path fill="#77736f" d="M1008.9 383.3h1.6v2.3h-1.6z"/>
<path fill="#8d8985" d="M1011.1 383.3h1.6v2.3h-1.6zM1006.7 386.2h1.6v2.3h-1.6z"/>
<path fill="#6c6a68" d="M1008.9 386.2h1.6v2.3h-1.6zM1006.7 389.1h1.6v2.3h-1.6zM1008.9 389.1h1.6v2.3h-1.6zM1011.1 389.1h1.6v2.3h-1.6z"/>
<path fill="#8a6f63" d="M1011.1 392h1.6v2.3h-1.6z"/>
<rect x="994.7" y="397.3" width="19.8" height="11.7" fill="#6b6865" opacity=".55"/>
<path fill="#6c6a68" d="M997.5 397.6h1.9v2.3h-1.9zM1000 397.6h1.9v2.3h-1.9zM995 400.6h1.9v2.3h-1.9zM1009.8 400.6h1.9v2.3h-1.9zM1004.9 403.5h1.9v2.3h-1.9zM1009.8 403.5h1.9v2.3h-1.9zM1004.9 406.4h1.9v2.3h-1.9zM1007.4 406.4h1.9v2.3h-1.9z"/>
<path fill="#8a6f63" d="M1004.9 397.6h1.9v2.3h-1.9zM1007.4 400.6h1.9v2.3h-1.9zM1012.3 400.6h1.9v2.3h-1.9z"/>
<path fill="#9c9894" d="M1007.4 397.6h1.9v2.3h-1.9zM1000 403.5h1.9v2.3h-1.9zM1009.8 406.4h1.9v2.3h-1.9zM1012.3 406.4h1.9v2.3h-1.9z"/>
<path fill="#77736f" d="M1012.3 397.6h1.9v2.3h-1.9zM997.5 400.6h1.9v2.3h-1.9zM1004.9 400.6h1.9v2.3h-1.9zM1000 406.4h1.9v2.3h-1.9z"/>
<path fill="#8d8985" d="M1012.3 403.5h1.9v2.3h-1.9zM995 406.4h1.9v2.3h-1.9z"/>
<rect x="998.5" y="399.6" width="5.6" height="6.2" fill="#1d1b1c" stroke="#858585" stroke-width="1.2"/>
<rect x="975.9" y="400.9" width="18.9" height="13.5" fill="#6b6865" opacity=".55"/>
<path fill="#9c9894" d="M976.2 401.2h2.1v2.1h-2.1zM981.6 403.9h2.1v2.1h-2.1zM989.6 403.9h2.1v2.1h-2.1zM984.3 406.6h2.1v2.1h-2.1z"/>
<path fill="#77736f" d="M989.6 401.2h2.1v2.1h-2.1zM976.2 403.9h2.1v2.1h-2.1zM992.3 403.9h2.1v2.1h-2.1zM992.3 409.3h2.1v2.1h-2.1zM989.6 412h2.1v2.1h-2.1z"/>
<path fill="#6c6a68" d="M976.2 406.6h2.1v2.1h-2.1zM976.2 409.3h2.1v2.1h-2.1zM987 412h2.1v2.1h-2.1z"/>
<path fill="#8a6f63" d="M989.6 406.6h2.1v2.1h-2.1zM978.9 409.3h2.1v2.1h-2.1zM984.3 412h2.1v2.1h-2.1zM992.3 412h2.1v2.1h-2.1z"/>
<path fill="#8d8985" d="M989.6 409.3h2.1v2.1h-2.1z"/>
<rect x="984.5" y="405.9" width="6.2" height="4.4" fill="#1d1b1c" stroke="#858585" stroke-width="1.2"/>
<rect x="972.3" y="413.5" width="8.1" height="6.3" fill="#6b6865" opacity=".55"/>
<path fill="#6c6a68" d="M972.6 413.8h2.1v2.5h-2.1zM972.6 416.9h2.1v2.5h-2.1z"/>
<path fill="#9c9894" d="M978 413.8h2.1v2.5h-2.1z"/>
<path fill="#77736f" d="M975.3 416.9h2.1v2.5h-2.1z"/>
<path fill="#8a6f63" d="M978 416.9h2.1v2.5h-2.1z"/>
<rect x="981.3" y="413.5" width="13.5" height="6.3" fill="#6b6865" opacity=".55"/>
<path fill="#6c6a68" d="M981.6 413.8h2.1v2.5h-2.1zM984.3 416.9h2.1v2.5h-2.1z"/>
<path fill="#77736f" d="M989.6 413.8h2.1v2.5h-2.1zM987 416.9h2.1v2.5h-2.1z"/>
<path fill="#8a6f63" d="M992.3 413.8h2.1v2.5h-2.1zM992.3 416.9h2.1v2.5h-2.1z"/>
<path fill="#9c9894" d="M989.6 416.9h2.1v2.5h-2.1z"/>
<rect x="984.5" y="420.3" width="6.2" height="4.4" fill="#1d1b1c" stroke="#858585" stroke-width="1.2"/>
<rect x="962.4" y="422.5" width="18.3" height="14.4" fill="#7a7672"/>
<rect x="963.4" y="423.5" width="16.3" height="12.4" fill="#353331"/>
<rect x="964.4" y="423.5" width="4.5" height="4" fill="#8a6250"/>
<rect x="974.7" y="427" width="5" height="5" fill="#8a6250"/>
<rect x="964.4" y="431.3" width="4.5" height="4.5" fill="#6f9374"/>
<rect x="958.8" y="426.6" width="3.6" height="5.7" fill="#77736f"/>
<rect x="1004.6" y="415.3" width="15.7" height="12.1" fill="#3f3f3f" stroke="#7c7c7c" stroke-width="1.2"/>
<rect x="988.1" y="443.3" width="15.5" height="12.3" fill="#3f3f3f" stroke="#7c7c7c" stroke-width="1.2"/>
<rect x="988.1" y="467.9" width="15.5" height="12.8" fill="#3f3f3f" stroke="#7c7c7c" stroke-width="1.2"/>
<rect x="735.8" y="435.9" width="11.7" height="26.9" fill="#8a8784"/>
<rect x="736.8" y="436.9" width="9.7" height="4" fill="#6f9374"/>
<rect x="737.3" y="440.9" width="8.7" height="16.9" fill="#7b574a"/>
<rect x="736.8" y="457.9" width="9.7" height="4" fill="#a9a6a2"/>
<rect x="747.5" y="435.9" width="11.7" height="26.9" fill="#8a8784"/>
<rect x="748.5" y="436.9" width="9.7" height="4" fill="#6f9374"/>
<rect x="749" y="440.9" width="8.7" height="16.9" fill="#7b574a"/>
<rect x="748.5" y="457.9" width="9.7" height="4" fill="#a9a6a2"/>
<rect x="759.1" y="435.9" width="11.7" height="26.9" fill="#8a8784"/>
<rect x="760.1" y="436.9" width="9.7" height="4" fill="#6f9374"/>
<rect x="760.6" y="440.9" width="8.7" height="16.9" fill="#7b574a"/>
<rect x="760.1" y="457.9" width="9.7" height="4" fill="#a9a6a2"/>
<rect x="770.8" y="435.9" width="11.7" height="26.9" fill="#8a8784"/>
<rect x="771.8" y="436.9" width="9.7" height="4" fill="#6f9374"/>
<rect x="772.3" y="440.9" width="8.7" height="16.9" fill="#7b574a"/>
<rect x="771.8" y="457.9" width="9.7" height="4" fill="#a9a6a2"/>
<rect x="782.5" y="435.9" width="11.7" height="26.9" fill="#8a8784"/>
<rect x="783.5" y="436.9" width="9.7" height="4" fill="#6f9374"/>
<rect x="784" y="440.9" width="8.7" height="16.9" fill="#7b574a"/>
<rect x="783.5" y="457.9" width="9.7" height="4" fill="#a9a6a2"/>
<rect x="794.2" y="435.9" width="11.7" height="26.9" fill="#8a8784"/>
<rect x="795.2" y="436.9" width="9.7" height="4" fill="#6f9374"/>
<rect x="795.7" y="440.9" width="8.7" height="16.9" fill="#7b574a"/>
<rect x="795.2" y="457.9" width="9.7" height="4" fill="#a9a6a2"/>
<rect x="805.8" y="435.9" width="12" height="26.9" fill="#8a8784"/>
<rect x="806.8" y="436.9" width="10" height="4" fill="#6f9374"/>
<rect x="807.3" y="440.9" width="9" height="16.9" fill="#7b574a"/>
<rect x="806.8" y="457.9" width="10" height="4" fill="#a9a6a2"/>
<rect x="720.5" y="448.1" width="5.8" height="8.9" fill="#2b2b2b" stroke="#858585" stroke-width="1.2"/>
<rect x="720.9" y="456.6" width="13.1" height="6.6" fill="#8a8784"/>
<rect x="722.4" y="458.1" width="8.6" height="3.6" fill="#8a6f63"/>
<rect x="731" y="457.6" width="2" height="4.6" fill="#6f9374"/>
<rect x="747.8" y="463.8" width="9.5" height="6.6" fill="#857068"/>
<rect x="768.1" y="463.8" width="23.3" height="9.9" fill="#9aa0a8"/>
<rect x="772.8" y="465.8" width="14" height="5.9" fill="#3658c4"/>
<rect x="794.5" y="464.7" width="7.7" height="14.7" fill="#8a8784"/>
<rect x="795.5" y="465.7" width="5.7" height="1.9" fill="#a9a6a2"/>
<rect x="796" y="467.6" width="4.7" height="8.8" fill="#7b574a"/>
<rect x="795.5" y="476.5" width="5.7" height="1.9" fill="#6f9374"/>
<rect x="817.9" y="453.9" width="26" height="9.9" fill="#6b6865" opacity=".55"/>
<path fill="#8d8985" d="M818.2 454.2h2.3v1.9h-2.3zM823.9 454.2h2.3v1.9h-2.3zM829.7 454.2h2.3v1.9h-2.3zM818.2 456.7h2.3v1.9h-2.3zM823.9 456.7h2.3v1.9h-2.3zM829.7 456.7h2.3v1.9h-2.3zM838.4 456.7h2.3v1.9h-2.3zM818.2 461.6h2.3v1.9h-2.3zM823.9 461.6h2.3v1.9h-2.3zM835.5 461.6h2.3v1.9h-2.3z"/>
<path fill="#77736f" d="M821.1 454.2h2.3v1.9h-2.3zM832.6 454.2h2.3v1.9h-2.3zM835.5 456.7h2.3v1.9h-2.3zM841.3 456.7h2.3v1.9h-2.3zM826.8 459.1h2.3v1.9h-2.3zM841.3 461.6h2.3v1.9h-2.3z"/>
<path fill="#6c6a68" d="M826.8 454.2h2.3v1.9h-2.3zM841.3 454.2h2.3v1.9h-2.3zM821.1 459.1h2.3v1.9h-2.3zM823.9 459.1h2.3v1.9h-2.3zM829.7 459.1h2.3v1.9h-2.3zM832.6 459.1h2.3v1.9h-2.3zM835.5 459.1h2.3v1.9h-2.3zM832.6 461.6h2.3v1.9h-2.3z"/>
<path fill="#9c9894" d="M835.5 454.2h2.3v1.9h-2.3zM826.8 456.7h2.3v1.9h-2.3zM821.1 461.6h2.3v1.9h-2.3zM829.7 461.6h2.3v1.9h-2.3z"/>
<path fill="#8a6f63" d="M838.4 454.2h2.3v1.9h-2.3zM821.1 456.7h2.3v1.9h-2.3zM832.6 456.7h2.3v1.9h-2.3zM818.2 459.1h2.3v1.9h-2.3zM841.3 459.1h2.3v1.9h-2.3zM838.4 461.6h2.3v1.9h-2.3z"/>
<rect x="843.9" y="441.3" width="7.2" height="12.6" fill="#6b6865" opacity=".55"/>
<path fill="#9c9894" d="M846.6 441.6h1.8v1.9h-1.8zM849 449.2h1.8v1.9h-1.8zM844.2 451.7h1.8v1.9h-1.8z"/>
<path fill="#77736f" d="M844.2 444.1h1.8v1.9h-1.8zM846.6 451.7h1.8v1.9h-1.8z"/>
<path fill="#8d8985" d="M846.6 444.1h1.8v1.9h-1.8zM844.2 449.2h1.8v1.9h-1.8zM846.6 449.2h1.8v1.9h-1.8z"/>
<path fill="#8a6f63" d="M849 444.1h1.8v1.9h-1.8zM849 446.7h1.8v1.9h-1.8zM849 451.7h1.8v1.9h-1.8z"/>
<rect x="853" y="441.5" width="9.8" height="10.1" fill="#1d1b1c" stroke="#858585" stroke-width="1.2"/>
<rect x="864.6" y="441.3" width="4.5" height="12.6" fill="#6b6865" opacity=".55"/>
<path fill="#8d8985" d="M867.1 441.6h1.6v1.9h-1.6zM867.1 444.1h1.6v1.9h-1.6zM864.9 449.2h1.6v1.9h-1.6zM867.1 449.2h1.6v1.9h-1.6zM864.9 451.7h1.6v1.9h-1.6z"/>
<path fill="#8a6f63" d="M864.9 444.1h1.6v1.9h-1.6zM864.9 446.7h1.6v1.9h-1.6zM867.1 446.7h1.6v1.9h-1.6z"/>
<rect x="844.8" y="453.9" width="7.2" height="14.4" fill="#8a8784"/>
<rect x="845.8" y="454.9" width="5.2" height="1.9" fill="#6f9374"/>
<rect x="846.3" y="456.8" width="4.2" height="8.6" fill="#7b574a"/>
<rect x="845.8" y="465.4" width="5.2" height="1.9" fill="#a9a6a2"/>
<rect x="852" y="453.9" width="7.2" height="14.4" fill="#8a8784"/>
<rect x="853" y="454.9" width="5.2" height="1.9" fill="#6f9374"/>
<rect x="853.5" y="456.8" width="4.2" height="8.6" fill="#7b574a"/>
<rect x="853" y="465.4" width="5.2" height="1.9" fill="#a9a6a2"/>
<rect x="859.2" y="453.9" width="7.2" height="14.4" fill="#8a8784"/>
<rect x="860.2" y="454.9" width="5.2" height="1.9" fill="#6f9374"/>
<rect x="860.7" y="456.8" width="4.2" height="8.6" fill="#7b574a"/>
<rect x="860.2" y="465.4" width="5.2" height="1.9" fill="#a9a6a2"/>
<rect x="866.3" y="453.9" width="7.2" height="14.4" fill="#8a8784"/>
<rect x="867.3" y="454.9" width="5.2" height="1.9" fill="#6f9374"/>
<rect x="867.8" y="456.8" width="4.2" height="8.6" fill="#7b574a"/>
<rect x="867.3" y="465.4" width="5.2" height="1.9" fill="#a9a6a2"/>
<rect x="842.1" y="462" width="8.1" height="9.9" fill="#d6d6cc"/>
<rect x="845.3" y="469.2" width="28.2" height="10.8" fill="#8f9cc0"/>
<rect x="846.3" y="470.2" width="26.2" height="8.8" fill="#aab0c0"/>
<rect x="851.1" y="471" width="16.5" height="7.7" fill="#3658c4"/>
<rect x="873.5" y="470.1" width="7.2" height="9" fill="#857068"/>
<rect x="814.8" y="466.6" width="25.9" height="25.1" fill="#6f6c69"/>
<rect x="816.7" y="468.6" width="22" height="21.3" fill="#1d1b1c" stroke="#858585" stroke-width="1.2"/>
<rect x="803" y="463.8" width="10.4" height="15.3" fill="#6b6865" opacity=".55"/>
<path fill="#8d8985" d="M803.3 464.1h2v1.9h-2zM803.3 466.6h2v1.9h-2zM805.9 466.6h2v1.9h-2zM808.5 466.6h2v1.9h-2zM811.1 466.6h2v1.9h-2zM803.3 471.7h2v1.9h-2zM805.9 476.8h2v1.9h-2zM808.5 476.8h2v1.9h-2z"/>
<path fill="#4a4845" d="M805.9 464.1h2v1.9h-2zM803.3 469.2h2v1.9h-2zM811.1 471.7h2v1.9h-2zM803.3 474.3h2v1.9h-2zM805.9 474.3h2v1.9h-2zM803.3 476.8h2v1.9h-2z"/>
<path fill="#6d6a66" d="M808.5 464.1h2v1.9h-2zM808.5 469.2h2v1.9h-2zM811.1 469.2h2v1.9h-2zM811.1 474.3h2v1.9h-2zM811.1 476.8h2v1.9h-2z"/>
<rect x="801.7" y="482.3" width="11.7" height="5.7" fill="#55524f"/>
<rect x="783.7" y="483.5" width="17.4" height="15.6" fill="#7a7672"/>
<rect x="784.7" y="484.5" width="15.4" height="13.6" fill="#3b3937"/>
<rect x="784.7" y="484.5" width="3.4" height="3.4" fill="#8a6250"/>
<rect x="796.8" y="484.5" width="3.4" height="3.4" fill="#8a6250"/>
<rect x="784.7" y="494.8" width="3.4" height="3.4" fill="#8a6250"/>
<rect x="796.8" y="494.8" width="3.4" height="3.4" fill="#e0202a"/>
<rect x="725.4" y="496.1" width="40.4" height="10.8" fill="#8a8784"/>
<rect x="726.4" y="497.1" width="4" height="8.8" fill="#b5b5b5"/>
<rect x="730.4" y="497.6" width="30.4" height="7.8" fill="#5c5c5c"/>
<rect x="760.8" y="497.1" width="4" height="8.8" fill="#b5b5b5"/>
<rect x="843.9" y="489.5" width="26.9" height="11.1" fill="#8a8784"/>
<rect x="844.9" y="490.5" width="4" height="9.1" fill="#b5b5b5"/>
<rect x="848.9" y="491" width="16.9" height="8.1" fill="#5c5c5c"/>
<rect x="865.8" y="490.5" width="4" height="9.1" fill="#b5b5b5"/>
<rect x="824.1" y="492.5" width="18" height="9.9" fill="#6b6865" opacity=".55"/>
<path fill="#77736f" d="M824.4 492.8h2.4v1.9h-2.4zM827.4 495.3h2.4v1.9h-2.4zM833.4 500.2h2.4v1.9h-2.4z"/>
<path fill="#8a6f63" d="M827.4 492.8h2.4v1.9h-2.4zM824.4 495.3h2.4v1.9h-2.4zM836.4 495.3h2.4v1.9h-2.4zM827.4 497.7h2.4v1.9h-2.4zM839.4 497.7h2.4v1.9h-2.4zM830.4 500.2h2.4v1.9h-2.4z"/>
<path fill="#8d8985" d="M830.4 492.8h2.4v1.9h-2.4zM836.4 492.8h2.4v1.9h-2.4zM839.4 492.8h2.4v1.9h-2.4zM833.4 495.3h2.4v1.9h-2.4zM824.4 497.7h2.4v1.9h-2.4zM836.4 497.7h2.4v1.9h-2.4zM824.4 500.2h2.4v1.9h-2.4zM827.4 500.2h2.4v1.9h-2.4zM836.4 500.2h2.4v1.9h-2.4z"/>
<rect x="873.5" y="482.6" width="6.3" height="14.4" fill="#8a8784"/>
<rect x="874.5" y="483.6" width="4.3" height="1.9" fill="#6f9374"/>
<rect x="875" y="485.5" width="3.3" height="8.6" fill="#7b574a"/>
<rect x="874.5" y="494.1" width="4.3" height="1.9" fill="#a9a6a2"/>
<rect x="869" y="482.6" width="4.5" height="7.2" fill="#857068"/>
<rect x="880.7" y="484.4" width="3.6" height="7.2" fill="#857068"/>
<rect x="881.2" y="493.5" width="6.7" height="9.2" fill="#1d1b1c" stroke="#858585" stroke-width="1.2"/>
<rect x="877.1" y="502.4" width="6.3" height="4.5" fill="#6d6a66"/>
<rect x="894.5" y="437.2" width="12.2" height="26.6" fill="#8a8784"/>
<rect x="895.5" y="438.2" width="10.2" height="4" fill="#6f9374"/>
<rect x="896" y="442.2" width="9.2" height="16.6" fill="#7b574a"/>
<rect x="895.5" y="458.8" width="10.2" height="4" fill="#a9a6a2"/>
<rect x="910.7" y="447.6" width="5.4" height="8.1" fill="#857068"/>
<rect x="915.7" y="453" width="23.7" height="9.5" fill="#6b6865" opacity=".55"/>
<path fill="#6c6a68" d="M918.7 453.3h2v1.8h-2zM926.6 453.3h2v1.8h-2zM929.2 453.3h2v1.8h-2zM931.8 453.3h2v1.8h-2zM937.1 455.7h2v1.8h-2zM921.3 458.1h2v1.8h-2zM929.2 458.1h2v1.8h-2zM926.6 460.4h2v1.8h-2z"/>
<path fill="#8a6f63" d="M921.3 453.3h2v1.8h-2zM916 455.7h2v1.8h-2zM931.8 455.7h2v1.8h-2zM923.9 458.1h2v1.8h-2zM926.6 458.1h2v1.8h-2zM916 460.4h2v1.8h-2zM923.9 460.4h2v1.8h-2z"/>
<path fill="#9c9894" d="M923.9 453.3h2v1.8h-2zM918.7 458.1h2v1.8h-2zM937.1 458.1h2v1.8h-2zM929.2 460.4h2v1.8h-2z"/>
<path fill="#8d8985" d="M934.5 453.3h2v1.8h-2zM931.8 458.1h2v1.8h-2zM931.8 460.4h2v1.8h-2zM934.5 460.4h2v1.8h-2z"/>
<path fill="#77736f" d="M937.1 453.3h2v1.8h-2zM923.9 455.7h2v1.8h-2zM929.2 455.7h2v1.8h-2zM934.5 455.7h2v1.8h-2zM918.7 460.4h2v1.8h-2z"/>
<rect x="894.5" y="467.4" width="28.4" height="11.3" fill="#8a8784"/>
<rect x="895.5" y="468.4" width="4" height="9.3" fill="#b5b5b5"/>
<rect x="899.5" y="468.9" width="18.4" height="8.3" fill="#5c5c5c"/>
<rect x="917.9" y="468.4" width="4" height="9.3" fill="#b5b5b5"/>
<rect x="924.3" y="464.3" width="10.7" height="16.4" fill="#1d1b1c" stroke="#858585" stroke-width="1.2"/>
<rect x="937.6" y="468.3" width="5" height="9" fill="#857068"/>
<rect x="951.3" y="441.3" width="12.6" height="48.1" fill="#8a8784"/>
<rect x="952.3" y="442.3" width="10.6" height="4" fill="#6f9374"/>
<rect x="952.8" y="446.3" width="9.6" height="38.1" fill="#7b574a"/>
<rect x="952.3" y="484.5" width="10.6" height="4" fill="#a9a6a2"/>
<rect x="914.8" y="482.6" width="19.8" height="6.3" fill="#6b6865" opacity=".55"/>
<path fill="#6c6a68" d="M915.1 482.9h1.9v2.5h-1.9zM925 482.9h1.9v2.5h-1.9zM932.4 482.9h1.9v2.5h-1.9zM932.4 486.1h1.9v2.5h-1.9z"/>
<path fill="#8a6f63" d="M917.6 482.9h1.9v2.5h-1.9z"/>
<path fill="#9c9894" d="M922.5 482.9h1.9v2.5h-1.9zM929.9 482.9h1.9v2.5h-1.9z"/>
<path fill="#77736f" d="M927.5 482.9h1.9v2.5h-1.9zM920.1 486.1h1.9v2.5h-1.9z"/>
<path fill="#8d8985" d="M917.6 486.1h1.9v2.5h-1.9z"/>
<rect x="903.7" y="486.7" width="8.3" height="7.1" fill="#55524f" stroke="#858585" stroke-width="1.2"/>
<rect x="915.3" y="488.5" width="7.1" height="10.7" fill="#2b2b2b" stroke="#858585" stroke-width="1.2"/>
<rect x="892.9" y="494.8" width="9.8" height="7.1" fill="#1d1b1c" stroke="#858585" stroke-width="1.2"/>
<rect x="927" y="494.8" width="10.7" height="8" fill="#1d1b1c" stroke="#858585" stroke-width="1.2"/>
<rect x="914.8" y="499.7" width="11.7" height="4.5" fill="#6b6865" opacity=".55"/>
<path fill="#77736f" d="M915.1 500h2.3v1.6h-2.3zM918 502.2h2.3v1.6h-2.3z"/>
<path fill="#8a6f63" d="M921 500h2.3v1.6h-2.3z"/>
<path fill="#8d8985" d="M923.9 500h2.3v1.6h-2.3z"/>
<path fill="#6c6a68" d="M915.1 502.2h2.3v1.6h-2.3zM921 502.2h2.3v1.6h-2.3z"/>
<rect x="962.6" y="496.6" width="6.9" height="8.9" fill="#1d1b1c" stroke="#858585" stroke-width="1.2"/>
<rect x="1030.6" y="495.2" width="5" height="9" fill="#857068"/>
<rect x="1043" y="342.4" width="11.7" height="12.5" fill="#9a9a94"/>
<rect x="1044" y="343.4" width="9.7" height="5.2" fill="#c9c9bd"/>
<rect x="1044" y="348.6" width="9.7" height="5.2" fill="#86a088"/>
<rect x="1016.7" y="384.1" width="16.8" height="10" fill="#1d1b1c" stroke="#858585" stroke-width="1.2"/>
<rect x="1016.7" y="398.7" width="16.8" height="10.2" fill="#1d1b1c" stroke="#858585" stroke-width="1.2"/>
<rect x="1036.7" y="387.1" width="7.1" height="5.3" fill="#6d6a66"/>
<rect x="1037.1" y="396.9" width="6.8" height="13.4" fill="#6b6865" opacity=".55"/>
<path fill="#8a6f63" d="M1037.4 397.2h1.7v2.1h-1.7zM1039.6 397.2h1.7v2.1h-1.7zM1041.9 397.2h1.7v2.1h-1.7zM1037.4 399.9h1.7v2.1h-1.7zM1039.6 399.9h1.7v2.1h-1.7zM1039.6 402.6h1.7v2.1h-1.7zM1041.9 402.6h1.7v2.1h-1.7zM1039.6 405.2h1.7v2.1h-1.7zM1041.9 405.2h1.7v2.1h-1.7zM1039.6 407.9h1.7v2.1h-1.7z"/>
<path fill="#8d8985" d="M1041.9 399.9h1.7v2.1h-1.7zM1037.4 407.9h1.7v2.1h-1.7z"/>
<rect x="1010" y="384.5" width="3.6" height="9.8" fill="#6b6865" opacity=".55"/>
<path fill="#8a6f63" d="M1010.3 384.8h3v1.8h-3z"/>
<path fill="#9c9894" d="M1010.3 387.2h3v1.8h-3z"/>
<path fill="#6c6a68" d="M1010.3 392.1h3v1.8h-3z"/>
<rect x="1010" y="397.8" width="3.6" height="10.7" fill="#6b6865" opacity=".55"/>
<path fill="#8a6f63" d="M1010.3 398.1h3v2.1h-3z"/>
<path fill="#6c6a68" d="M1010.3 400.8h3v2.1h-3zM1010.3 406.1h3v2.1h-3z"/>
<rect x="1027.8" y="411.7" width="13.9" height="12.5" fill="#98a79c"/>
<rect x="1030.8" y="413.7" width="7.9" height="3.4" fill="#3658c4"/>
<rect x="1030.8" y="418.8" width="7.9" height="3.4" fill="#3658c4"/>
<rect x="1044.2" y="417.4" width="7.7" height="6.2" fill="#6b6865" opacity=".55"/>
<path fill="#9c9894" d="M1044.5 417.7h2v2.5h-2zM1044.5 420.8h2v2.5h-2z"/>
<path fill="#6c6a68" d="M1047.1 417.7h2v2.5h-2z"/>
<path fill="#8a6f63" d="M1047.1 420.8h2v2.5h-2zM1049.6 420.8h2v2.5h-2z"/>
<rect x="1064.8" y="394.7" width="1.9" height="1.9" fill="#bb8e1e"/>
<rect x="1204.7" y="394.7" width="1.9" height="1.9" fill="#bb8e1e"/>
<rect x="1204.7" y="517.7" width="1.9" height="1.9" fill="#bb8e1e"/>
<rect x="1091.6" y="389.8" width="33.4" height="22.2" fill="#3f3f3f" stroke="#7c7c7c" stroke-width="1.2"/>
<rect x="1147.3" y="387.6" width="33.2" height="15.6" fill="#3f3f3f" stroke="#7c7c7c" stroke-width="1.2"/>
<rect x="1195.4" y="417.9" width="20.7" height="79.2" fill="#3f3f3f" stroke="#7c7c7c" stroke-width="1.2"/>
<rect x="1059.9" y="414.7" width="12.5" height="5.3" fill="#6b6865" opacity=".55"/>
<path fill="#6c6a68" d="M1060.2 415h1.9v2.1h-1.9z"/>
<path fill="#77736f" d="M1062.7 415h1.9v2.1h-1.9zM1067.7 415h1.9v2.1h-1.9zM1060.2 417.7h1.9v2.1h-1.9zM1062.7 417.7h1.9v2.1h-1.9zM1065.2 417.7h1.9v2.1h-1.9z"/>
<path fill="#9c9894" d="M1070.2 415h1.9v2.1h-1.9zM1070.2 417.7h1.9v2.1h-1.9z"/>
<rect x="1066.1" y="421.1" width="9.3" height="6.8" fill="#3a3a3a" stroke="#858585" stroke-width="1.2"/>
<rect x="1075.9" y="423.7" width="7.1" height="8" fill="#6b6865" opacity=".55"/>
<path fill="#6c6a68" d="M1076.2 424h1.8v2.1h-1.8zM1078.6 429.3h1.8v2.1h-1.8zM1081 429.3h1.8v2.1h-1.8z"/>
<path fill="#8a6f63" d="M1078.6 424h1.8v2.1h-1.8zM1081 424h1.8v2.1h-1.8z"/>
<path fill="#9c9894" d="M1076.2 426.6h1.8v2.1h-1.8z"/>
<path fill="#8d8985" d="M1078.6 426.6h1.8v2.1h-1.8zM1081 426.6h1.8v2.1h-1.8zM1076.2 429.3h1.8v2.1h-1.8z"/>
<rect x="1086.6" y="426.7" width="5.7" height="6.8" fill="#77736f"/>
<rect x="1051.9" y="422.4" width="6.6" height="15" fill="#8a8784"/>
<rect x="1052.9" y="423.4" width="4.6" height="2" fill="#b8b8b8"/>
<rect x="1053.4" y="425.4" width="3.6" height="9" fill="#f0f0f0"/>
<rect x="1052.9" y="434.4" width="4.6" height="2" fill="#b8b8b8"/>
<rect x="1031" y="430.7" width="10.2" height="9" fill="#1d1b1c" stroke="#858585" stroke-width="1.2"/>
<rect x="1027.8" y="424.5" width="6.2" height="4.5" fill="#6d6a66"/>
<rect x="1044.7" y="429.9" width="7.1" height="8.9" fill="#8a8784"/>
<path fill="#8a6f63" d="M1045.5 430.7h5.5v7.3h-5.5z"/>
<rect x="1059" y="429.9" width="6.2" height="8.9" fill="#8a8784"/>
<path fill="#8a6f63" d="M1059.8 430.7h4.6v7.3h-4.6z"/>
<rect x="1048.3" y="439.7" width="38.7" height="17.8" fill="#8a8784"/>
<path fill="#8a6f63" d="M1049.1 440.5h3.9v7.3h-3.9zM1054.6 440.5h3.9v7.3h-3.9zM1060.2 440.5h3.9v7.3h-3.9zM1065.7 440.5h3.9v7.3h-3.9zM1071.2 440.5h3.9v7.3h-3.9zM1076.7 440.5h3.9v7.3h-3.9zM1082.2 440.5h3.9v7.3h-3.9zM1049.1 449.4h3.9v7.3h-3.9zM1054.6 449.4h3.9v7.3h-3.9zM1060.2 449.4h3.9v7.3h-3.9zM1065.7 449.4h3.9v7.3h-3.9zM1071.2 449.4h3.9v7.3h-3.9zM1076.7 449.4h3.9v7.3h-3.9zM1082.2 449.4h3.9v7.3h-3.9z"/>
<rect x="1072.4" y="431.7" width="14.3" height="7.1" fill="#6b6865" opacity=".55"/>
<path fill="#8a6f63" d="M1072.7 432h2.3v1.8h-2.3zM1081.2 432h2.3v1.8h-2.3zM1072.7 434.3h2.3v1.8h-2.3zM1078.4 434.3h2.3v1.8h-2.3zM1081.2 436.7h2.3v1.8h-2.3z"/>
<path fill="#9c9894" d="M1075.5 432h2.3v1.8h-2.3zM1072.7 436.7h2.3v1.8h-2.3zM1078.4 436.7h2.3v1.8h-2.3z"/>
<path fill="#77736f" d="M1078.4 432h2.3v1.8h-2.3zM1081.2 434.3h2.3v1.8h-2.3zM1075.5 436.7h2.3v1.8h-2.3zM1084.1 436.7h2.3v1.8h-2.3z"/>
<path fill="#6c6a68" d="M1084.1 432h2.3v1.8h-2.3zM1075.5 434.3h2.3v1.8h-2.3z"/>
<path fill="#8d8985" d="M1084.1 434.3h2.3v1.8h-2.3z"/>
<rect x="1019.8" y="431.7" width="8" height="23.2" fill="#6b6865" opacity=".55"/>
<path fill="#8a6f63" d="M1020.1 432h2.1v2h-2.1zM1025.4 437.1h2.1v2h-2.1zM1022.8 447.4h2.1v2h-2.1z"/>
<path fill="#6c6a68" d="M1025.4 432h2.1v2h-2.1zM1020.1 447.4h2.1v2h-2.1zM1025.4 447.4h2.1v2h-2.1zM1020.1 452.6h2.1v2h-2.1zM1025.4 452.6h2.1v2h-2.1z"/>
<path fill="#9c9894" d="M1022.8 434.5h2.1v2h-2.1zM1020.1 437.1h2.1v2h-2.1zM1025.4 439.7h2.1v2h-2.1zM1022.8 444.8h2.1v2h-2.1z"/>
<path fill="#77736f" d="M1020.1 442.3h2.1v2h-2.1zM1022.8 442.3h2.1v2h-2.1zM1020.1 444.8h2.1v2h-2.1zM1025.4 444.8h2.1v2h-2.1z"/>
<path fill="#8d8985" d="M1025.4 450h2.1v2h-2.1zM1022.8 452.6h2.1v2h-2.1z"/>
<rect x="1026.9" y="449.1" width="8" height="5.7" fill="#857068"/>
<rect x="1033.2" y="445.6" width="18.7" height="5.3" fill="#bdbdb8"/>
<rect x="1046.5" y="446.3" width="4.8" height="3.9" fill="#efefef"/>
<rect x="1048.8" y="458" width="6.1" height="8.4" fill="#8a8784"/>
<rect x="1049.8" y="459" width="4.1" height="0.7" fill="#b8b8b8"/>
<rect x="1050.3" y="459.7" width="3.1" height="5" fill="#f0f0f0"/>
<rect x="1049.8" y="464.7" width="4.1" height="0.7" fill="#b8b8b8"/>
<rect x="1031" y="463.4" width="10.6" height="7.9" fill="#1d1b1c" stroke="#858585" stroke-width="1.2"/>
<rect x="1024.3" y="463.7" width="5.3" height="7.1" fill="#857068"/>
<rect x="1044.7" y="462.9" width="20.5" height="8.9" fill="#8a8784"/>
<path fill="#8a6f63" d="M1045.5 463.7h5.2v7.3h-5.2zM1052.4 463.7h5.2v7.3h-5.2zM1059.2 463.7h5.2v7.3h-5.2z"/>
<rect x="1045.6" y="471.8" width="41.3" height="16.9" fill="#8a8784"/>
<path fill="#8a6f63" d="M1046.4 472.6h4.3v6.9h-4.3zM1052.3 472.6h4.3v6.9h-4.3zM1058.2 472.6h4.3v6.9h-4.3zM1064.2 472.6h4.3v6.9h-4.3zM1070.1 472.6h4.3v6.9h-4.3zM1076 472.6h4.3v6.9h-4.3zM1081.9 472.6h4.3v6.9h-4.3zM1046.4 481h4.3v6.9h-4.3zM1052.3 481h4.3v6.9h-4.3zM1058.2 481h4.3v6.9h-4.3zM1064.2 481h4.3v6.9h-4.3zM1070.1 481h4.3v6.9h-4.3zM1076 481h4.3v6.9h-4.3zM1081.9 481h4.3v6.9h-4.3z"/>
<rect x="1022.5" y="470.9" width="6.8" height="17.5" fill="#6b6865" opacity=".55"/>
<path fill="#6c6a68" d="M1022.8 471.2h1.7v1.9h-1.7zM1027.3 471.2h1.7v1.9h-1.7zM1022.8 478.7h1.7v1.9h-1.7zM1027.3 481.1h1.7v1.9h-1.7zM1027.3 483.6h1.7v1.9h-1.7zM1022.8 486.1h1.7v1.9h-1.7z"/>
<path fill="#77736f" d="M1025 471.2h1.7v1.9h-1.7zM1022.8 473.7h1.7v1.9h-1.7zM1025 473.7h1.7v1.9h-1.7zM1022.8 476.2h1.7v1.9h-1.7zM1022.8 481.1h1.7v1.9h-1.7z"/>
<path fill="#9c9894" d="M1027.3 473.7h1.7v1.9h-1.7zM1025 478.7h1.7v1.9h-1.7z"/>
<path fill="#8a6f63" d="M1027.3 476.2h1.7v1.9h-1.7zM1025 483.6h1.7v1.9h-1.7zM1027.3 486.1h1.7v1.9h-1.7z"/>
<path fill="#8d8985" d="M1025 481.1h1.7v1.9h-1.7zM1025 486.1h1.7v1.9h-1.7z"/>
<rect x="1033.2" y="477.1" width="18.7" height="5.9" fill="#bdbdb8"/>
<rect x="1045.6" y="477.6" width="5.7" height="4.8" fill="#efefef"/>
<rect x="1067" y="488.7" width="7.1" height="5.3" fill="#6b6865" opacity=".55"/>
<path fill="#8d8985" d="M1067.3 489h1.8v2.1h-1.8zM1069.7 489h1.8v2.1h-1.8zM1072.1 489h1.8v2.1h-1.8z"/>
<path fill="#9c9894" d="M1067.3 491.7h1.8v2.1h-1.8zM1069.7 491.7h1.8v2.1h-1.8z"/>
<rect x="1073.3" y="490.5" width="13.7" height="9.3" fill="#6b6865" opacity=".55"/>
<path fill="#8d8985" d="M1073.6 490.8h2.1v2.5h-2.1zM1084.5 490.8h2.1v2.5h-2.1z"/>
<path fill="#8a6f63" d="M1076.3 490.8h2.1v2.5h-2.1zM1079 490.8h2.1v2.5h-2.1zM1081.8 496.9h2.1v2.5h-2.1z"/>
<path fill="#77736f" d="M1081.8 490.8h2.1v2.5h-2.1zM1073.6 493.9h2.1v2.5h-2.1zM1076.3 493.9h2.1v2.5h-2.1zM1084.5 493.9h2.1v2.5h-2.1z"/>
<path fill="#6c6a68" d="M1079 493.9h2.1v2.5h-2.1zM1081.8 493.9h2.1v2.5h-2.1zM1076.3 496.9h2.1v2.5h-2.1zM1079 496.9h2.1v2.5h-2.1z"/>
<path fill="#9c9894" d="M1073.6 496.9h2.1v2.5h-2.1zM1084.5 496.9h2.1v2.5h-2.1z"/>
<rect x="1055.9" y="496.3" width="10.9" height="7" fill="#3a3a3a" stroke="#858585" stroke-width="1.2"/>
<rect x="1050.6" y="495.8" width="3" height="11.6" fill="#77736f"/>
<rect x="1067.4" y="496.7" width="4.1" height="7.1" fill="#77736f"/>
<rect x="1031" y="495.5" width="4.3" height="8.9" fill="#857068"/>
<rect x="1113.7" y="431.3" width="35.6" height="6.1" fill="#6b6865" opacity=".55"/>
<path fill="#77736f" d="M1114 431.6h1.9v2.4h-1.9zM1119.1 431.6h1.9v2.4h-1.9zM1126.7 431.6h1.9v2.4h-1.9zM1129.3 431.6h1.9v2.4h-1.9zM1134.4 431.6h1.9v2.4h-1.9zM1116.5 434.6h1.9v2.4h-1.9zM1147.1 434.6h1.9v2.4h-1.9z"/>
<path fill="#8a6f63" d="M1116.5 431.6h1.9v2.4h-1.9zM1119.1 434.6h1.9v2.4h-1.9zM1136.9 434.6h1.9v2.4h-1.9zM1144.5 434.6h1.9v2.4h-1.9z"/>
<path fill="#9c9894" d="M1121.6 431.6h1.9v2.4h-1.9zM1124.2 431.6h1.9v2.4h-1.9zM1142 431.6h1.9v2.4h-1.9zM1114 434.6h1.9v2.4h-1.9zM1124.2 434.6h1.9v2.4h-1.9z"/>
<path fill="#8d8985" d="M1136.9 431.6h1.9v2.4h-1.9zM1139.5 431.6h1.9v2.4h-1.9zM1126.7 434.6h1.9v2.4h-1.9zM1129.3 434.6h1.9v2.4h-1.9zM1142 434.6h1.9v2.4h-1.9z"/>
<path fill="#6c6a68" d="M1144.5 431.6h1.9v2.4h-1.9zM1147.1 431.6h1.9v2.4h-1.9zM1121.6 434.6h1.9v2.4h-1.9zM1131.8 434.6h1.9v2.4h-1.9zM1134.4 434.6h1.9v2.4h-1.9z"/>
<rect x="1106.2" y="435.6" width="5.7" height="31.4" fill="#6b6865" opacity=".55"/>
<path fill="#8a6f63" d="M1106.5 435.9h2.3v2h-2.3zM1106.5 446.3h2.3v2h-2.3zM1109.4 456.8h2.3v2h-2.3zM1106.5 459.4h2.3v2h-2.3z"/>
<path fill="#9c9894" d="M1109.4 435.9h2.3v2h-2.3zM1109.4 438.5h2.3v2h-2.3zM1109.4 446.3h2.3v2h-2.3zM1106.5 451.6h2.3v2h-2.3zM1106.5 456.8h2.3v2h-2.3zM1106.5 464.6h2.3v2h-2.3zM1109.4 464.6h2.3v2h-2.3z"/>
<path fill="#77736f" d="M1106.5 438.5h2.3v2h-2.3zM1106.5 454.2h2.3v2h-2.3zM1106.5 462h2.3v2h-2.3z"/>
<path fill="#8d8985" d="M1109.4 441.1h2.3v2h-2.3zM1106.5 443.7h2.3v2h-2.3zM1109.4 443.7h2.3v2h-2.3zM1109.4 449h2.3v2h-2.3zM1109.4 451.6h2.3v2h-2.3zM1109.4 454.2h2.3v2h-2.3zM1109.4 459.4h2.3v2h-2.3z"/>
<path fill="#6c6a68" d="M1109.4 462h2.3v2h-2.3z"/>
<rect x="1111.9" y="466.9" width="14.8" height="5.7" fill="#6b6865" opacity=".55"/>
<path fill="#77736f" d="M1112.2 467.2h1.9v2.3h-1.9zM1122.1 467.2h1.9v2.3h-1.9z"/>
<path fill="#6c6a68" d="M1117.1 467.2h1.9v2.3h-1.9zM1119.6 467.2h1.9v2.3h-1.9zM1124.5 467.2h1.9v2.3h-1.9z"/>
<path fill="#9c9894" d="M1112.2 470.1h1.9v2.3h-1.9z"/>
<path fill="#8a6f63" d="M1114.7 470.1h1.9v2.3h-1.9zM1122.1 470.1h1.9v2.3h-1.9z"/>
<rect x="1134.7" y="466.9" width="20" height="5.7" fill="#6b6865" opacity=".55"/>
<path fill="#6c6a68" d="M1135 467.2h1.9v2.3h-1.9zM1140 467.2h1.9v2.3h-1.9zM1152.5 467.2h1.9v2.3h-1.9zM1135 470.1h1.9v2.3h-1.9z"/>
<path fill="#8d8985" d="M1137.5 467.2h1.9v2.3h-1.9zM1150 467.2h1.9v2.3h-1.9zM1150 470.1h1.9v2.3h-1.9zM1152.5 470.1h1.9v2.3h-1.9z"/>
<path fill="#77736f" d="M1145 467.2h1.9v2.3h-1.9zM1137.5 470.1h1.9v2.3h-1.9z"/>
<path fill="#8a6f63" d="M1145 470.1h1.9v2.3h-1.9zM1147.5 470.1h1.9v2.3h-1.9z"/>
<rect x="1148.1" y="435.2" width="23.7" height="32.1" fill="#6b6865" opacity=".55"/>
<path fill="#8a7468" d="M1148.4 435.5h2v2.1h-2zM1156.3 440.9h2v2.1h-2zM1158.9 440.9h2v2.1h-2zM1164.2 440.9h2v2.1h-2zM1169.4 440.9h2v2.1h-2zM1156.3 448.9h2v2.1h-2zM1166.8 451.6h2v2.1h-2zM1169.4 451.6h2v2.1h-2z"/>
<path fill="#6c6a68" d="M1151 435.5h2v2.1h-2zM1164.2 435.5h2v2.1h-2zM1151 438.2h2v2.1h-2zM1153.7 440.9h2v2.1h-2zM1161.5 440.9h2v2.1h-2zM1166.8 443.6h2v2.1h-2zM1169.4 443.6h2v2.1h-2zM1164.2 448.9h2v2.1h-2zM1158.9 451.6h2v2.1h-2zM1158.9 454.2h2v2.1h-2zM1164.2 459.6h2v2.1h-2zM1153.7 464.9h2v2.1h-2z"/>
<path fill="#8d8985" d="M1153.7 435.5h2v2.1h-2zM1169.4 435.5h2v2.1h-2zM1164.2 438.2h2v2.1h-2zM1166.8 438.2h2v2.1h-2zM1166.8 440.9h2v2.1h-2zM1148.4 443.6h2v2.1h-2zM1161.5 443.6h2v2.1h-2zM1148.4 446.2h2v2.1h-2zM1158.9 446.2h2v2.1h-2zM1164.2 446.2h2v2.1h-2zM1169.4 446.2h2v2.1h-2zM1158.9 448.9h2v2.1h-2zM1166.8 448.9h2v2.1h-2zM1151 451.6h2v2.1h-2zM1164.2 451.6h2v2.1h-2zM1151 454.2h2v2.1h-2zM1164.2 454.2h2v2.1h-2zM1151 456.9h2v2.1h-2zM1153.7 456.9h2v2.1h-2zM1169.4 459.6h2v2.1h-2zM1156.3 462.3h2v2.1h-2zM1166.8 462.3h2v2.1h-2zM1148.4 464.9h2v2.1h-2zM1161.5 464.9h2v2.1h-2z"/>
<path fill="#5f79b0" d="M1156.3 435.5h2v2.1h-2zM1151 440.9h2v2.1h-2zM1153.7 446.2h2v2.1h-2zM1156.3 446.2h2v2.1h-2zM1158.9 456.9h2v2.1h-2zM1169.4 456.9h2v2.1h-2zM1156.3 459.6h2v2.1h-2zM1166.8 459.6h2v2.1h-2zM1148.4 462.3h2v2.1h-2zM1158.9 462.3h2v2.1h-2zM1164.2 462.3h2v2.1h-2z"/>
<path fill="#9c9894" d="M1158.9 435.5h2v2.1h-2zM1161.5 435.5h2v2.1h-2zM1151 443.6h2v2.1h-2zM1153.7 443.6h2v2.1h-2zM1158.9 443.6h2v2.1h-2zM1164.2 443.6h2v2.1h-2zM1161.5 448.9h2v2.1h-2zM1153.7 454.2h2v2.1h-2zM1156.3 454.2h2v2.1h-2zM1161.5 454.2h2v2.1h-2zM1148.4 456.9h2v2.1h-2zM1156.3 456.9h2v2.1h-2zM1151 459.6h2v2.1h-2zM1158.9 459.6h2v2.1h-2zM1151 462.3h2v2.1h-2zM1161.5 462.3h2v2.1h-2zM1158.9 464.9h2v2.1h-2zM1166.8 464.9h2v2.1h-2z"/>
<path fill="#77736f" d="M1156.3 438.2h2v2.1h-2zM1169.4 438.2h2v2.1h-2zM1161.5 446.2h2v2.1h-2zM1151 448.9h2v2.1h-2zM1153.7 448.9h2v2.1h-2zM1169.4 448.9h2v2.1h-2zM1153.7 451.6h2v2.1h-2zM1156.3 451.6h2v2.1h-2zM1148.4 454.2h2v2.1h-2zM1166.8 454.2h2v2.1h-2zM1169.4 454.2h2v2.1h-2zM1161.5 456.9h2v2.1h-2zM1148.4 459.6h2v2.1h-2zM1161.5 459.6h2v2.1h-2zM1151 464.9h2v2.1h-2zM1156.3 464.9h2v2.1h-2zM1169.4 464.9h2v2.1h-2z"/>
<rect x="1113.9" y="439" width="34.6" height="27.4" fill="#6f6c69"/>
<rect x="1116" y="441.1" width="30.4" height="23.2" fill="#1d1b1c" stroke="#a0a0a0" stroke-width="1.2"/>
<rect x="1126.7" y="468.2" width="8" height="9.8" fill="#b0b0b0"/>
<rect x="1128.2" y="469.7" width="5" height="6.8" fill="#ececec"/>
<rect x="1138.6" y="474.1" width="7.7" height="3.6" fill="#bb8e1e"/>
<rect x="1113.7" y="486.5" width="35.6" height="5.7" fill="#6b6865" opacity=".55"/>
<path fill="#6c6a68" d="M1114 486.8h1.9v2.3h-1.9zM1129.3 486.8h1.9v2.3h-1.9zM1139.5 486.8h1.9v2.3h-1.9zM1142 486.8h1.9v2.3h-1.9zM1124.2 489.7h1.9v2.3h-1.9zM1131.8 489.7h1.9v2.3h-1.9zM1142 489.7h1.9v2.3h-1.9z"/>
<path fill="#9c9894" d="M1116.5 486.8h1.9v2.3h-1.9zM1119.1 489.7h1.9v2.3h-1.9zM1134.4 489.7h1.9v2.3h-1.9zM1136.9 489.7h1.9v2.3h-1.9zM1139.5 489.7h1.9v2.3h-1.9z"/>
<path fill="#77736f" d="M1119.1 486.8h1.9v2.3h-1.9zM1124.2 486.8h1.9v2.3h-1.9zM1116.5 489.7h1.9v2.3h-1.9z"/>
<path fill="#8a6f63" d="M1121.6 486.8h1.9v2.3h-1.9zM1131.8 486.8h1.9v2.3h-1.9zM1134.4 486.8h1.9v2.3h-1.9zM1144.5 486.8h1.9v2.3h-1.9zM1147.1 486.8h1.9v2.3h-1.9zM1121.6 489.7h1.9v2.3h-1.9zM1126.7 489.7h1.9v2.3h-1.9zM1129.3 489.7h1.9v2.3h-1.9zM1144.5 489.7h1.9v2.3h-1.9z"/>
<path fill="#8d8985" d="M1126.7 486.8h1.9v2.3h-1.9zM1114 489.7h1.9v2.3h-1.9zM1147.1 489.7h1.9v2.3h-1.9z"/>
<rect x="1106.2" y="487.8" width="5.7" height="31.5" fill="#6b6865" opacity=".55"/>
<path fill="#9c9894" d="M1106.5 488.1h2.3v2h-2.3zM1109.4 490.7h2.3v2h-2.3zM1106.5 503.9h2.3v2h-2.3zM1109.4 514.4h2.3v2h-2.3z"/>
<path fill="#8d8985" d="M1109.4 488.1h2.3v2h-2.3zM1106.5 496h2.3v2h-2.3zM1106.5 514.4h2.3v2h-2.3z"/>
<path fill="#6c6a68" d="M1106.5 490.7h2.3v2h-2.3zM1109.4 498.6h2.3v2h-2.3zM1106.5 506.5h2.3v2h-2.3zM1109.4 506.5h2.3v2h-2.3zM1106.5 509.1h2.3v2h-2.3zM1109.4 509.1h2.3v2h-2.3zM1106.5 511.7h2.3v2h-2.3z"/>
<path fill="#8a6f63" d="M1106.5 493.4h2.3v2h-2.3zM1109.4 496h2.3v2h-2.3zM1106.5 498.6h2.3v2h-2.3zM1106.5 501.2h2.3v2h-2.3zM1109.4 501.2h2.3v2h-2.3zM1109.4 503.9h2.3v2h-2.3zM1106.5 517h2.3v2h-2.3z"/>
<path fill="#77736f" d="M1109.4 493.4h2.3v2h-2.3zM1109.4 511.7h2.3v2h-2.3z"/>
<rect x="1111.9" y="520.8" width="14.8" height="7.1" fill="#6b6865" opacity=".55"/>
<path fill="#77736f" d="M1114.7 521.1h1.9v1.8h-1.9zM1114.7 523.4h1.9v1.8h-1.9zM1117.1 523.4h1.9v1.8h-1.9zM1119.6 523.4h1.9v1.8h-1.9zM1122.1 525.8h1.9v1.8h-1.9z"/>
<path fill="#9c9894" d="M1117.1 521.1h1.9v1.8h-1.9zM1112.2 523.4h1.9v1.8h-1.9zM1117.1 525.8h1.9v1.8h-1.9z"/>
<path fill="#8d8985" d="M1119.6 521.1h1.9v1.8h-1.9zM1124.5 523.4h1.9v1.8h-1.9zM1119.6 525.8h1.9v1.8h-1.9z"/>
<path fill="#6c6a68" d="M1124.5 521.1h1.9v1.8h-1.9zM1112.2 525.8h1.9v1.8h-1.9z"/>
<rect x="1134.7" y="520.8" width="20" height="7.1" fill="#6b6865" opacity=".55"/>
<path fill="#8a6f63" d="M1135 521.1h1.9v1.8h-1.9zM1140 521.1h1.9v1.8h-1.9z"/>
<path fill="#6c6a68" d="M1137.5 521.1h1.9v1.8h-1.9zM1152.5 521.1h1.9v1.8h-1.9zM1140 523.4h1.9v1.8h-1.9zM1152.5 523.4h1.9v1.8h-1.9zM1150 525.8h1.9v1.8h-1.9z"/>
<path fill="#9c9894" d="M1142.5 521.1h1.9v1.8h-1.9zM1147.5 525.8h1.9v1.8h-1.9z"/>
<path fill="#8d8985" d="M1145 521.1h1.9v1.8h-1.9zM1135 525.8h1.9v1.8h-1.9zM1137.5 525.8h1.9v1.8h-1.9z"/>
<path fill="#77736f" d="M1145 523.4h1.9v1.8h-1.9zM1147.5 523.4h1.9v1.8h-1.9zM1152.5 525.8h1.9v1.8h-1.9z"/>
<rect x="1148.1" y="490.5" width="23.7" height="32.1" fill="#6b6865" opacity=".55"/>
<path fill="#8d8985" d="M1148.4 490.8h2v2.1h-2zM1156.3 490.8h2v2.1h-2zM1166.8 490.8h2v2.1h-2zM1158.9 493.4h2v2.1h-2zM1164.2 493.4h2v2.1h-2zM1169.4 496.1h2v2.1h-2zM1148.4 498.8h2v2.1h-2zM1153.7 501.5h2v2.1h-2zM1156.3 501.5h2v2.1h-2zM1166.8 501.5h2v2.1h-2zM1164.2 504.1h2v2.1h-2zM1156.3 506.8h2v2.1h-2zM1153.7 509.5h2v2.1h-2zM1161.5 509.5h2v2.1h-2zM1164.2 509.5h2v2.1h-2zM1166.8 509.5h2v2.1h-2zM1151 512.1h2v2.1h-2zM1164.2 512.1h2v2.1h-2zM1169.4 512.1h2v2.1h-2zM1148.4 514.8h2v2.1h-2zM1151 514.8h2v2.1h-2zM1158.9 514.8h2v2.1h-2zM1161.5 514.8h2v2.1h-2zM1169.4 514.8h2v2.1h-2zM1166.8 517.5h2v2.1h-2z"/>
<path fill="#77736f" d="M1151 490.8h2v2.1h-2zM1169.4 490.8h2v2.1h-2zM1166.8 493.4h2v2.1h-2zM1164.2 496.1h2v2.1h-2zM1151 498.8h2v2.1h-2zM1161.5 498.8h2v2.1h-2zM1169.4 498.8h2v2.1h-2zM1151 501.5h2v2.1h-2zM1161.5 501.5h2v2.1h-2zM1164.2 501.5h2v2.1h-2zM1169.4 501.5h2v2.1h-2zM1158.9 504.1h2v2.1h-2zM1148.4 506.8h2v2.1h-2zM1151 509.5h2v2.1h-2zM1156.3 509.5h2v2.1h-2zM1148.4 512.1h2v2.1h-2zM1153.7 512.1h2v2.1h-2zM1161.5 512.1h2v2.1h-2zM1164.2 514.8h2v2.1h-2zM1148.4 517.5h2v2.1h-2zM1156.3 517.5h2v2.1h-2z"/>
<path fill="#6c6a68" d="M1153.7 490.8h2v2.1h-2zM1158.9 490.8h2v2.1h-2zM1156.3 493.4h2v2.1h-2zM1161.5 493.4h2v2.1h-2zM1158.9 496.1h2v2.1h-2zM1161.5 496.1h2v2.1h-2zM1153.7 498.8h2v2.1h-2zM1156.3 498.8h2v2.1h-2zM1161.5 504.1h2v2.1h-2zM1151 506.8h2v2.1h-2zM1158.9 512.1h2v2.1h-2zM1166.8 514.8h2v2.1h-2zM1148.4 520.2h2v2.1h-2zM1151 520.2h2v2.1h-2zM1164.2 520.2h2v2.1h-2zM1169.4 520.2h2v2.1h-2z"/>
<path fill="#5f79b0" d="M1161.5 490.8h2v2.1h-2zM1156.3 514.8h2v2.1h-2zM1158.9 520.2h2v2.1h-2z"/>
<path fill="#9c9894" d="M1148.4 493.4h2v2.1h-2zM1169.4 493.4h2v2.1h-2zM1151 496.1h2v2.1h-2zM1166.8 496.1h2v2.1h-2zM1158.9 498.8h2v2.1h-2zM1164.2 498.8h2v2.1h-2zM1148.4 501.5h2v2.1h-2zM1158.9 501.5h2v2.1h-2zM1169.4 504.1h2v2.1h-2zM1153.7 506.8h2v2.1h-2zM1161.5 506.8h2v2.1h-2zM1166.8 506.8h2v2.1h-2zM1148.4 509.5h2v2.1h-2zM1161.5 517.5h2v2.1h-2zM1164.2 517.5h2v2.1h-2zM1169.4 517.5h2v2.1h-2zM1161.5 520.2h2v2.1h-2z"/>
<path fill="#8a7468" d="M1148.4 496.1h2v2.1h-2zM1156.3 496.1h2v2.1h-2zM1166.8 498.8h2v2.1h-2zM1156.3 504.1h2v2.1h-2zM1164.2 506.8h2v2.1h-2zM1158.9 509.5h2v2.1h-2zM1156.3 520.2h2v2.1h-2z"/>
<rect x="1113.9" y="493.1" width="34.6" height="27.4" fill="#6f6c69"/>
<rect x="1116" y="495.2" width="30.4" height="23.2" fill="#1d1b1c" stroke="#a0a0a0" stroke-width="1.2"/>
<rect x="1126.7" y="521.6" width="8" height="9.8" fill="#b0b0b0"/>
<rect x="1128.2" y="523.1" width="5" height="6.8" fill="#ececec"/>
<rect x="1138.6" y="527.9" width="7.7" height="4.5" fill="#bb8e1e"/>
<rect x="1148.1" y="483.3" width="7.1" height="5.3" fill="#6b6865" opacity=".55"/>
<path fill="#9c9894" d="M1148.4 483.6h1.8v2.1h-1.8z"/>
<path fill="#6c6a68" d="M1153.1 483.6h1.8v2.1h-1.8z"/>
<path fill="#77736f" d="M1148.4 486.3h1.8v2.1h-1.8z"/>
<path fill="#8a6f63" d="M1150.8 486.3h1.8v2.1h-1.8zM1153.1 486.3h1.8v2.1h-1.8z"/>
<rect x="1002.8" y="514" width="19.7" height="26.2" fill="#3b3b3b" stroke="#7c7c7c" stroke-width="1.2"/>
<circle cx="1017.200" cy="519.300" r="4.300" fill="#7d9a80"/><circle cx="1017.200" cy="535.200" r="4.300" fill="#7d9a80"/><circle cx="1008.500" cy="527.500" r="4.300" fill="#8a5f4c"/>
<rect x="993.5" y="525" width="9" height="5.5" fill="#6b6865" opacity=".55"/>
<path fill="#8d8985" d="M993.8 525.3h1.6v2.1h-1.6zM1000.5 525.3h1.6v2.1h-1.6zM993.8 528h1.6v2.1h-1.6z"/>
<path fill="#77736f" d="M998.3 525.3h1.6v2.1h-1.6z"/>
<path fill="#6c6a68" d="M1000.5 528h1.6v2.1h-1.6z"/>
<rect x="1038.5" y="513.3" width="7.1" height="4.8" fill="#857068"/>
<rect x="1039" y="518.6" width="9.3" height="7.4" fill="#1d1b1c" stroke="#858585" stroke-width="1.2"/>
<rect x="1051.1" y="519.8" width="9.2" height="6.1" fill="#1d1b1c" stroke="#858585" stroke-width="1.2"/>
<rect x="1065.6" y="527" width="7.1" height="5.9" fill="#857a72"/>
<rect x="1047" y="530.5" width="8.4" height="10.2" fill="#1d1b1c" stroke="#858585" stroke-width="1.2"/>
<rect x="1056" y="530.6" width="3.9" height="6.2" fill="#77736f"/>
<rect x="1032.8" y="538.9" width="7.1" height="6.8" fill="#857a72"/>
<rect x="1046.5" y="544.1" width="6.7" height="9.2" fill="#1d1b1c" stroke="#858585" stroke-width="1.2"/>
<rect x="1054.5" y="544.8" width="3.6" height="6.2" fill="#77736f"/>
<rect x="874.4" y="490" width="5.4" height="6.3" fill="#857068"/>
<rect x="880.6" y="494.1" width="7.3" height="7.6" fill="#1d1b1c" stroke="#858585" stroke-width="1.2"/>
<rect x="892.5" y="495" width="10.1" height="6.7" fill="#1d1b1c" stroke="#858585" stroke-width="1.2"/>
<rect x="904" y="490" width="8.1" height="5.4" fill="#77736f"/>
<rect x="914.2" y="490" width="10.1" height="13.5" fill="#8a8784"/>
<rect x="915.7" y="490" width="7.1" height="9.5" fill="#3a3a3a"/>
<rect x="915.7" y="499.5" width="7.1" height="3" fill="#8a6f63"/>
<rect x="927.3" y="494.5" width="9.8" height="7.6" fill="#1d1b1c" stroke="#858585" stroke-width="1.2"/>
<rect x="877.1" y="502.6" width="6.3" height="4.5" fill="#6b6865" opacity=".55"/>
<path fill="#9c9894" d="M877.4 505.1h1.5v1.6h-1.5z"/>
<path fill="#77736f" d="M879.5 505.1h1.5v1.6h-1.5z"/>
<rect x="962.9" y="496.8" width="6.5" height="8.5" fill="#1d1b1c" stroke="#858585" stroke-width="1.2"/>
<rect x="982.6" y="497.1" width="1.9" height="1.9" fill="#bb8e1e"/>
<rect x="1030.6" y="495.4" width="5" height="8.6" fill="#857068"/>
<rect x="1055.9" y="495.9" width="11.9" height="6.5" fill="#3a3a3a" stroke="#858585" stroke-width="1.2"/>
<rect x="1050.3" y="495.4" width="3.6" height="11.7" fill="#77736f"/>
<rect x="1072.8" y="490" width="13.8" height="9.3" fill="#6b6865" opacity=".55"/>
<path fill="#9c9894" d="M1075.9 490.3h2.2v2.5h-2.2zM1078.6 490.3h2.2v2.5h-2.2zM1081.4 493.4h2.2v2.5h-2.2z"/>
<path fill="#6c6a68" d="M1081.4 490.3h2.2v2.5h-2.2zM1073.1 496.5h2.2v2.5h-2.2z"/>
<path fill="#8d8985" d="M1084.1 490.3h2.2v2.5h-2.2zM1073.1 493.4h2.2v2.5h-2.2z"/>
<path fill="#8a6f63" d="M1075.9 493.4h2.2v2.5h-2.2zM1078.6 493.4h2.2v2.5h-2.2z"/>
<path fill="#77736f" d="M1084.1 493.4h2.2v2.5h-2.2zM1075.9 496.5h2.2v2.5h-2.2zM1078.6 496.5h2.2v2.5h-2.2zM1081.4 496.5h2.2v2.5h-2.2z"/>
<rect x="1068.3" y="490" width="4.5" height="9" fill="#77736f"/>
<rect x="886.9" y="524.1" width="26.9" height="11.1" fill="#8a8784"/>
<rect x="887.9" y="525.1" width="4" height="9.1" fill="#6f9374"/>
<rect x="891.9" y="525.6" width="16.9" height="8.1" fill="#7b574a"/>
<rect x="908.9" y="525.1" width="4" height="9.1" fill="#a9a6a2"/>
<rect x="920.2" y="535.8" width="27.3" height="10.8" fill="#8a8784"/>
<rect x="921.2" y="536.8" width="4" height="8.8" fill="#a9a6a2"/>
<rect x="925.2" y="537.3" width="17.3" height="7.8" fill="#7b574a"/>
<rect x="942.4" y="536.8" width="4" height="8.8" fill="#6f9374"/>
<rect x="920.2" y="554.6" width="27.3" height="10.8" fill="#8a8784"/>
<rect x="921.2" y="555.6" width="4" height="8.8" fill="#a9a6a2"/>
<rect x="925.2" y="556.1" width="17.3" height="7.8" fill="#7b574a"/>
<rect x="942.4" y="555.6" width="4" height="8.8" fill="#6f9374"/>
<rect x="915.7" y="573.5" width="27.3" height="10.8" fill="#8a8784"/>
<rect x="916.7" y="574.5" width="4" height="8.8" fill="#a9a6a2"/>
<rect x="920.7" y="575" width="17.3" height="7.8" fill="#7b574a"/>
<rect x="938" y="574.5" width="4" height="8.8" fill="#6f9374"/>
<rect x="913.5" y="615.7" width="27.3" height="10.4" fill="#8a8784"/>
<rect x="914.5" y="616.7" width="4" height="8.4" fill="#a9a6a2"/>
<rect x="918.5" y="617.2" width="17.3" height="7.4" fill="#7b574a"/>
<rect x="935.8" y="616.7" width="4" height="8.4" fill="#6f9374"/>
<rect x="912.1" y="633.7" width="27.5" height="11.1" fill="#8a8784"/>
<rect x="913.1" y="634.7" width="4" height="9.1" fill="#a9a6a2"/>
<rect x="917.1" y="635.2" width="17.5" height="8.1" fill="#7b574a"/>
<rect x="934.5" y="634.7" width="4" height="9.1" fill="#6f9374"/>
<rect x="1004" y="543.9" width="27.5" height="11.1" fill="#8a8784"/>
<rect x="1005" y="544.9" width="4" height="9.1" fill="#6f9374"/>
<rect x="1009" y="545.4" width="17.5" height="8.1" fill="#7b574a"/>
<rect x="1026.5" y="544.9" width="4" height="9.1" fill="#a9a6a2"/>
<rect x="1004" y="562.7" width="27.5" height="10.8" fill="#8a8784"/>
<rect x="1005" y="563.7" width="4" height="8.8" fill="#6f9374"/>
<rect x="1009" y="564.2" width="17.5" height="7.8" fill="#7b574a"/>
<rect x="1026.5" y="563.7" width="4" height="8.8" fill="#a9a6a2"/>
<rect x="915.7" y="522.3" width="6.3" height="6.3" fill="#6b6865" opacity=".55"/>
<path fill="#77736f" d="M919.1 522.6h2.5v2.5h-2.5z"/>
<path fill="#8a6f63" d="M916 525.8h2.5v2.5h-2.5z"/>
<rect x="926.1" y="520.2" width="16.2" height="12.6" fill="#7a746f"/>
<rect x="927.1" y="521.2" width="14.2" height="10.6" fill="#8a6250"/>
<rect x="931.3" y="521.2" width="5.8" height="10.6" fill="#1c1a19"/>
<rect x="927.1" y="524.2" width="14.2" height="4.5" fill="#1c1a19"/>
<rect x="942.6" y="520.5" width="6.8" height="6.3" fill="#6b6865" opacity=".55"/>
<path fill="#8a6f63" d="M942.9 520.8h1.7v2.5h-1.7zM945.2 524h1.7v2.5h-1.7z"/>
<path fill="#9c9894" d="M945.2 520.8h1.7v2.5h-1.7z"/>
<path fill="#8d8985" d="M947.4 520.8h1.7v2.5h-1.7z"/>
<path fill="#6c6a68" d="M947.4 524h1.7v2.5h-1.7z"/>
<rect x="950.6" y="523.2" width="10.3" height="7.3" fill="#1d1b1c" stroke="#858585" stroke-width="1.2"/>
<rect x="962.4" y="523.2" width="17.6" height="9.9" fill="#6b6865" opacity=".55"/>
<path fill="#6c6a68" d="M962.7 523.5h1.9v1.9h-1.9zM967.7 526h1.9v1.9h-1.9zM977.7 526h1.9v1.9h-1.9zM967.7 528.5h1.9v1.9h-1.9zM975.2 530.9h1.9v1.9h-1.9z"/>
<path fill="#8a6f63" d="M967.7 523.5h1.9v1.9h-1.9zM970.2 523.5h1.9v1.9h-1.9zM965.2 528.5h1.9v1.9h-1.9zM972.7 528.5h1.9v1.9h-1.9zM965.2 530.9h1.9v1.9h-1.9zM970.2 530.9h1.9v1.9h-1.9zM977.7 530.9h1.9v1.9h-1.9z"/>
<path fill="#77736f" d="M975.2 523.5h1.9v1.9h-1.9zM962.7 528.5h1.9v1.9h-1.9z"/>
<path fill="#9c9894" d="M970.2 526h1.9v1.9h-1.9zM970.2 528.5h1.9v1.9h-1.9z"/>
<path fill="#8d8985" d="M972.7 526h1.9v1.9h-1.9zM977.7 528.5h1.9v1.9h-1.9zM967.7 530.9h1.9v1.9h-1.9z"/>
<rect x="967.3" y="528.2" width="7.1" height="4.4" fill="#3a3a3a" stroke="#858585" stroke-width="1.2"/>
<rect x="949.4" y="532.2" width="4.8" height="9" fill="#4a4845"/>
<rect x="949.8" y="542.1" width="5.4" height="13.5" fill="#6b6865" opacity=".55"/>
<path fill="#9c9894" d="M950.1 542.4h2.1v2.1h-2.1zM950.1 545.1h2.1v2.1h-2.1zM950.1 553.1h2.1v2.1h-2.1z"/>
<path fill="#77736f" d="M950.1 550.5h2.1v2.1h-2.1z"/>
<path fill="#8d8985" d="M952.8 553.1h2.1v2.1h-2.1z"/>
<rect x="956.1" y="540.6" width="12" height="14" fill="#7a7672"/>
<rect x="957.1" y="541.6" width="10" height="12" fill="#1c1a19"/>
<rect x="957.1" y="550.1" width="3.5" height="3.5" fill="#e0202a"/>
<rect x="961.1" y="550.6" width="3" height="3" fill="#6f9374"/>
<rect x="963.6" y="550.1" width="3.5" height="3.5" fill="#8a6250"/>
<rect x="957.1" y="541.6" width="3" height="3" fill="#8a6250"/>
<rect x="964.1" y="541.6" width="3" height="3" fill="#8a6250"/>
<rect x="968.6" y="543.9" width="8.1" height="10.8" fill="#6b6865" opacity=".55"/>
<path fill="#8d8985" d="M971.6 544.2h2.1v2.1h-2.1z"/>
<path fill="#77736f" d="M974.3 544.2h2.1v2.1h-2.1zM971.6 549.6h2.1v2.1h-2.1z"/>
<path fill="#9c9894" d="M968.9 546.9h2.1v2.1h-2.1zM971.6 546.9h2.1v2.1h-2.1zM971.6 552.3h2.1v2.1h-2.1z"/>
<path fill="#8a6f63" d="M968.9 549.6h2.1v2.1h-2.1zM968.9 552.3h2.1v2.1h-2.1z"/>
<rect x="890.7" y="539.9" width="8" height="4.4" fill="#2b2b2b" stroke="#858585" stroke-width="1.2"/>
<rect x="900.4" y="539.4" width="10.8" height="5.4" fill="#857068"/>
<rect x="890.9" y="547.8" width="20.3" height="14.9" fill="#7a7672"/>
<rect x="891.9" y="548.8" width="18.3" height="12.9" fill="#8a6250"/>
<rect x="895.4" y="548.8" width="11.3" height="12.9" fill="#2a2826"/>
<rect x="891.9" y="552.8" width="18.3" height="4.9" fill="#2a2826"/>
<rect x="891.9" y="548.8" width="4" height="4" fill="#e0202a"/>
<rect x="899.7" y="556.2" width="4" height="4" fill="#7fb083"/>
<rect x="912.1" y="549.3" width="5" height="9" fill="#857068"/>
<rect x="907.6" y="555.5" width="3.6" height="6.3" fill="#6f9374"/>
<rect x="886" y="562" width="4" height="7.4" fill="#2b2b2b" stroke="#858585" stroke-width="1.2"/>
<rect x="890.5" y="566.3" width="8.6" height="3.6" fill="#857068"/>
<rect x="902.7" y="566.8" width="8.9" height="8.9" fill="#55524f" stroke="#858585" stroke-width="1.2"/>
<rect x="911.2" y="562.7" width="6.6" height="7.2" fill="#6b6865" opacity=".55"/>
<path fill="#8a6f63" d="M911.5 563h1.6v1.8h-1.6zM915.9 565.4h1.6v1.8h-1.6zM915.9 567.8h1.6v1.8h-1.6z"/>
<path fill="#8d8985" d="M915.9 563h1.6v1.8h-1.6zM911.5 565.4h1.6v1.8h-1.6zM913.7 565.4h1.6v1.8h-1.6zM913.7 567.8h1.6v1.8h-1.6z"/>
<rect x="884.2" y="572.6" width="7.2" height="10.8" fill="#6b6865" opacity=".55"/>
<path fill="#8a6f63" d="M884.5 572.9h1.8v2.1h-1.8zM884.5 575.6h1.8v2.1h-1.8zM889.3 575.6h1.8v2.1h-1.8zM884.5 578.3h1.8v2.1h-1.8zM889.3 581h1.8v2.1h-1.8z"/>
<path fill="#9c9894" d="M886.9 572.9h1.8v2.1h-1.8z"/>
<path fill="#8d8985" d="M889.3 572.9h1.8v2.1h-1.8zM886.9 575.6h1.8v2.1h-1.8z"/>
<path fill="#77736f" d="M886.9 578.3h1.8v2.1h-1.8zM889.3 578.3h1.8v2.1h-1.8z"/>
<path fill="#6c6a68" d="M884.5 581h1.8v2.1h-1.8z"/>
<rect x="892.8" y="578.5" width="8.3" height="3.5" fill="#2b2b2b" stroke="#858585" stroke-width="1.2"/>
<rect x="903.1" y="578" width="9.3" height="4.5" fill="#857068"/>
<rect x="891.4" y="585.2" width="20.7" height="14.7" fill="#7a7672"/>
<rect x="892.4" y="586.2" width="18.7" height="12.7" fill="#8a6250"/>
<rect x="895.9" y="586.2" width="11.7" height="12.7" fill="#2a2826"/>
<rect x="892.4" y="590.2" width="18.7" height="4.7" fill="#2a2826"/>
<rect x="892.4" y="586.2" width="4" height="4" fill="#e0202a"/>
<rect x="900.2" y="593.9" width="4" height="4" fill="#7fb083"/>
<rect x="908.1" y="593.3" width="4" height="5.9" fill="#6f9374"/>
<rect x="913" y="587.9" width="5.4" height="9.9" fill="#857068"/>
<rect x="912.1" y="597.7" width="9.9" height="4.5" fill="#6d6a66"/>
<rect x="922.5" y="600.9" width="4.4" height="8" fill="#2b2b2b" stroke="#858585" stroke-width="1.2"/>
<rect x="912.1" y="603.1" width="6.3" height="7.2" fill="#6b6865" opacity=".55"/>
<path fill="#77736f" d="M912.4 603.4h2.5v1.8h-2.5z"/>
<path fill="#6c6a68" d="M915.5 603.4h2.5v1.8h-2.5zM912.4 605.8h2.5v1.8h-2.5z"/>
<path fill="#9c9894" d="M915.5 605.8h2.5v1.8h-2.5z"/>
<path fill="#8a6f63" d="M912.4 608.2h2.5v1.8h-2.5z"/>
<path fill="#8d8985" d="M915.5 608.2h2.5v1.8h-2.5z"/>
<rect x="890.7" y="604" width="8.3" height="3.7" fill="#2b2b2b" stroke="#858585" stroke-width="1.2"/>
<rect x="899.9" y="604" width="8.3" height="3.8" fill="#857068"/>
<rect x="879.8" y="609.9" width="9" height="5.4" fill="#6b6865" opacity=".55"/>
<path fill="#6c6a68" d="M880.1 610.2h2.4v2.1h-2.4zM883 610.2h2.4v2.1h-2.4zM886 612.9h2.4v2.1h-2.4z"/>
<path fill="#8a6f63" d="M886 610.2h2.4v2.1h-2.4z"/>
<path fill="#8d8985" d="M880.1 612.9h2.4v2.1h-2.4zM883 612.9h2.4v2.1h-2.4z"/>
<rect x="890.1" y="609.9" width="9.8" height="4.4" fill="#2b2b2b" stroke="#858585" stroke-width="1.2"/>
<rect x="903.1" y="611.2" width="9.9" height="4.5" fill="#6b6865" opacity=".55"/>
<path fill="#9c9894" d="M903.4 611.5h1.9v1.6h-1.9z"/>
<path fill="#8a6f63" d="M905.9 611.5h1.9v1.6h-1.9zM908.3 613.8h1.9v1.6h-1.9z"/>
<path fill="#6c6a68" d="M908.3 611.5h1.9v1.6h-1.9z"/>
<path fill="#8d8985" d="M905.9 613.8h1.9v1.6h-1.9z"/>
<rect x="887.8" y="618.4" width="22.1" height="16.2" fill="#7a7672"/>
<rect x="888.8" y="619.4" width="20.1" height="14.2" fill="#8a6250"/>
<rect x="892.3" y="619.4" width="13.1" height="14.2" fill="#2a2826"/>
<rect x="888.8" y="623.4" width="20.1" height="6.2" fill="#2a2826"/>
<rect x="904.9" y="629.6" width="4" height="4" fill="#e0202a"/>
<rect x="896.6" y="624.5" width="4" height="4" fill="#7fb083"/>
<rect x="881.5" y="640.8" width="6.3" height="6.3" fill="#77736f"/>
<rect x="889.2" y="637.7" width="8.9" height="8" fill="#3a3a3a" stroke="#858585" stroke-width="1.2"/>
<rect x="899.5" y="637.2" width="9.9" height="9.9" fill="#8a8784"/>
<path fill="#8a6f63" d="M900.3 638h8.3v3.3h-8.3zM900.3 643h8.3v3.3h-8.3z"/>
<rect x="948" y="557.3" width="19.8" height="12.6" fill="#6b6865" opacity=".55"/>
<path fill="#8a6f63" d="M948.3 557.6h1.9v1.9h-1.9zM965.6 560.2h1.9v1.9h-1.9zM958.2 567.7h1.9v1.9h-1.9zM960.6 567.7h1.9v1.9h-1.9z"/>
<path fill="#77736f" d="M953.2 557.6h1.9v1.9h-1.9zM955.7 560.2h1.9v1.9h-1.9zM958.2 560.2h1.9v1.9h-1.9zM963.1 560.2h1.9v1.9h-1.9zM953.2 562.7h1.9v1.9h-1.9zM955.7 565.2h1.9v1.9h-1.9zM958.2 565.2h1.9v1.9h-1.9zM960.6 565.2h1.9v1.9h-1.9zM963.1 565.2h1.9v1.9h-1.9zM963.1 567.7h1.9v1.9h-1.9z"/>
<path fill="#9c9894" d="M955.7 557.6h1.9v1.9h-1.9zM958.2 557.6h1.9v1.9h-1.9zM960.6 560.2h1.9v1.9h-1.9zM948.3 562.7h1.9v1.9h-1.9zM960.6 562.7h1.9v1.9h-1.9zM963.1 562.7h1.9v1.9h-1.9zM953.2 565.2h1.9v1.9h-1.9zM948.3 567.7h1.9v1.9h-1.9z"/>
<path fill="#6c6a68" d="M960.6 557.6h1.9v1.9h-1.9zM950.8 562.7h1.9v1.9h-1.9zM955.7 562.7h1.9v1.9h-1.9zM965.6 567.7h1.9v1.9h-1.9z"/>
<path fill="#8d8985" d="M963.1 557.6h1.9v1.9h-1.9zM965.6 557.6h1.9v1.9h-1.9zM950.8 560.2h1.9v1.9h-1.9zM953.2 560.2h1.9v1.9h-1.9zM958.2 562.7h1.9v1.9h-1.9zM965.6 562.7h1.9v1.9h-1.9zM950.8 565.2h1.9v1.9h-1.9zM965.6 565.2h1.9v1.9h-1.9zM955.7 567.7h1.9v1.9h-1.9z"/>
<rect x="947.1" y="571.7" width="26.9" height="16.2" fill="#6b6865" opacity=".55"/>
<path fill="#77736f" d="M947.4 572h2.1v2.1h-2.1zM963.6 572h2.1v2.1h-2.1zM960.9 577.4h2.1v2.1h-2.1zM966.2 577.4h2.1v2.1h-2.1zM947.4 580.1h2.1v2.1h-2.1zM952.8 580.1h2.1v2.1h-2.1zM952.8 585.5h2.1v2.1h-2.1z"/>
<path fill="#8a6f63" d="M952.8 572h2.1v2.1h-2.1zM958.2 572h2.1v2.1h-2.1zM952.8 577.4h2.1v2.1h-2.1zM950.1 580.1h2.1v2.1h-2.1zM955.5 580.1h2.1v2.1h-2.1zM952.8 582.8h2.1v2.1h-2.1zM955.5 585.5h2.1v2.1h-2.1zM960.9 585.5h2.1v2.1h-2.1zM963.6 585.5h2.1v2.1h-2.1zM966.2 585.5h2.1v2.1h-2.1z"/>
<path fill="#8d8985" d="M955.5 572h2.1v2.1h-2.1zM966.2 572h2.1v2.1h-2.1zM950.1 574.7h2.1v2.1h-2.1zM952.8 574.7h2.1v2.1h-2.1zM955.5 574.7h2.1v2.1h-2.1zM958.2 574.7h2.1v2.1h-2.1zM968.9 574.7h2.1v2.1h-2.1zM950.1 577.4h2.1v2.1h-2.1zM955.5 577.4h2.1v2.1h-2.1zM971.6 577.4h2.1v2.1h-2.1zM950.1 582.8h2.1v2.1h-2.1zM971.6 582.8h2.1v2.1h-2.1zM958.2 585.5h2.1v2.1h-2.1zM971.6 585.5h2.1v2.1h-2.1z"/>
<path fill="#6c6a68" d="M960.9 572h2.1v2.1h-2.1zM968.9 572h2.1v2.1h-2.1zM947.4 574.7h2.1v2.1h-2.1zM960.9 574.7h2.1v2.1h-2.1zM966.2 580.1h2.1v2.1h-2.1zM968.9 580.1h2.1v2.1h-2.1zM955.5 582.8h2.1v2.1h-2.1zM960.9 582.8h2.1v2.1h-2.1zM947.4 585.5h2.1v2.1h-2.1zM950.1 585.5h2.1v2.1h-2.1zM968.9 585.5h2.1v2.1h-2.1z"/>
<path fill="#9c9894" d="M963.6 574.7h2.1v2.1h-2.1zM971.6 574.7h2.1v2.1h-2.1zM947.4 577.4h2.1v2.1h-2.1zM958.2 577.4h2.1v2.1h-2.1zM963.6 577.4h2.1v2.1h-2.1zM968.9 577.4h2.1v2.1h-2.1zM958.2 580.1h2.1v2.1h-2.1zM960.9 580.1h2.1v2.1h-2.1zM963.6 580.1h2.1v2.1h-2.1zM971.6 580.1h2.1v2.1h-2.1zM947.4 582.8h2.1v2.1h-2.1zM958.2 582.8h2.1v2.1h-2.1zM963.6 582.8h2.1v2.1h-2.1zM966.2 582.8h2.1v2.1h-2.1z"/>
<rect x="943.7" y="587.7" width="26" height="25.9" fill="#6f6c69"/>
<rect x="945.8" y="589.8" width="21.8" height="21.6" fill="#1d1b1c" stroke="#9a9a9a" stroke-width="1.2"/>
<rect x="933.6" y="590.6" width="9" height="20.1" fill="#8a8784"/>
<path fill="#8a6f63" d="M934.4 591.4h7.4v3.4h-7.4zM934.4 596.4h7.4v3.4h-7.4zM934.4 601.4h7.4v3.4h-7.4zM934.4 606.4h7.4v3.4h-7.4z"/>
<rect x="969.5" y="587.9" width="10.4" height="26" fill="#6b6865" opacity=".55"/>
<path fill="#8a6f63" d="M969.8 588.2h2v2h-2zM972.4 590.8h2v2h-2zM977.6 590.8h2v2h-2zM969.8 593.4h2v2h-2zM977.6 593.4h2v2h-2zM969.8 601.2h2v2h-2zM969.8 603.8h2v2h-2zM975 609h2v2h-2z"/>
<path fill="#9c9894" d="M972.4 588.2h2v2h-2zM975 590.8h2v2h-2zM975 593.4h2v2h-2zM975 598.6h2v2h-2zM977.6 598.6h2v2h-2zM975 601.2h2v2h-2zM977.6 601.2h2v2h-2zM972.4 603.8h2v2h-2zM977.6 603.8h2v2h-2zM975 606.4h2v2h-2zM977.6 606.4h2v2h-2zM977.6 609h2v2h-2zM977.6 611.6h2v2h-2z"/>
<path fill="#77736f" d="M977.6 588.2h2v2h-2zM969.8 596h2v2h-2zM972.4 596h2v2h-2zM969.8 598.6h2v2h-2zM972.4 601.2h2v2h-2zM969.8 609h2v2h-2zM972.4 611.6h2v2h-2zM975 611.6h2v2h-2z"/>
<path fill="#8d8985" d="M969.8 590.8h2v2h-2zM975 603.8h2v2h-2zM969.8 606.4h2v2h-2zM972.4 609h2v2h-2z"/>
<rect x="943" y="614.3" width="5" height="8.6" fill="#857068"/>
<rect x="951.6" y="615.7" width="6.6" height="13.5" fill="#8a8784"/>
<rect x="952.6" y="616.7" width="4.6" height="1.7" fill="#a9a6a2"/>
<rect x="953.1" y="618.4" width="3.6" height="8.1" fill="#7b574a"/>
<rect x="952.6" y="626.5" width="4.6" height="1.7" fill="#6f9374"/>
<rect x="958.2" y="615.7" width="6.6" height="13.5" fill="#8a8784"/>
<rect x="959.2" y="616.7" width="4.6" height="1.7" fill="#a9a6a2"/>
<rect x="959.7" y="618.4" width="3.6" height="8.1" fill="#7b574a"/>
<rect x="959.2" y="626.5" width="4.6" height="1.7" fill="#6f9374"/>
<rect x="964.9" y="615.7" width="6.5" height="13.5" fill="#8a8784"/>
<rect x="965.9" y="616.7" width="4.5" height="1.7" fill="#a9a6a2"/>
<rect x="966.4" y="618.4" width="3.5" height="8.1" fill="#7b574a"/>
<rect x="965.9" y="626.5" width="4.5" height="1.7" fill="#6f9374"/>
<rect x="960.6" y="629.2" width="9.9" height="3.6" fill="#55524f"/>
<rect x="944.4" y="632.8" width="9.9" height="10.8" fill="#6b6865" opacity=".55"/>
<path fill="#6c6a68" d="M944.7 633.1h1.9v2.1h-1.9zM952.1 633.1h1.9v2.1h-1.9zM944.7 641.1h1.9v2.1h-1.9z"/>
<path fill="#8d8985" d="M947.2 633.1h1.9v2.1h-1.9zM949.6 633.1h1.9v2.1h-1.9zM944.7 638.4h1.9v2.1h-1.9z"/>
<path fill="#9c9894" d="M947.2 635.7h1.9v2.1h-1.9zM949.6 638.4h1.9v2.1h-1.9zM952.1 638.4h1.9v2.1h-1.9zM952.1 641.1h1.9v2.1h-1.9z"/>
<path fill="#8a6f63" d="M947.2 638.4h1.9v2.1h-1.9zM947.2 641.1h1.9v2.1h-1.9z"/>
<rect x="956.6" y="635.4" width="15.6" height="12.6" fill="#7a7672"/>
<rect x="957.6" y="636.4" width="13.6" height="10.6" fill="#1c1a19"/>
<rect x="957.6" y="636.4" width="3.5" height="3.5" fill="#e0202a"/>
<rect x="957.6" y="640.4" width="3" height="3" fill="#6f9374"/>
<rect x="967.7" y="643.5" width="3.5" height="3.5" fill="#8a6250"/>
<rect x="957.6" y="643.5" width="3.5" height="3.5" fill="#8a6250"/>
<rect x="967.7" y="636.4" width="3.5" height="3.5" fill="#8a6250"/>
<rect x="974" y="637.6" width="4.5" height="6.5" fill="#6d6a66"/>
<rect x="1003.3" y="513.8" width="19.3" height="26.8" fill="#3b3b3b" stroke="#7c7c7c" stroke-width="1.2"/>
<circle cx="1017.7" cy="518.7" r="4.300" fill="#7d9a80"/><circle cx="1017.7" cy="535.8" r="4.300" fill="#7d9a80"/><circle cx="1008.7" cy="527.3" r="4.300" fill="#8a5f4c"/>
<rect x="993.8" y="525" width="9" height="5.4" fill="#6b6865" opacity=".55"/>
<path fill="#8d8985" d="M994.1 525.3h1.6v2.1h-1.6zM1000.8 525.3h1.6v2.1h-1.6z"/>
<path fill="#77736f" d="M996.3 525.3h1.6v2.1h-1.6z"/>
<path fill="#8a6f63" d="M996.3 528h1.6v2.1h-1.6zM998.6 528h1.6v2.1h-1.6z"/>
<rect x="1038.1" y="513.3" width="7.7" height="5.4" fill="#857068"/>
<rect x="1039.2" y="518.9" width="8.9" height="7.4" fill="#1d1b1c" stroke="#858585" stroke-width="1.2"/>
<rect x="1051.2" y="520.1" width="9.1" height="6.2" fill="#1d1b1c" stroke="#858585" stroke-width="1.2"/>
<rect x="1065.6" y="526.8" width="7.7" height="6.3" fill="#857a72"/>
<rect x="1046.9" y="530.9" width="8.7" height="9.8" fill="#1d1b1c" stroke="#858585" stroke-width="1.2"/>
<rect x="1056.6" y="530.4" width="3.1" height="6.6" fill="#77736f"/>
<rect x="1032.7" y="538.8" width="7.2" height="6.5" fill="#857a72"/>
<rect x="1046.4" y="544" width="6.7" height="9.2" fill="#1d1b1c" stroke="#858585" stroke-width="1.2"/>
<rect x="1054.8" y="544.8" width="3.6" height="6.3" fill="#77736f"/>
<rect x="1044.4" y="571.7" width="48.3" height="12.2" fill="#8f8f8f"/>
<rect x="1045.4" y="572.7" width="4" height="10.2" fill="#7f9a82"/>
<rect x="1049.4" y="573.2" width="37.3" height="9.2" fill="#8a7f78"/>
<rect x="1086.7" y="572.7" width="5" height="10.2" fill="#b0b0b0"/>
<text x="1067.9" y="581.9" font-size="12" font-weight="700" fill="#a99adb" text-anchor="middle" textLength="36.5" lengthAdjust="spacingAndGlyphs">CF800</text>
<rect x="1097.9" y="571.7" width="48.8" height="12.2" fill="#8f8f8f"/>
<rect x="1098.9" y="572.7" width="4" height="10.2" fill="#b0b0b0"/>
<rect x="1102.9" y="573.2" width="37.8" height="9.2" fill="#8a776e"/>
<rect x="1140.8" y="572.7" width="5" height="10.2" fill="#7f9a82"/>
<text x="1120.5" y="580.9" font-size="12" font-weight="700" fill="#a99adb" text-anchor="middle" textLength="36.5" lengthAdjust="spacingAndGlyphs">CF801</text>
<rect x="1001.9" y="580.7" width="6.8" height="15.6" fill="#8a8784"/>
<rect x="1002.9" y="581.7" width="4.8" height="2.1" fill="#9fae9f"/>
<rect x="1003.4" y="583.8" width="3.8" height="9.4" fill="#d9d9cf"/>
<rect x="1002.9" y="593.2" width="4.8" height="2.1" fill="#9fae9f"/>
<rect x="1018.4" y="594.1" width="11.3" height="26" fill="#8a8784"/>
<rect x="1019.4" y="595.1" width="9.3" height="4" fill="#6f9374"/>
<rect x="1019.9" y="599.1" width="8.3" height="16" fill="#7b574a"/>
<rect x="1019.4" y="615.2" width="9.3" height="4" fill="#a9a6a2"/>
<rect x="1036.9" y="594.1" width="12" height="25.5" fill="#8a8784"/>
<rect x="1037.9" y="595.1" width="10" height="4" fill="#6f9374"/>
<rect x="1038.4" y="599.1" width="9" height="15.5" fill="#7b574a"/>
<rect x="1037.9" y="614.6" width="10" height="4" fill="#a9a6a2"/>
<rect x="1054.8" y="604.9" width="35.4" height="10.8" fill="#8a8784"/>
<rect x="1055.8" y="605.9" width="4" height="8.8" fill="#b5b5b5"/>
<rect x="1059.8" y="606.4" width="25.4" height="7.8" fill="#5c5c5c"/>
<rect x="1085.2" y="605.9" width="4" height="8.8" fill="#b5b5b5"/>
<rect x="1099.7" y="596.8" width="9.9" height="3.6" fill="#857068"/>
<rect x="1108.7" y="593.3" width="10.8" height="8.4" fill="#8a8784"/>
<path fill="#8a6f63" d="M1109.5 594.1h3.8v6.8h-3.8zM1114.9 594.1h3.8v6.8h-3.8z"/>
<rect x="1120.4" y="595" width="20.1" height="7.2" fill="#6b6865" opacity=".55"/>
<path fill="#6c6a68" d="M1120.7 595.3h1.9v1.8h-1.9zM1128.2 595.3h1.9v1.8h-1.9zM1133.2 595.3h1.9v1.8h-1.9zM1123.2 597.7h1.9v1.8h-1.9zM1128.2 597.7h1.9v1.8h-1.9z"/>
<path fill="#9c9894" d="M1123.2 595.3h1.9v1.8h-1.9zM1125.7 595.3h1.9v1.8h-1.9zM1138.3 597.7h1.9v1.8h-1.9zM1128.2 600.1h1.9v1.8h-1.9z"/>
<path fill="#8a6f63" d="M1130.7 595.3h1.9v1.8h-1.9zM1120.7 600.1h1.9v1.8h-1.9zM1130.7 600.1h1.9v1.8h-1.9z"/>
<path fill="#8d8985" d="M1135.8 595.3h1.9v1.8h-1.9zM1138.3 595.3h1.9v1.8h-1.9zM1133.2 597.7h1.9v1.8h-1.9zM1123.2 600.1h1.9v1.8h-1.9zM1133.2 600.1h1.9v1.8h-1.9zM1135.8 600.1h1.9v1.8h-1.9z"/>
<path fill="#77736f" d="M1120.7 597.7h1.9v1.8h-1.9zM1135.8 597.7h1.9v1.8h-1.9zM1125.7 600.1h1.9v1.8h-1.9z"/>
<rect x="1092.5" y="602.2" width="6.3" height="7.2" fill="#6b6865" opacity=".55"/>
<path fill="#6c6a68" d="M1092.8 602.5h2.5v1.8h-2.5zM1096 602.5h2.5v1.8h-2.5z"/>
<path fill="#77736f" d="M1092.8 604.9h2.5v1.8h-2.5z"/>
<path fill="#8a6f63" d="M1092.8 607.3h2.5v1.8h-2.5z"/>
<path fill="#8d8985" d="M1096 607.3h2.5v1.8h-2.5z"/>
<rect x="1098.8" y="602.2" width="23.9" height="18.3" fill="#6f6c69"/>
<rect x="1100.8" y="604.2" width="20" height="14.4" fill="#1d1b1c" stroke="#858585" stroke-width="1.2"/>
<rect x="1123.1" y="602.2" width="12.6" height="19.8" fill="#6b6865" opacity=".55"/>
<path fill="#9c9894" d="M1123.4 602.5h1.9v1.9h-1.9zM1133.4 602.5h1.9v1.9h-1.9zM1123.4 609.9h1.9v1.9h-1.9zM1125.9 609.9h1.9v1.9h-1.9zM1133.4 609.9h1.9v1.9h-1.9zM1130.9 617.3h1.9v1.9h-1.9zM1123.4 619.8h1.9v1.9h-1.9zM1125.9 619.8h1.9v1.9h-1.9zM1133.4 619.8h1.9v1.9h-1.9z"/>
<path fill="#8a7468" d="M1125.9 602.5h1.9v1.9h-1.9zM1125.9 605h1.9v1.9h-1.9zM1133.4 605h1.9v1.9h-1.9zM1123.4 612.4h1.9v1.9h-1.9zM1128.4 612.4h1.9v1.9h-1.9zM1125.9 617.3h1.9v1.9h-1.9zM1128.4 617.3h1.9v1.9h-1.9z"/>
<path fill="#8d8985" d="M1128.4 602.5h1.9v1.9h-1.9zM1130.9 602.5h1.9v1.9h-1.9zM1123.4 605h1.9v1.9h-1.9zM1128.4 607.5h1.9v1.9h-1.9zM1130.9 607.5h1.9v1.9h-1.9zM1133.4 607.5h1.9v1.9h-1.9zM1128.4 609.9h1.9v1.9h-1.9zM1130.9 609.9h1.9v1.9h-1.9zM1133.4 612.4h1.9v1.9h-1.9zM1123.4 614.9h1.9v1.9h-1.9zM1125.9 614.9h1.9v1.9h-1.9zM1130.9 614.9h1.9v1.9h-1.9zM1133.4 614.9h1.9v1.9h-1.9zM1123.4 617.3h1.9v1.9h-1.9zM1133.4 617.3h1.9v1.9h-1.9z"/>
<path fill="#77736f" d="M1128.4 605h1.9v1.9h-1.9zM1130.9 605h1.9v1.9h-1.9zM1123.4 607.5h1.9v1.9h-1.9zM1125.9 607.5h1.9v1.9h-1.9zM1125.9 612.4h1.9v1.9h-1.9zM1128.4 619.8h1.9v1.9h-1.9z"/>
<rect x="1100.6" y="622" width="8.1" height="5.4" fill="#857068"/>
<rect x="1110.5" y="622" width="9.9" height="5.4" fill="#6b6865" opacity=".55"/>
<path fill="#6c6a68" d="M1110.8 622.3h1.9v2.1h-1.9zM1115.7 622.3h1.9v2.1h-1.9z"/>
<path fill="#8a6f63" d="M1113.3 622.3h1.9v2.1h-1.9z"/>
<path fill="#9c9894" d="M1110.8 625h1.9v2.1h-1.9zM1115.7 625h1.9v2.1h-1.9zM1118.2 625h1.9v2.1h-1.9z"/>
<path fill="#77736f" d="M1113.3 625h1.9v2.1h-1.9z"/>
<rect x="1125.9" y="621.2" width="11" height="5.6" fill="#1d1b1c" stroke="#858585" stroke-width="1.2"/>
<rect x="1115" y="629.2" width="11.7" height="4.5" fill="#857a72"/>
<rect x="1120.5" y="634.2" width="8.3" height="10.1" fill="#1d1b1c" stroke="#858585" stroke-width="1.2"/>
<rect x="1129.3" y="632.8" width="5.4" height="6.3" fill="#77736f"/>
<rect x="1034.2" y="620.2" width="6.3" height="9.9" fill="#6b6865" opacity=".55"/>
<path fill="#9c9894" d="M1034.5 620.5h2.5v1.9h-2.5z"/>
<path fill="#77736f" d="M1037.6 620.5h2.5v1.9h-2.5zM1037.6 627.9h2.5v1.9h-2.5z"/>
<path fill="#8a6f63" d="M1034.5 625.4h2.5v1.9h-2.5z"/>
<path fill="#8d8985" d="M1034.5 627.9h2.5v1.9h-2.5z"/>
<rect x="1045.9" y="621.1" width="7.7" height="6.3" fill="#857a72"/>
<rect x="1023" y="630.9" width="8" height="10.3" fill="#1d1b1c" stroke="#858585" stroke-width="1.2"/>
<rect x="1032" y="631" width="4" height="5.4" fill="#77736f"/>
<rect x="1025.7" y="644.6" width="6.5" height="8.3" fill="#1d1b1c" stroke="#858585" stroke-width="1.2"/>
<rect x="1047.1" y="635.1" width="11.3" height="26.9" fill="#8a8784"/>
<rect x="1048.1" y="636.1" width="9.3" height="4" fill="#6f9374"/>
<rect x="1048.6" y="640.1" width="8.3" height="16.9" fill="#7b574a"/>
<rect x="1048.1" y="657" width="9.3" height="4" fill="#a9a6a2"/>
<rect x="1065.2" y="635.1" width="12" height="26.9" fill="#8a8784"/>
<rect x="1066.2" y="636.1" width="10" height="4" fill="#6f9374"/>
<rect x="1066.7" y="640.1" width="9" height="16.9" fill="#7b574a"/>
<rect x="1066.2" y="657" width="10" height="4" fill="#a9a6a2"/>
<rect x="1083.2" y="635.1" width="12" height="26.9" fill="#8a8784"/>
<rect x="1084.2" y="636.1" width="10" height="4" fill="#6f9374"/>
<rect x="1084.7" y="640.1" width="9" height="16.9" fill="#7b574a"/>
<rect x="1084.2" y="657" width="10" height="4" fill="#a9a6a2"/>
<rect x="1102.1" y="635.1" width="11.5" height="26.9" fill="#8a8784"/>
<rect x="1103.1" y="636.1" width="9.5" height="4" fill="#6f9374"/>
<rect x="1103.6" y="640.1" width="8.5" height="16.9" fill="#7b574a"/>
<rect x="1103.1" y="657" width="9.5" height="4" fill="#a9a6a2"/>
<rect x="465.6" y="736" width="1.9" height="1.9" fill="#bb8e1e"/>
<rect x="516.6" y="750.5" width="1.9" height="1.9" fill="#bb8e1e"/>
<rect x="527.6" y="749.6" width="1.9" height="1.9" fill="#bb8e1e"/>
<rect x="565.3" y="732.9" width="1.9" height="1.9" fill="#bb8e1e"/>
<rect x="546.8" y="780.5" width="1.9" height="1.9" fill="#bb8e1e"/>
<rect x="601.9" y="746.4" width="1.9" height="1.9" fill="#bb8e1e"/>
<rect x="668.9" y="746.4" width="1.9" height="1.9" fill="#bb8e1e"/>
<rect x="677" y="790" width="1.9" height="1.9" fill="#bb8e1e"/>
<rect x="681.8" y="790" width="1.9" height="1.9" fill="#bb8e1e"/>
<rect x="742.5" y="737.4" width="1.9" height="1.9" fill="#bb8e1e"/>
<rect x="752" y="737.4" width="1.9" height="1.9" fill="#bb8e1e"/>
<rect x="722.4" y="744.6" width="1.9" height="1.9" fill="#bb8e1e"/>
<rect x="747.5" y="760.2" width="1.9" height="1.9" fill="#bb8e1e"/>
<rect x="465.3" y="745.1" width="27.6" height="52.5" fill="#3b3b3b" stroke="#7c7c7c" stroke-width="1.2"/>
<circle cx="470.9" cy="749.5" r="2.500" fill="#6f9374"/>
<circle cx="479.1" cy="749.5" r="2.500" fill="#6f9374"/>
<circle cx="479.1" cy="757.6" r="2.500" fill="#6f9374"/>
<circle cx="479.1" cy="785" r="2.500" fill="#6f9374"/>
<circle cx="470.9" cy="793.1" r="2.500" fill="#6f9374"/>
<circle cx="479.1" cy="793.1" r="2.500" fill="#6f9374"/>
<circle cx="469.6" cy="759" r="2.500" fill="#8a5f4c"/>
<circle cx="469.6" cy="767.4" r="2.500" fill="#8a5f4c"/>
<circle cx="469.6" cy="775.2" r="2.500" fill="#8a5f4c"/>
<circle cx="477.3" cy="775.2" r="2.500" fill="#8a5f4c"/>
<circle cx="469.6" cy="783.3" r="2.500" fill="#8a5f4c"/>
<circle cx="477.3" cy="767.4" r="2.500" fill="#e0202a"/>
<rect x="486.3" y="755.9" width="4.4" height="4.4" fill="#2a2826" stroke="#cfcfcf" stroke-width="0.9"/>
<rect x="486.3" y="782.9" width="4.4" height="4.4" fill="#2a2826" stroke="#cfcfcf" stroke-width="0.9"/>
<rect x="501.4" y="734.8" width="30.2" height="10.8" fill="#9a9a94"/>
<rect x="502.4" y="735.8" width="4.5" height="8.8" fill="#b4b4b0"/>
<rect x="506.9" y="736.3" width="19.2" height="7.8" fill="#c9c9b5"/>
<rect x="526.1" y="735.8" width="4.5" height="8.8" fill="#86a088"/>
<rect x="536.1" y="733" width="4" height="10.8" fill="#6d6a66"/>
<rect x="540.6" y="734.2" width="11.7" height="8.3" fill="#9a9a94"/>
<rect x="542" y="735.3" width="8.4" height="6.1" fill="#c9c9b5"/>
<rect x="534.8" y="746.1" width="9.3" height="4.8" fill="#857068"/>
<rect x="520.4" y="757.4" width="17" height="27.7" fill="#3f3f3f" stroke="#7c7c7c" stroke-width="1.2"/>
<rect x="568.9" y="738.4" width="12" height="47.6" fill="#8a8784"/>
<rect x="569.9" y="739.4" width="10" height="4" fill="#6f9374"/>
<rect x="570.4" y="743.4" width="9" height="37.6" fill="#7b574a"/>
<rect x="569.9" y="780.9" width="10" height="4" fill="#a9a6a2"/>
<rect x="608.8" y="769.4" width="55.6" height="19.7" fill="#3f3f3f" stroke="#7c7c7c" stroke-width="1.2"/>
<text x="636.1" y="783.8" font-size="11.5" font-weight="700" fill="#a99adb" text-anchor="middle" textLength="37.5" lengthAdjust="spacingAndGlyphs">JT400</text>
<rect x="681.5" y="708.7" width="12" height="26.6" fill="#8a8784"/>
<rect x="682.5" y="709.7" width="10" height="4" fill="#b4b4b4"/>
<rect x="683" y="713.7" width="9" height="16.6" fill="#efefef"/>
<rect x="682.5" y="730.3" width="10" height="4" fill="#b4b4b4"/>
<rect x="709" y="722.2" width="8.4" height="6.3" fill="#6b6865" opacity=".55"/>
<path fill="#8d8985" d="M709.3 722.5h1.5v1.5h-1.5zM713.5 724.6h1.5v1.5h-1.5z"/>
<path fill="#77736f" d="M711.4 722.5h1.5v1.5h-1.5zM715.6 722.5h1.5v1.5h-1.5zM715.6 724.6h1.5v1.5h-1.5zM709.3 726.7h1.5v1.5h-1.5z"/>
<path fill="#8a6f63" d="M709.3 724.6h1.5v1.5h-1.5zM713.5 726.7h1.5v1.5h-1.5z"/>
<path fill="#9c9894" d="M711.4 724.6h1.5v1.5h-1.5z"/>
<path fill="#6c6a68" d="M711.4 726.7h1.5v1.5h-1.5z"/>
<rect x="719.2" y="698.2" width="63" height="15.8" fill="#8f8f8f"/>
<rect x="725.2" y="699.2" width="50" height="13.8" fill="#8a8784"/>
<rect x="775.2" y="699.2" width="6" height="13.8" fill="#b4b4b4"/>
<text x="750.5" y="712.6" font-size="16.5" font-weight="700" fill="#a99adb" text-anchor="middle" textLength="46.5" lengthAdjust="spacingAndGlyphs">L5230</text>
<rect x="700.9" y="737.1" width="12.4" height="47" fill="#8a8784"/>
<rect x="701.9" y="738.1" width="10.4" height="4" fill="#a9a6a2"/>
<rect x="702.4" y="742.1" width="9.4" height="37" fill="#7b574a"/>
<rect x="701.9" y="779.1" width="10.4" height="4" fill="#6f9374"/>
<rect x="725.5" y="743.2" width="19.8" height="15.8" fill="#7a7672"/>
<rect x="726.5" y="744.2" width="17.8" height="13.8" fill="#2a2826"/>
<rect x="726.5" y="744.2" width="3.5" height="4" fill="#e0202a"/>
<rect x="730.5" y="749.2" width="4" height="4" fill="#8a6250"/>
<rect x="736.5" y="749.2" width="4" height="4" fill="#8a6250"/>
<rect x="741.8" y="746.2" width="2.5" height="9.8" fill="#6f9374"/>
<rect x="726.5" y="754" width="3" height="4" fill="#8a6250"/>
<rect x="727.3" y="759" width="14.4" height="5.4" fill="#6b6865" opacity=".55"/>
<path fill="#b0b0b0" d="M727.6 759.3h1.8v2.1h-1.8zM730 762h1.8v2.1h-1.8zM732.4 762h1.8v2.1h-1.8zM737.2 762h1.8v2.1h-1.8z"/>
<path fill="#8d8985" d="M730 759.3h1.8v2.1h-1.8zM732.4 759.3h1.8v2.1h-1.8z"/>
<path fill="#77736f" d="M734.8 759.3h1.8v2.1h-1.8zM737.2 759.3h1.8v2.1h-1.8zM739.6 759.3h1.8v2.1h-1.8zM739.6 762h1.8v2.1h-1.8z"/>
<rect x="726.4" y="764.4" width="9" height="4.5" fill="#857068"/>
<rect x="743.5" y="739.3" width="9.9" height="3.6" fill="#6b6865" opacity=".55"/>
<path fill="#8d8985" d="M743.8 739.6h1.9v3h-1.9zM751.2 739.6h1.9v3h-1.9z"/>
<path fill="#9c9894" d="M746.2 739.6h1.9v3h-1.9z"/>
<rect x="692.3" y="783.8" width="6.3" height="7.2" fill="#77736f"/>
<rect x="735.4" y="783.8" width="6.3" height="9.7" fill="#857068"/>
<rect x="750.6" y="773.4" width="10.8" height="5.7" fill="#8a8784"/>
<rect x="752.6" y="774.9" width="6.8" height="2.7" fill="#8a6f63"/>
<rect x="799.6" y="679.6" width="26.2" height="25.5" fill="#6f6c69"/>
<rect x="801.6" y="681.5" width="22.3" height="21.6" fill="#1d1b1c" stroke="#858585" stroke-width="1.2"/>
<rect x="832.7" y="679.6" width="26.9" height="25.5" fill="#6f6c69"/>
<rect x="834.6" y="681.5" width="23.1" height="21.6" fill="#1d1b1c" stroke="#858585" stroke-width="1.2"/>
<rect x="866.6" y="687.8" width="11.6" height="12.1" fill="#1d1b1c" stroke="#858585" stroke-width="1.2"/>
<rect x="791.2" y="672.6" width="9" height="19.8" fill="#6b6865" opacity=".55"/>
<path fill="#9c9894" d="M791.5 675.3h2.4v1.9h-2.4zM797.5 690.2h2.4v1.9h-2.4z"/>
<path fill="#8d8985" d="M791.5 677.8h2.4v1.9h-2.4zM794.5 677.8h2.4v1.9h-2.4zM791.5 680.3h2.4v1.9h-2.4z"/>
<path fill="#77736f" d="M797.5 677.8h2.4v1.9h-2.4zM797.5 680.3h2.4v1.9h-2.4zM794.5 682.7h2.4v1.9h-2.4zM791.5 685.2h2.4v1.9h-2.4zM797.5 685.2h2.4v1.9h-2.4z"/>
<path fill="#6c6a68" d="M791.5 682.7h2.4v1.9h-2.4zM797.5 687.7h2.4v1.9h-2.4zM791.5 690.2h2.4v1.9h-2.4z"/>
<rect x="801.1" y="671.7" width="21.5" height="8.4" fill="#6b6865" opacity=".55"/>
<path fill="#8d8985" d="M801.4 672h2.1v2.2h-2.1zM804 672h2.1v2.2h-2.1zM809.4 672h2.1v2.2h-2.1zM804 674.8h2.1v2.2h-2.1zM806.7 674.8h2.1v2.2h-2.1zM809.4 674.8h2.1v2.2h-2.1zM820.2 677.6h2.1v2.2h-2.1z"/>
<path fill="#8a6f63" d="M812.1 672h2.1v2.2h-2.1zM814.8 672h2.1v2.2h-2.1zM820.2 672h2.1v2.2h-2.1zM801.4 674.8h2.1v2.2h-2.1zM817.5 674.8h2.1v2.2h-2.1zM801.4 677.6h2.1v2.2h-2.1zM812.1 677.6h2.1v2.2h-2.1z"/>
<path fill="#77736f" d="M812.1 674.8h2.1v2.2h-2.1zM814.8 674.8h2.1v2.2h-2.1zM820.2 674.8h2.1v2.2h-2.1zM806.7 677.6h2.1v2.2h-2.1zM809.4 677.6h2.1v2.2h-2.1zM814.8 677.6h2.1v2.2h-2.1zM817.5 677.6h2.1v2.2h-2.1z"/>
<rect x="834.3" y="672.2" width="16.7" height="7.5" fill="#6b6865" opacity=".55"/>
<path fill="#8a6f63" d="M834.6 672.5h2.2v1.9h-2.2zM845.7 672.5h2.2v1.9h-2.2zM840.1 675h2.2v1.9h-2.2zM848.5 677.5h2.2v1.9h-2.2z"/>
<path fill="#77736f" d="M840.1 672.5h2.2v1.9h-2.2zM834.6 675h2.2v1.9h-2.2zM845.7 675h2.2v1.9h-2.2zM834.6 677.5h2.2v1.9h-2.2zM837.4 677.5h2.2v1.9h-2.2zM840.1 677.5h2.2v1.9h-2.2zM845.7 677.5h2.2v1.9h-2.2z"/>
<path fill="#8d8985" d="M848.5 675h2.2v1.9h-2.2zM842.9 677.5h2.2v1.9h-2.2z"/>
<rect x="827.1" y="681.5" width="5.9" height="23.3" fill="#6b6865" opacity=".55"/>
<path fill="#8d8985" d="M827.4 681.8h2.4v2h-2.4zM827.4 689.6h2.4v2h-2.4zM830.4 692.2h2.4v2h-2.4zM827.4 697.4h2.4v2h-2.4zM830.4 702.6h2.4v2h-2.4z"/>
<path fill="#77736f" d="M830.4 681.8h2.4v2h-2.4zM827.4 684.4h2.4v2h-2.4z"/>
<path fill="#8a6f63" d="M830.4 684.4h2.4v2h-2.4zM827.4 687h2.4v2h-2.4zM830.4 687h2.4v2h-2.4zM830.4 689.6h2.4v2h-2.4zM830.4 694.8h2.4v2h-2.4zM830.4 697.4h2.4v2h-2.4z"/>
<path fill="#6c6a68" d="M827.4 692.2h2.4v2h-2.4z"/>
<path fill="#9c9894" d="M827.4 694.8h2.4v2h-2.4zM827.4 700h2.4v2h-2.4zM830.4 700h2.4v2h-2.4zM827.4 702.6h2.4v2h-2.4z"/>
<rect x="858.9" y="682.4" width="5.9" height="18.9" fill="#6b6865" opacity=".55"/>
<path fill="#8a6f63" d="M859.2 682.7h2.4v2.1h-2.4zM862.1 685.4h2.4v2.1h-2.4zM862.1 688.1h2.4v2.1h-2.4zM862.1 693.5h2.4v2.1h-2.4zM859.2 696.2h2.4v2.1h-2.4zM862.1 696.2h2.4v2.1h-2.4z"/>
<path fill="#77736f" d="M862.1 682.7h2.4v2.1h-2.4zM859.2 688.1h2.4v2.1h-2.4zM862.1 690.8h2.4v2.1h-2.4zM859.2 698.9h2.4v2.1h-2.4z"/>
<path fill="#8d8985" d="M859.2 690.8h2.4v2.1h-2.4zM859.2 693.5h2.4v2.1h-2.4z"/>
<rect x="813.6" y="704" width="11.7" height="4.5" fill="#6b6865" opacity=".55"/>
<path fill="#8d8985" d="M813.9 704.3h1.7v1.6h-1.7z"/>
<path fill="#8a6f63" d="M818.6 704.3h1.7v1.6h-1.7z"/>
<path fill="#77736f" d="M820.9 704.3h1.7v1.6h-1.7zM818.6 706.5h1.7v1.6h-1.7z"/>
<path fill="#9c9894" d="M820.9 706.5h1.7v1.6h-1.7z"/>
<path fill="#6c6a68" d="M823.3 706.5h1.7v1.6h-1.7z"/>
<rect x="837" y="704.9" width="18" height="6.3" fill="#6b6865" opacity=".55"/>
<path fill="#9c9894" d="M837.3 705.2h2v1.5h-2zM839.8 705.2h2v1.5h-2zM847.5 705.2h2v1.5h-2zM839.8 707.3h2v1.5h-2zM837.3 709.4h2v1.5h-2zM842.4 709.4h2v1.5h-2z"/>
<path fill="#8d8985" d="M842.4 705.2h2v1.5h-2zM852.7 707.3h2v1.5h-2z"/>
<path fill="#8a6f63" d="M845 705.2h2v1.5h-2zM842.4 707.3h2v1.5h-2zM839.8 709.4h2v1.5h-2z"/>
<path fill="#6c6a68" d="M845 707.3h2v1.5h-2zM847.5 707.3h2v1.5h-2zM845 709.4h2v1.5h-2zM850.1 709.4h2v1.5h-2z"/>
<path fill="#77736f" d="M847.5 709.4h2v1.5h-2z"/>
<rect x="858.5" y="704" width="6.3" height="4.5" fill="#6b6865" opacity=".55"/>
<path fill="#8a6f63" d="M858.8 704.3h1.5v1.6h-1.5zM860.9 704.3h1.5v1.6h-1.5zM858.8 706.5h1.5v1.6h-1.5zM860.9 706.5h1.5v1.6h-1.5z"/>
<path fill="#6c6a68" d="M863 704.3h1.5v1.6h-1.5z"/>
<rect x="873.8" y="678" width="4.5" height="7.2" fill="#6d6a66"/>
<rect x="873.8" y="702.2" width="4.5" height="6.3" fill="#6d6a66"/>
<rect x="891.7" y="678.9" width="16.2" height="18" fill="#7a7672"/>
<rect x="892.7" y="679.9" width="14.2" height="16" fill="#1c1a19"/>
<rect x="892.7" y="679.9" width="3.5" height="4" fill="#8a6250"/>
<rect x="897.7" y="679.9" width="4" height="4" fill="#8a6250"/>
<rect x="903.4" y="679.9" width="3.5" height="4" fill="#6f9374"/>
<rect x="892.7" y="691.8" width="4" height="4" fill="#e0202a"/>
<rect x="897.7" y="691.8" width="4" height="4" fill="#6f9374"/>
<rect x="903.4" y="691.8" width="3.5" height="4" fill="#8a6250"/>
<rect x="885.4" y="675.3" width="4.5" height="12.6" fill="#6b6865" opacity=".55"/>
<path fill="#8a6f63" d="M885.7 675.6h1.6v1.9h-1.6zM885.7 685.6h1.6v1.9h-1.6z"/>
<path fill="#77736f" d="M885.7 678.1h1.6v1.9h-1.6z"/>
<path fill="#6c6a68" d="M888 678.1h1.6v1.9h-1.6zM885.7 683.1h1.6v1.9h-1.6zM888 683.1h1.6v1.9h-1.6z"/>
<path fill="#9c9894" d="M885.7 680.6h1.6v1.9h-1.6zM888 685.6h1.6v1.9h-1.6z"/>
<rect x="885.4" y="689.6" width="4.5" height="12.6" fill="#6b6865" opacity=".55"/>
<path fill="#9c9894" d="M885.7 689.9h1.6v1.9h-1.6zM888 695h1.6v1.9h-1.6zM885.7 700h1.6v1.9h-1.6z"/>
<path fill="#6c6a68" d="M885.7 692.4h1.6v1.9h-1.6z"/>
<path fill="#8d8985" d="M885.7 695h1.6v1.9h-1.6zM888 700h1.6v1.9h-1.6z"/>
<path fill="#8a6f63" d="M888 697.5h1.6v1.9h-1.6z"/>
<rect x="898.9" y="697.7" width="10.8" height="6.3" fill="#6b6865" opacity=".55"/>
<path fill="#8d8985" d="M899.2 698h2.1v2.5h-2.1zM901.9 698h2.1v2.5h-2.1zM904.6 698h2.1v2.5h-2.1zM907.3 698h2.1v2.5h-2.1zM899.2 701.2h2.1v2.5h-2.1zM901.9 701.2h2.1v2.5h-2.1z"/>
<path fill="#8a6f63" d="M904.6 701.2h2.1v2.5h-2.1zM907.3 701.2h2.1v2.5h-2.1z"/>
<rect x="936.2" y="690.8" width="1.9" height="1.9" fill="#bb8e1e"/>
<rect x="742.3" y="737.5" width="1.9" height="1.9" fill="#bb8e1e"/>
<rect x="752" y="737.5" width="1.9" height="1.9" fill="#bb8e1e"/>
<rect x="747.7" y="760.5" width="1.9" height="1.9" fill="#bb8e1e"/>
<rect x="764.2" y="767.1" width="1.9" height="1.9" fill="#bb8e1e"/>
<rect x="775.9" y="764.5" width="1.9" height="1.9" fill="#bb8e1e"/>
<rect x="739.9" y="663.5" width="1.9" height="1.9" fill="#bb8e1e"/>
<rect x="804.2" y="713.5" width="8.9" height="8" fill="#3f3f3f" stroke="#6f6f6f" stroke-width="1"/>
<rect x="816.8" y="713.5" width="8.5" height="8" fill="#3f3f3f" stroke="#6f6f6f" stroke-width="1"/>
<rect x="828.8" y="713.5" width="9.4" height="8" fill="#3f3f3f" stroke="#6f6f6f" stroke-width="1"/>
<rect x="841.1" y="713.5" width="9.2" height="8" fill="#3f3f3f" stroke="#6f6f6f" stroke-width="1"/>
<rect x="853.6" y="713.5" width="8.9" height="8" fill="#3f3f3f" stroke="#6f6f6f" stroke-width="1"/>
<rect x="866.2" y="713.5" width="10.1" height="8" fill="#3f3f3f" stroke="#6f6f6f" stroke-width="1"/>
<rect x="791.7" y="709" width="6.2" height="8.9" fill="#201e1c" stroke="#858585" stroke-width="1.2"/>
<rect x="788.5" y="718.4" width="7.2" height="4.5" fill="#55524f"/>
<rect x="788.6" y="734.7" width="90.6" height="22.7" fill="#3f3f3f" stroke="#7c7c7c" stroke-width="1.2"/>
<text x="832.1" y="753.4" font-size="20.5" font-weight="700" fill="#a99adb" text-anchor="middle" textLength="63" lengthAdjust="spacingAndGlyphs">JT200</text>
<rect x="907.1" y="740.8" width="34.9" height="21.1" fill="#3f3f3f" stroke="#7c7c7c" stroke-width="1.2"/>
<rect x="1034.5" y="737.8" width="47" height="22.5" fill="#3f3f3f" stroke="#7c7c7c" stroke-width="1.2"/>
<rect x="1051" y="742.5" width="4" height="2.5" fill="#8d8985"/>
<rect x="1060" y="747" width="4.5" height="6" fill="#8d8985"/>
<rect x="749.9" y="747.6" width="19.8" height="15.6" fill="#7a7672"/>
<rect x="750.9" y="748.6" width="17.8" height="13.6" fill="#2a2826"/>
<rect x="750.9" y="749.6" width="2.5" height="11.6" fill="#6f9374"/>
<rect x="764.6" y="758.3" width="4" height="4" fill="#e0202a"/>
<rect x="755.9" y="754.6" width="4" height="4" fill="#8a6250"/>
<rect x="761.6" y="749.6" width="4" height="4" fill="#8a6250"/>
<rect x="734.6" y="742.6" width="10.8" height="18" fill="#7a7672"/>
<rect x="735.6" y="743.6" width="8.8" height="16" fill="#2a2826"/>
<rect x="741.4" y="746.6" width="3" height="10" fill="#6f9374"/>
<rect x="736.6" y="744.6" width="4" height="4" fill="#8a6250"/>
<rect x="772.5" y="753" width="6.9" height="8.9" fill="#201e1c" stroke="#858585" stroke-width="1.2"/>
<rect x="766.9" y="739.9" width="9" height="5.9" fill="#857068"/>
<rect x="750.8" y="773.1" width="14.7" height="5.7" fill="#8a8784"/>
<rect x="753.3" y="774.6" width="9.7" height="2.7" fill="#8a6f63"/>
<rect x="740" y="783" width="1.8" height="9.9" fill="#857068"/>
<rect x="757.1" y="759.7" width="5.4" height="6.3" fill="#6b6865" opacity=".55"/>
<path fill="#8d8985" d="M760.1 760h2.1v1.5h-2.1zM760.1 762.1h2.1v1.5h-2.1zM760.1 764.1h2.1v1.5h-2.1z"/>
<rect x="768.7" y="764.1" width="3.6" height="5.4" fill="#77736f"/>
<rect x="1049.8" y="728.2" width="4.5" height="4.5" fill="#6d6a66"/>
<rect x="1066.5" y="677.2" width="7.3" height="6.4" fill="#1d1b1c" stroke="#858585" stroke-width="1.2"/>
<rect x="1076.5" y="677.2" width="9.2" height="7.3" fill="#1d1b1c" stroke="#858585" stroke-width="1.2"/>
<rect x="1097.3" y="673.1" width="1.9" height="1.9" fill="#bb8e1e"/>
<rect x="1102.8" y="673.1" width="1.9" height="1.9" fill="#bb8e1e"/>
<rect x="1109.3" y="673.1" width="1.9" height="1.9" fill="#bb8e1e"/>
<rect x="1097.3" y="677.9" width="1.9" height="1.9" fill="#bb8e1e"/>
<rect x="1102.8" y="677.9" width="1.9" height="1.9" fill="#bb8e1e"/>
<rect x="1107.8" y="677.9" width="1.9" height="1.9" fill="#bb8e1e"/>
<rect x="1113.6" y="676.4" width="1.9" height="1.9" fill="#bb8e1e"/>
<rect x="1119.5" y="676.4" width="1.9" height="1.9" fill="#bb8e1e"/>
<rect x="1079.4" y="717.4" width="1.9" height="1.9" fill="#bb8e1e"/>
<rect x="936.1" y="690.6" width="1.9" height="1.9" fill="#bb8e1e"/>
<rect x="1056.9" y="684.5" width="17.4" height="4.8" fill="#6b6865" opacity=".55"/>
<path fill="#9c9894" d="M1057.2 684.8h1.9v1.8h-1.9zM1067.1 684.8h1.9v1.8h-1.9zM1057.2 687.2h1.9v1.8h-1.9zM1067.1 687.2h1.9v1.8h-1.9z"/>
<path fill="#6c6a68" d="M1059.7 684.8h1.9v1.8h-1.9zM1062.1 684.8h1.9v1.8h-1.9zM1064.6 684.8h1.9v1.8h-1.9zM1072.1 684.8h1.9v1.8h-1.9zM1059.7 687.2h1.9v1.8h-1.9z"/>
<path fill="#8a6f63" d="M1069.6 684.8h1.9v1.8h-1.9zM1064.6 687.2h1.9v1.8h-1.9zM1072.1 687.2h1.9v1.8h-1.9z"/>
<path fill="#77736f" d="M1062.1 687.2h1.9v1.8h-1.9z"/>
<rect x="1050.3" y="689.3" width="12" height="9.8" fill="#6b6865" opacity=".55"/>
<path fill="#8d8985" d="M1050.6 689.6h1.8v1.9h-1.8zM1053 689.6h1.8v1.9h-1.8zM1055.4 689.6h1.8v1.9h-1.8zM1057.8 689.6h1.8v1.9h-1.8zM1060.2 689.6h1.8v1.9h-1.8zM1060.2 692.1h1.8v1.9h-1.8zM1050.6 694.5h1.8v1.9h-1.8zM1060.2 697h1.8v1.9h-1.8z"/>
<path fill="#77736f" d="M1053 692.1h1.8v1.9h-1.8zM1050.6 697h1.8v1.9h-1.8zM1053 697h1.8v1.9h-1.8zM1055.4 697h1.8v1.9h-1.8zM1057.8 697h1.8v1.9h-1.8z"/>
<path fill="#8a7468" d="M1057.8 692.1h1.8v1.9h-1.8zM1053 694.5h1.8v1.9h-1.8zM1055.4 694.5h1.8v1.9h-1.8zM1057.8 694.5h1.8v1.9h-1.8zM1060.2 694.5h1.8v1.9h-1.8z"/>
<rect x="1064.3" y="692" width="11.2" height="13.2" fill="#1d1b1c" stroke="#858585" stroke-width="1.2"/>
<rect x="1077.6" y="691.5" width="16.3" height="10.9" fill="#6b6865" opacity=".55"/>
<path fill="#8a6f63" d="M1077.9 691.8h2.1v2.1h-2.1zM1080.6 691.8h2.1v2.1h-2.1zM1091.5 691.8h2.1v2.1h-2.1zM1088.8 694.5h2.1v2.1h-2.1z"/>
<path fill="#77736f" d="M1083.3 691.8h2.1v2.1h-2.1zM1077.9 694.5h2.1v2.1h-2.1zM1080.6 694.5h2.1v2.1h-2.1zM1083.3 694.5h2.1v2.1h-2.1zM1086 694.5h2.1v2.1h-2.1zM1077.9 697.2h2.1v2.1h-2.1zM1080.6 700h2.1v2.1h-2.1zM1083.3 700h2.1v2.1h-2.1zM1088.8 700h2.1v2.1h-2.1z"/>
<path fill="#8d8985" d="M1088.8 691.8h2.1v2.1h-2.1zM1091.5 694.5h2.1v2.1h-2.1zM1080.6 697.2h2.1v2.1h-2.1zM1083.3 697.2h2.1v2.1h-2.1zM1086 697.2h2.1v2.1h-2.1zM1091.5 697.2h2.1v2.1h-2.1z"/>
<rect x="1095.5" y="693.1" width="12.1" height="12.1" fill="#1d1b1c" stroke="#858585" stroke-width="1.2"/>
<rect x="1093.9" y="683.9" width="16.3" height="8.7" fill="#6b6865" opacity=".55"/>
<path fill="#77736f" d="M1094.2 684.2h2.1v2.3h-2.1zM1102.4 684.2h2.1v2.3h-2.1zM1094.2 687.1h2.1v2.3h-2.1zM1096.9 690h2.1v2.3h-2.1zM1099.6 690h2.1v2.3h-2.1z"/>
<path fill="#6c6a68" d="M1096.9 684.2h2.1v2.3h-2.1zM1096.9 687.1h2.1v2.3h-2.1z"/>
<path fill="#9c9894" d="M1099.6 684.2h2.1v2.3h-2.1zM1105.1 684.2h2.1v2.3h-2.1zM1105.1 687.1h2.1v2.3h-2.1z"/>
<path fill="#8d8985" d="M1102.4 687.1h2.1v2.3h-2.1zM1094.2 690h2.1v2.3h-2.1zM1107.8 690h2.1v2.3h-2.1z"/>
<path fill="#8a6f63" d="M1102.4 690h2.1v2.3h-2.1z"/>
<rect x="1108.1" y="690.4" width="5.4" height="6.5" fill="#77736f"/>
<rect x="1054.7" y="702.4" width="7.6" height="12" fill="#8a8784"/>
<rect x="1056.2" y="703.9" width="4.6" height="7.5" fill="#8a6f63"/>
<rect x="1056.2" y="711.4" width="4.6" height="2" fill="#6f9374"/>
<rect x="1077.6" y="702.4" width="16.3" height="12" fill="#8a8784"/>
<rect x="1080.6" y="703.9" width="11.8" height="3.5" fill="#8a6f63"/>
<rect x="1079.1" y="708.9" width="11.8" height="4" fill="#8a6f63"/>
<rect x="1078.6" y="703.9" width="2" height="9" fill="#6f9374"/>
<rect x="1062.8" y="710.5" width="4.9" height="12.1" fill="#1d1b1c" stroke="#858585" stroke-width="1.2"/>
<rect x="1069.3" y="710.5" width="4.9" height="12.1" fill="#1d1b1c" stroke="#858585" stroke-width="1.2"/>
<rect x="1092.2" y="710.5" width="5.1" height="12.1" fill="#1d1b1c" stroke="#858585" stroke-width="1.2"/>
<rect x="1099.2" y="710.5" width="5.1" height="12.1" fill="#1d1b1c" stroke="#858585" stroke-width="1.2"/>
<rect x="1058" y="716.6" width="4.4" height="5.4" fill="#857068"/>
<rect x="1083.4" y="720.9" width="4.4" height="5.4" fill="#857068"/>
<rect x="1049.2" y="729" width="4.4" height="3.5" fill="#8d8985"/>
<rect x="1075.4" y="729" width="5.4" height="3.5" fill="#8d8985"/>
</g></svg><svg class="abs" style="left:60px;top:765px" width="70" height="70" viewBox="60 765 70 70" fill="none" stroke="#6f8bf0" stroke-opacity=".8" stroke-width="1.9"><circle cx="95" cy="799.6" r="13"/><path d="M65 799.600H125M95 769.600V829.600"/></svg><div class="abs" style="left:-100px;top:820px;width:156px;height:30px;overflow:hidden"></div><span class="t " style="left:-44.50px;top:826.92px;font-size:21px;color:#1c1c1c;letter-spacing:-0.045px;">Secondary</span><div id="side" class="abs"></div><div class="abs" style="left:1763px;top:80px;width:19px;height:930px;background:#f6f6f6"></div><div class="abs" style="left:1767.300px;top:82.800px;width:16px;height:921px;background:#c0c0c0;border-radius:9px 0 0 9px"></div><div class="hdr" style="top:90.5px"></div><svg class="abs" style="left:1363px;top:98.5px" width="16" height="14" viewBox="0 0 16 14"><path d="M1 0H14.600L7.800 12.400Z" fill="#111"/></svg><span class="t " style="left:1392.50px;top:98.06px;font-size:16px;color:#1a1a1a;letter-spacing:0.158px;">Net Selected</span><div class="hdr" style="top:209.5px"></div><svg class="abs" style="left:1363px;top:217.5px" width="16" height="14" viewBox="0 0 16 14"><path d="M1 0H14.600L7.800 12.400Z" fill="#111"/></svg><span class="t " style="left:1392.50px;top:217.06px;font-size:16px;color:#1a1a1a;letter-spacing:0.270px;">1 part selected</span><span class="t " style="left:1355.00px;top:128.86px;font-size:16px;color:#1a1a1a;letter-spacing:0.281px;">No net currently selected</span><div class="btn" style="left:1355.0px;width:61.0px"></div><span class="t " style="left:1361.00px;top:246.86px;font-size:16px;color:#1a1a1a;letter-spacing:0.169px;">U8100</span><div class="btn" style="left:1428.5px;width:22.5px"></div><span class="t " style="left:1435.00px;top:246.86px;font-size:16px;color:#1a1a1a;letter-spacing:0.219px;">Z</span><div class="btn" style="left:1463.0px;width:99.0px"></div><span class="t " style="left:1469.00px;top:246.86px;font-size:16px;color:#1a1a1a;letter-spacing:-0.114px;">PDF Search</span><span class="t " style="left:1574.00px;top:246.86px;font-size:16px;color:#1a1a1a;letter-spacing:0.217px;">420 Pins</span><div class="abs" style="left:1355px;top:269px;width:378px;height:741px;background:#fff"></div><div class="abs" style="left:1361px;top:274px;width:368px;height:740px;background:#f8f8f8;box-sizing:border-box;border:1px solid #4b4b5a;border-left:2px solid #55556a"></div><span class="t " style="left:1380.60px;top:280.16px;font-size:16px;color:#1a1a1a;letter-spacing:0.094px;">1</span><span class="t " style="left:1398.60px;top:280.16px;font-size:16px;color:#1a1a1a;letter-spacing:-0.787px;">GND</span><div class="row" style="top:299.9px;background:#ebebeb"></div><span class="t " style="left:1380.60px;top:305.66px;font-size:16px;color:#1a1a1a;letter-spacing:0.094px;">2</span><span class="t " style="left:1398.60px;top:305.66px;font-size:16px;color:#1a1a1a;letter-spacing:-0.787px;">GND</span><span class="t " style="left:1380.60px;top:331.16px;font-size:16px;color:#1a1a1a;letter-spacing:0.094px;">3</span><span class="t " style="left:1398.60px;top:331.16px;font-size:16px;color:#1a1a1a;letter-spacing:-0.787px;">GND</span><div class="row" style="top:350.9px;background:#ebebeb"></div><span class="t " style="left:1380.60px;top:356.66px;font-size:16px;color:#1a1a1a;letter-spacing:0.094px;">4</span><span class="t " style="left:1398.60px;top:356.66px;font-size:16px;color:#1a1a1a;letter-spacing:-0.787px;">GND</span><span class="t " style="left:1380.60px;top:382.16px;font-size:16px;color:#1a1a1a;letter-spacing:0.094px;">5</span><span class="t " style="left:1398.60px;top:382.16px;font-size:16px;color:#1a1a1a;letter-spacing:-0.787px;">GND</span><div class="row" style="top:401.9px;background:#ebebeb"></div><span class="t " style="left:1380.60px;top:407.66px;font-size:16px;color:#1a1a1a;letter-spacing:0.094px;">6</span><span class="t " style="left:1398.60px;top:407.66px;font-size:16px;color:#1a1a1a;letter-spacing:-0.358px;">BUCK1_LX0</span><span class="t " style="left:1380.60px;top:433.16px;font-size:16px;color:#1a1a1a;letter-spacing:0.094px;">7</span><span class="t " style="left:1398.60px;top:433.16px;font-size:16px;color:#1a1a1a;letter-spacing:-0.273px;">PP3V8_AON_MPMU_ISNS_VIN</span><div class="row" style="top:452.9px;background:#ebebeb"></div><span class="t " style="left:1380.60px;top:458.66px;font-size:16px;color:#1a1a1a;letter-spacing:0.094px;">8</span><span class="t " style="left:1398.60px;top:458.66px;font-size:16px;color:#1a1a1a;letter-spacing:-0.358px;">BUCK9_LX0</span><span class="t " style="left:1380.60px;top:484.16px;font-size:16px;color:#1a1a1a;letter-spacing:0.094px;">9</span><span class="t " style="left:1398.60px;top:484.16px;font-size:16px;color:#1a1a1a;letter-spacing:-0.787px;">GND</span><div class="row" style="top:503.9px;background:#ebebeb"></div><span class="t " style="left:1376.60px;top:509.66px;font-size:16px;color:#1a1a1a;letter-spacing:0.102px;">10</span><span class="t " style="left:1403.80px;top:509.66px;font-size:16px;color:#1a1a1a;letter-spacing:-0.491px;">BUCK9_LX1</span><span class="t " style="left:1376.60px;top:535.16px;font-size:16px;color:#1a1a1a;letter-spacing:0.695px;">11</span><span class="t " style="left:1403.80px;top:535.16px;font-size:16px;color:#1a1a1a;letter-spacing:-0.273px;">PP3V8_AON_MPMU_ISNS_VIN</span><div class="row" style="top:554.9px;background:#ebebeb"></div><span class="t " style="left:1376.60px;top:560.66px;font-size:16px;color:#1a1a1a;letter-spacing:0.102px;">12</span><span class="t " style="left:1403.80px;top:560.66px;font-size:16px;color:#1a1a1a;letter-spacing:-0.358px;">BUCK4_LX2</span><span class="t " style="left:1376.60px;top:586.16px;font-size:16px;color:#1a1a1a;letter-spacing:0.102px;">13</span><span class="t " style="left:1403.80px;top:586.16px;font-size:16px;color:#1a1a1a;letter-spacing:-0.787px;">GND</span><div class="row" style="top:605.9px;background:#ebebeb"></div><span class="t " style="left:1376.60px;top:611.66px;font-size:16px;color:#1a1a1a;letter-spacing:0.102px;">14</span><span class="t " style="left:1403.80px;top:611.66px;font-size:16px;color:#1a1a1a;letter-spacing:-0.491px;">BUCK4_LX1</span><span class="t " style="left:1376.60px;top:637.16px;font-size:16px;color:#1a1a1a;letter-spacing:0.102px;">15</span><span class="t " style="left:1403.80px;top:637.16px;font-size:16px;color:#1a1a1a;letter-spacing:-0.273px;">PP3V8_AON_MPMU_ISNS_VIN</span><div class="row" style="top:656.9px;background:#ebebeb"></div><span class="t " style="left:1376.60px;top:662.66px;font-size:16px;color:#1a1a1a;letter-spacing:0.102px;">16</span><span class="t " style="left:1403.80px;top:662.66px;font-size:16px;color:#1a1a1a;letter-spacing:-0.358px;">BUCK4_LX0</span><span class="t " style="left:1376.60px;top:688.16px;font-size:16px;color:#1a1a1a;letter-spacing:0.102px;">17</span><span class="t " style="left:1403.80px;top:688.16px;font-size:16px;color:#1a1a1a;letter-spacing:-0.787px;">GND</span><div class="row" style="top:707.9px;background:#ebebeb"></div><span class="t " style="left:1376.60px;top:713.66px;font-size:16px;color:#1a1a1a;letter-spacing:0.102px;">18</span><span class="t " style="left:1403.80px;top:713.66px;font-size:16px;color:#1a1a1a;letter-spacing:-0.479px;">BUCK3_LX</span><span class="t " style="left:1376.60px;top:739.16px;font-size:16px;color:#1a1a1a;letter-spacing:0.102px;">19</span><span class="t " style="left:1403.80px;top:739.16px;font-size:16px;color:#1a1a1a;letter-spacing:-0.273px;">PP3V8_AON_MPMU_ISNS_VIN</span><div class="row" style="top:758.9px;background:#ebebeb"></div><span class="t " style="left:1376.60px;top:764.66px;font-size:16px;color:#1a1a1a;letter-spacing:0.102px;">20</span><span class="t " style="left:1403.80px;top:764.66px;font-size:16px;color:#1a1a1a;letter-spacing:-0.358px;">BUCK13_LX</span><span class="t " style="left:1376.60px;top:790.16px;font-size:16px;color:#1a1a1a;letter-spacing:0.102px;">21</span><span class="t " style="left:1403.80px;top:790.16px;font-size:16px;color:#1a1a1a;letter-spacing:-0.787px;">GND</span><div class="row" style="top:809.9px;background:#ebebeb"></div><span class="t " style="left:1376.60px;top:815.66px;font-size:16px;color:#1a1a1a;letter-spacing:0.102px;">22</span><span class="t " style="left:1403.80px;top:815.66px;font-size:16px;color:#1a1a1a;letter-spacing:-0.273px;">PP3V8_AON_MPMU_ISNS_VIN</span><span class="t " style="left:1376.60px;top:841.16px;font-size:16px;color:#1a1a1a;letter-spacing:0.102px;">23</span><span class="t " style="left:1403.80px;top:841.16px;font-size:16px;color:#1a1a1a;letter-spacing:-0.273px;">PP3V8_AON_MPMU_ISNS_VIN</span><div class="row" style="top:860.9px;background:#ebebeb"></div><span class="t " style="left:1376.60px;top:866.66px;font-size:16px;color:#1a1a1a;letter-spacing:0.102px;">24</span><span class="t " style="left:1403.80px;top:866.66px;font-size:16px;color:#1a1a1a;letter-spacing:-0.273px;">PP3V8_AON_MPMU_ISNS_VIN</span><span class="t " style="left:1376.60px;top:892.16px;font-size:16px;color:#1a1a1a;letter-spacing:0.102px;">25</span><span class="t " style="left:1403.80px;top:892.16px;font-size:16px;color:#1a1a1a;letter-spacing:-0.273px;">PP3V8_AON_MPMU_ISNS_VIN</span><div class="row" style="top:911.9px;background:#ebebeb"></div><span class="t " style="left:1376.60px;top:917.66px;font-size:16px;color:#1a1a1a;letter-spacing:0.102px;">26</span><span class="t " style="left:1403.80px;top:917.66px;font-size:16px;color:#1a1a1a;letter-spacing:-0.787px;">GND</span><span class="t " style="left:1376.60px;top:943.16px;font-size:16px;color:#1a1a1a;letter-spacing:0.102px;">27</span><span class="t " style="left:1403.80px;top:943.16px;font-size:16px;color:#1a1a1a;letter-spacing:-0.358px;">BUCK1_LX0</span><div class="row" style="top:962.9px;background:#ebebeb"></div><span class="t " style="left:1376.60px;top:968.66px;font-size:16px;color:#1a1a1a;letter-spacing:0.102px;">28</span><span class="t " style="left:1403.80px;top:968.66px;font-size:16px;color:#1a1a1a;letter-spacing:-0.273px;">PP3V8_AON_MPMU_ISNS_VIN</span><span class="t " style="left:1376.60px;top:994.16px;font-size:16px;color:#1a1a1a;letter-spacing:0.102px;">29</span><span class="t " style="left:1403.80px;top:994.16px;font-size:16px;color:#1a1a1a;letter-spacing:-0.787px;">GND</span><div class="abs" style="left:1699px;top:275px;width:29px;height:735px;background:#fcfcfc"></div><div class="abs" style="left:1703px;top:278px;width:19.600px;height:54px;background:#c1c1c1;border-radius:10px"></div><svg class="abs" style="left:1560px;top:790px" width="222" height="220" viewBox="1560 790 222 220">
<g transform="translate(1712 912) rotate(-45)">
<rect x="-200" y="-21" width="400" height="42" fill="#1a5886" stroke="#fff" stroke-width="2"/>
<text y="14.2" font-family="Liberation Sans, sans-serif" font-size="38.5" textLength="187" lengthAdjust="spacing" x="-114.5" fill="#fff" stroke-width="0.9"><tspan stroke="#fff">H</tspan><tspan fill="#93bbdc" stroke="#93bbdc">N</tspan><tspan stroke="#fff">F</tspan><tspan fill="#93bbdc" stroke="#93bbdc">IX</tspan><tspan stroke="#fff">.V</tspan><tspan fill="#93bbdc" stroke="#93bbdc">N</tspan></text>
<path d="M-16 -17.500L4.500 15" stroke="#f01818" stroke-width="4.200"/>
</g></svg></div></body></html>
